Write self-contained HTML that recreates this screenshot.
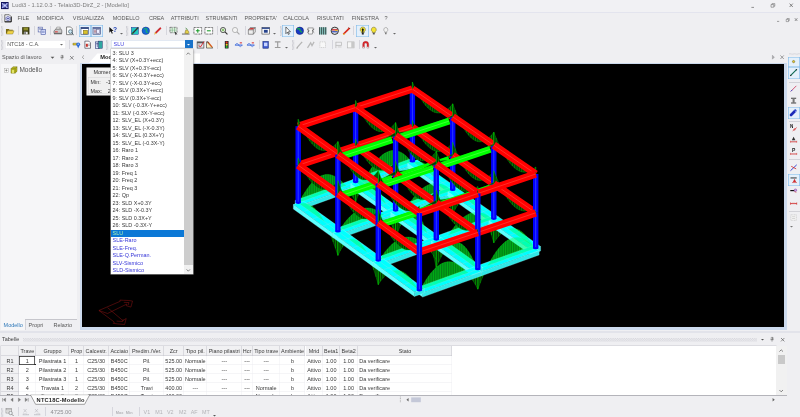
<!DOCTYPE html>
<html><head><meta charset="utf-8"><title>Ludi3</title>
<style>
html,body{margin:0;padding:0;background:#efeff2;}
body{width:800px;height:417px;overflow:hidden;font-family:"Liberation Sans",sans-serif;font-size:5.5px;color:#444;}
#app{position:relative;width:800px;height:417px;background:#efeff2;overflow:hidden;will-change:transform;}
.abs{position:absolute;}
.t{position:absolute;white-space:nowrap;line-height:1;}
svg{position:absolute;overflow:visible;}
#titlebar{left:0;top:0;width:800px;height:12px;background:#f1f1f4;border-bottom:0.5px solid #e3e4ee;}
.menu{position:absolute;top:15.8px;font-size:5.5px;color:#595959;line-height:1;white-space:nowrap;}
.sep{position:absolute;width:0.5px;background:#d6d6dd;}
.selbox{position:absolute;background:#e4f0fb;box-shadow:inset 0 0 0 0.6px #7db7e8;}
.combo{position:absolute;background:#fff;box-shadow:inset 0 0 0 0.5px #e2e2e8;}
#vp{left:82.4px;top:64.3px;width:701.8px;height:263px;background:#000;overflow:hidden;}
#vpframe{left:79.5px;top:62.5px;width:707.3px;height:267.3px;background:#ccdaed;}
#left{left:1px;top:63.5px;width:75.5px;height:256px;background:#f6f6f8;}
#dd{left:111px;top:48.5px;width:81.5px;height:225.5px;background:#fff;box-shadow:0 0 0 0.5px #b9b9b9, 1px 1px 2px rgba(0,0,0,.25);overflow:hidden;}
.li{position:absolute;left:1.6px;font-size:5.45px;color:#3a3a3a;line-height:1;white-space:nowrap;}
.li.b{color:#3636d8;}
.li i{font-style:normal;}
#tbl{left:1px;top:345.5px;width:774.5px;height:49.8px;background:#fff;overflow:hidden;box-shadow:0 0 0 0.5px #c9c9cf;}
.hc{position:absolute;top:0;height:10.1px;background:#f1f1f3;box-shadow:inset -0.5px -0.5px 0 0 #c4c4cc;font-size:5.45px;color:#3a3a3a;text-align:center;line-height:11px;white-space:nowrap;overflow:hidden;}
.rh{position:absolute;left:0;width:18px;height:9.2px;background:#f1f1f3;box-shadow:inset -0.5px -0.5px 0 0 #c4c4cc;font-size:5.45px;color:#3a3a3a;text-align:center;line-height:10.2px;}
.c{position:absolute;height:9.2px;font-size:5.5px;color:#3a3a3a;text-align:center;line-height:10.2px;white-space:nowrap;overflow:hidden;box-shadow:inset -0.4px -0.4px 0 0 #ececf0;}
.g{color:#b4b4b8;}
</style></head>
<body>
<div id="app">
<div id="titlebar" class="abs"></div><svg class="abs" style="left:1.2px;top:1.7px" width="7.6" height="7.1" viewBox="0 0 10 10" preserveAspectRatio="none"><rect width="10" height="10" fill="#10125c"/><path d="M2 2.4L8 7.6M8 2.4L2 7.6" stroke="#8f98e0" stroke-width="2" stroke-linecap="round"/><path d="M5 1.4v7.2M1.4 5h7.2" stroke="#7d86d8" stroke-width="1"/><circle cx="5" cy="5" r="1.5" fill="#cdd2f7"/><circle cx="2.4" cy="2.8" r=".9" fill="#bcc3f2"/><circle cx="7.6" cy="2.8" r=".9" fill="#bcc3f2"/><circle cx="2.4" cy="7.2" r=".9" fill="#bcc3f2"/><circle cx="7.6" cy="7.2" r=".9" fill="#bcc3f2"/></svg>
<div class="t" style="left:12px;top:3px;font-size:5.85px;color:#7c7c7c">Ludi3 - 1.12.0.3 - Telaio3D-DirZ_2 - [Modello]</div>
<svg class="abs" style="left:748px;top:2px" width="50" height="8"><path d="M3.4 5.4h2.6" stroke="#666" stroke-width=".7"/><path d="M23 2.6h2.8v2.6H23zM24 2.6V1.6h2.8v2.6h-1" fill="none" stroke="#666" stroke-width=".55"/><path d="M41.6 1.6l3.2 3.4M44.8 1.6l-3.2 3.4" stroke="#555" stroke-width=".7"/></svg>
<svg class="abs" style="left:1.2px;top:14px" width="2" height="9"><path d="M0.5 0V9M1.7 0.65V9" stroke="#acacb6" stroke-width="0.7" stroke-dasharray="0.65 0.65"/></svg><svg class="abs" style="left:4px;top:13.8px" width="8" height="8.6" viewBox="0 0 10 10"><path d="M1 .6h5.6L9 3v6.4H1z" fill="#fff" stroke="#222" stroke-width=".8"/><path d="M1 9.4h8V3" fill="none" stroke="#111" stroke-width="1.1"/><path d="M5 2.6L7.6 4v2.8L5 8.2 2.4 6.8V4z" fill="#dfe2fa" stroke="#2a2f8c" stroke-width=".7"/><circle cx="5" cy="5.4" r="1" fill="#2a2f8c"/></svg><div class="menu" style="left:17.6px">FILE</div><div class="menu" style="left:36.8px">MODIFICA</div><div class="menu" style="left:72.8px">VISUALIZZA</div><div class="menu" style="left:112.7px">MODELLO</div><div class="menu" style="left:149px">CREA</div><div class="menu" style="left:170.7px">ATTRIBUTI</div><div class="menu" style="left:205.5px">STRUMENTI</div><div class="menu" style="left:244.5px">PROPRIETA'</div><div class="menu" style="left:283.2px">CALCOLA</div><div class="menu" style="left:317px">RISULTATI</div><div class="menu" style="left:351.7px">FINESTRA</div><div class="menu" style="left:384.5px">?</div><svg class="abs" style="left:774px;top:17px" width="26" height="6"><path d="M3 4.4h2.2" stroke="#666" stroke-width=".6"/><path d="M12.2 2.4h2.3v2.2h-2.3zM13 2.4V1.5h2.3v2.2h-.8" fill="none" stroke="#666" stroke-width=".5"/><path d="M20.8 1.2l2.6 2.8M23.4 1.2l-2.6 2.8" stroke="#555" stroke-width=".6"/></svg>
<svg class="abs" style="left:1.2px;top:26px" width="2" height="10"><path d="M0.5 0V10M1.7 0.65V10" stroke="#acacb6" stroke-width="0.7" stroke-dasharray="0.65 0.65"/></svg><div class="selbox" style="left:79px;top:25px;width:12px;height:11.5px"></div><div class="selbox" style="left:91px;top:25px;width:11.599999999999994px;height:11.5px"></div><div class="selbox" style="left:282px;top:25px;width:12px;height:11.5px"></div><div class="selbox" style="left:356px;top:25px;width:13px;height:11.5px"></div><svg class="abs" style="left:5.2px;top:25.8px" width="9.6" height="9.6" viewBox="0 0 10 10"><path d="M1 3.2h3l.8.8h3.4v1H3L1.6 8.2H1z" fill="#7a6a10"/><path d="M3 5h6.4L8 8.4H1.4z" fill="#f1d54a" stroke="#6b5b10" stroke-width=".4"/></svg><svg class="abs" style="left:21.2px;top:25.8px" width="9.6" height="9.6" viewBox="0 0 10 10"><rect x="1.2" y="1.2" width="7.6" height="7.6" fill="#3a3a12" /><rect x="2.6" y="1.6" width="4.8" height="3" fill="#8d8d2a"/><rect x="3" y="6" width="4" height="2.8" fill="#e8e8e8"/><rect x="3.6" y="6.4" width="1.2" height="2" fill="#333"/></svg><svg class="abs" style="left:37.2px;top:25.8px" width="9.6" height="9.6" viewBox="0 0 10 10"><rect x="1.2" y="1.2" width="4.6" height="5" fill="#fff" stroke="#3c4d9c" stroke-width=".6"/><rect x="4.2" y="3.8" width="4.6" height="5" fill="#dfe5ff" stroke="#3c4d9c" stroke-width=".6"/><path d="M2 2.6h3M2 3.8h2M5 5.4h3M5 6.6h3" stroke="#3c4d9c" stroke-width=".5"/></svg><svg class="abs" style="left:53.2px;top:25.8px" width="9.6" height="9.6" viewBox="0 0 10 10"><path d="M1 5l2.4-2h5L9.2 5v2.6H1z" fill="#c9c9c9" stroke="#333" stroke-width=".5"/><path d="M3 3l1-1.8h3.6L7 3z" fill="#fff" stroke="#333" stroke-width=".4"/><rect x="2" y="5.6" width="3" height="1" fill="#d33"/><path d="M1 7.6h8.2v1H1z" fill="#555"/></svg><svg class="abs" style="left:64.7px;top:25.8px" width="9.6" height="9.6" viewBox="0 0 10 10"><path d="M1.6 1h4.2l1.8 1.8V9H1.6z" fill="#fff" stroke="#333" stroke-width=".6"/><circle cx="5.6" cy="5.8" r="1.9" fill="#cfe8f4" stroke="#245" stroke-width=".6"/><path d="M7 7.2l2 2" stroke="#245" stroke-width=".9"/></svg><svg class="abs" style="left:80.2px;top:25.8px" width="9.6" height="9.6" viewBox="0 0 10 10"><rect x="1" y="1.4" width="8" height="7.2" fill="#fff" stroke="#223a78" stroke-width=".6"/><rect x="1" y="1.4" width="8" height="1.6" fill="#223a78"/><rect x="3.4" y="4.4" width="4.6" height="4" fill="#d8c12c" stroke="#5a4c08" stroke-width=".4"/></svg><svg class="abs" style="left:92.0px;top:25.8px" width="9.6" height="9.6" viewBox="0 0 10 10"><rect x="1" y="1.4" width="8" height="7.2" fill="#c9d4ea" stroke="#33437a" stroke-width=".6"/><rect x="1" y="1.4" width="8" height="1.6" fill="#5c6a9c"/><path d="M2 4.4h6M2 5.8h6M2 7.2h6" stroke="#b04a4a" stroke-width=".5"/><rect x="5" y="4" width="3" height="3.4" fill="#eef" stroke="#33437a" stroke-width=".3"/></svg><svg class="abs" style="left:108.2px;top:25.8px" width="9.6" height="9.6" viewBox="0 0 10 10"><path d="M1.4 1l0 6 1.5-1.4 1.1 2.4 1-.5-1.1-2.3h2z" fill="#111"/><text x="5.2" y="6.6" font-family="Liberation Sans,sans-serif" font-weight="bold" font-size="7" fill="#1c3fb4">?</text></svg><svg class="abs" style="left:130.2px;top:25.8px" width="9.6" height="9.6" viewBox="0 0 10 10"><rect x="1.4" y="1.4" width="7.4" height="7.4" fill="#23c8c0" stroke="#108" stroke-width=".4"/><path d="M2 8.4L8.6 1.6" stroke="#333" stroke-width="1.3"/><path d="M2 8.4l1.4-.4" stroke="#2a2" stroke-width="1"/></svg><svg class="abs" style="left:141.2px;top:25.8px" width="9.6" height="9.6" viewBox="0 0 10 10"><circle cx="5" cy="5" r="3.9" fill="#1466d8" stroke="#0a2c7a" stroke-width=".5"/><path d="M3 3.2c1-.8 2.6-.6 3 .4s-1 1.2-.6 2.2 1.8.6 1.6 1.6" stroke="#19b26b" stroke-width="1.2" fill="none"/></svg><svg class="abs" style="left:153.2px;top:25.8px" width="9.6" height="9.6" viewBox="0 0 10 10"><path d="M1.4 8.8l1-2.2L7.6 1.4l1.2 1.2-5.2 5.2z" fill="#d8262c"/><path d="M1.4 8.8l1-2.2 1.2 1.2z" fill="#e8d83a"/><path d="M2.4 6.6L7.6 1.4" stroke="#7a1010" stroke-width=".4"/></svg><svg class="abs" style="left:169.2px;top:25.8px" width="9.6" height="9.6" viewBox="0 0 10 10"><rect x="1" y="1.4" width="7.4" height="5.6" fill="#fff" stroke="#222" stroke-width=".7" stroke-dasharray=".8 .6"/><path d="M1 3.2h7.4M1 5h7.4M3.4 1.4v5.6M5.8 1.4v5.6" stroke="#2a8a3a" stroke-width=".4"/><path d="M6 5.4l2.8 3.4-1.4-.2-.6 1z" fill="#222"/></svg><svg class="abs" style="left:180.7px;top:25.8px" width="9.6" height="9.6" viewBox="0 0 10 10"><path d="M1 8.4h8" stroke="#222" stroke-width=".7"/><path d="M4 7.6l1-3.6 2 .4 1.4 2-1 1.6z" fill="#e3cf4a" stroke="#5a4a08" stroke-width=".4"/><path d="M4.8 2.2l2 1.4" stroke="#2a7a2a" stroke-width=".8"/></svg><svg class="abs" style="left:192.7px;top:25.8px" width="9.6" height="9.6" viewBox="0 0 10 10"><rect x="1" y="1.6" width="8" height="6.8" fill="#fff" stroke="#222" stroke-width=".75" stroke-dasharray=".9 .6"/><path d="M3 5h4M5 3v4" stroke="#189a28" stroke-width="1.1"/></svg><svg class="abs" style="left:204.2px;top:25.8px" width="9.6" height="9.6" viewBox="0 0 10 10"><rect x="1" y="1.6" width="8" height="6.8" fill="#fff" stroke="#222" stroke-width=".75" stroke-dasharray=".9 .6"/><path d="M3 5h4" stroke="#189a28" stroke-width="1.1"/></svg><svg class="abs" style="left:219.2px;top:25.8px" width="9.6" height="9.6" viewBox="0 0 10 10"><circle cx="4.2" cy="4.2" r="2.7" fill="#e6f3e0" stroke="#333" stroke-width=".8"/><path d="M6.2 6.2l2.6 2.6" stroke="#333" stroke-width="1.2"/><circle cx="4.2" cy="4.2" r="1.3" fill="#8ac070"/></svg><svg class="abs" style="left:231.2px;top:25.8px" width="9.6" height="9.6" viewBox="0 0 10 10"><circle cx="4.2" cy="4.2" r="2.7" fill="#f4f4f4" stroke="#a8a8a8" stroke-width=".8"/><path d="M6.2 6.2l2.6 2.6" stroke="#a8a8a8" stroke-width="1.2"/></svg><svg class="abs" style="left:247.2px;top:25.8px" width="9.6" height="9.6" viewBox="0 0 10 10"><path d="M1.4 4l2-2.4h5.2v4.6l-2 2.4H1.4z" fill="#eee" stroke="#333" stroke-width=".5"/><path d="M1.4 4h5.2v4.6M6.6 4l2-2.4" stroke="#333" stroke-width=".5" fill="none"/><path d="M2 3.6l1.6-1.6h4L6.2 3.6z" fill="#c83c3c"/></svg><svg class="abs" style="left:261.2px;top:25.8px" width="9.6" height="9.6" viewBox="0 0 10 10"><rect x="1" y="1.6" width="8" height="6.8" fill="#fff" stroke="#333" stroke-width=".6"/><rect x="1" y="1.6" width="8" height="1.4" fill="#26428c"/><rect x="3" y="4" width="4" height="3" fill="#26428c"/></svg><svg class="abs" style="left:283.2px;top:25.8px" width="9.6" height="9.6" viewBox="0 0 10 10"><path d="M3 1v7l1.6-1.6 1 2.4 1-.4-1-2.4h2.2z" fill="#fff" stroke="#111" stroke-width=".6"/></svg><svg class="abs" style="left:294.7px;top:25.8px" width="9.6" height="9.6" viewBox="0 0 10 10"><circle cx="5" cy="5" r="3.9" fill="#1638c8" stroke="#07135a" stroke-width=".5"/><path d="M2.4 3.6c1.2-1.6 3-.8 2.8.6s1.4 1 2 2.6" stroke="#18a84a" stroke-width="1.5" fill="none"/></svg><svg class="abs" style="left:306.2px;top:25.8px" width="9.6" height="9.6" viewBox="0 0 10 10"><path d="M2 2h5.6l-1 6.4H2.6z" fill="#f4f4f4" stroke="#444" stroke-width=".5"/><path d="M1.4 3.4l2 1.6-2 1.8M8.6 3l-2 2 2 2" stroke="#333" stroke-width=".6" fill="none"/></svg><svg class="abs" style="left:318.2px;top:25.8px" width="9.6" height="9.6" viewBox="0 0 10 10"><rect x="1.2" y="1.4" width="7.6" height="7.4" fill="#9fe6e0"/><path d="M1.8 1.2v7.8M3.9 1.2v7.8M6 1.2v7.8M8.1 1.2v7.8" stroke="#0a0a0a" stroke-width=".85"/></svg><svg class="abs" style="left:330.2px;top:25.8px" width="9.6" height="9.6" viewBox="0 0 10 10"><circle cx="5" cy="5" r="3.8" fill="#e6e6e6" stroke="#1a1a1a" stroke-width=".9"/><path d="M2 4h6" stroke="#c22" stroke-width="1.3"/><path d="M2.2 6h5.6" stroke="#24b" stroke-width="1.2"/><path d="M5.4 4.8h2.4" stroke="#e8c020" stroke-width="1"/></svg><svg class="abs" style="left:342.2px;top:25.8px" width="9.6" height="9.6" viewBox="0 0 10 10"><path d="M1.4 8.6L7.8 2.2" stroke="#d82a1c" stroke-width="1.8"/><path d="M1.2 8.8l1.6-.6" stroke="#e8c83a" stroke-width="1.2"/><path d="M7 1.6l1.4 1.4" stroke="#7a1a10" stroke-width="1"/></svg><svg class="abs" style="left:357.7px;top:25.8px" width="9.6" height="9.6" viewBox="0 0 10 10"><path d="M5 1a2.7 2.7 0 0 1 1.6 4.9v1H3.4v-1A2.7 2.7 0 0 1 5 1z" fill="#f1e437" stroke="#4a4208" stroke-width=".4"/><path d="M5 2.2l1.2 1.6L5.6 5v2H4.4V5l-.6-1.2z" fill="#111"/><rect x="4" y="7" width="2" height="1.9" fill="#222"/></svg><svg class="abs" style="left:369.2px;top:25.8px" width="9.6" height="9.6" viewBox="0 0 10 10"><path d="M5 1.2a2.6 2.6 0 0 1 1.5 4.7v1H3.5v-1A2.6 2.6 0 0 1 5 1.2z" fill="#f4e334" stroke="#6a5d08" stroke-width=".5"/><rect x="4" y="7" width="2" height="1.8" fill="#555"/></svg><svg class="abs" style="left:380.7px;top:25.8px" width="9.6" height="9.6" viewBox="0 0 10 10"><path d="M5 1.6a2.2 2.2 0 0 1 1.2 4v1H3.8v-1A2.2 2.2 0 0 1 5 1.6z" fill="#f2f2f2" stroke="#777" stroke-width=".5"/><rect x="4.2" y="6.8" width="1.6" height="1.8" fill="#777"/></svg><div class="sep" style="left:17.8px;top:26.2px;height:9px"></div><div class="sep" style="left:33.5px;top:26.2px;height:9px"></div><div class="sep" style="left:50px;top:26.2px;height:9px"></div><div class="sep" style="left:76px;top:26.2px;height:9px"></div><div class="sep" style="left:166px;top:26.2px;height:9px"></div><div class="sep" style="left:216.5px;top:26.2px;height:9px"></div><div class="sep" style="left:244.5px;top:26.2px;height:9px"></div><div class="sep" style="left:352.5px;top:26.2px;height:9px"></div><svg class="abs" style="left:125.6px;top:26px" width="2" height="10"><path d="M0.5 0V10M1.7 0.65V10" stroke="#acacb6" stroke-width="0.7" stroke-dasharray="0.65 0.65"/></svg><svg class="abs" style="left:280px;top:26px" width="2" height="10"><path d="M0.5 0V10M1.7 0.65V10" stroke="#acacb6" stroke-width="0.7" stroke-dasharray="0.65 0.65"/></svg><svg class="abs" style="left:119.5px;top:33.2px" width="3" height="2"><path d="M0 0H3L1.5 1.6Z" fill="#666"/></svg><svg class="abs" style="left:273.0px;top:33.2px" width="3" height="2"><path d="M0 0H3L1.5 1.6Z" fill="#666"/></svg><svg class="abs" style="left:392.5px;top:33.2px" width="3" height="2"><path d="M0 0H3L1.5 1.6Z" fill="#666"/></svg>
<svg class="abs" style="left:1.2px;top:40px" width="2" height="10"><path d="M0.5 0V10M1.7 0.65V10" stroke="#acacb6" stroke-width="0.7" stroke-dasharray="0.65 0.65"/></svg><div class="combo" style="left:5px;top:39.6px;width:60.5px;height:9.6px"></div><div class="t" style="left:7.2px;top:42px;font-size:5.4px;color:#555">NTC18 - C.A.</div><svg class="abs" style="left:60.3px;top:44px" width="3" height="2"><path d="M0 0H3L1.5 1.6Z" fill="#666"/></svg><div class="combo" style="left:110.6px;top:39.7px;width:82px;height:8.6px;box-shadow:inset 0 0 0 0.5px #c7d3e8"></div><div class="t" style="left:113.6px;top:41.7px;font-size:5.4px;color:#3f3fe0">SLU</div><div class="abs" style="left:185px;top:39.7px;width:7.6px;height:8.6px;background:#1a73c9"></div><svg class="abs" style="left:187.3px;top:43.6px" width="3" height="2"><path d="M0 0H3L1.5 1.6Z" fill="#fff"/></svg><svg class="abs" style="left:71.8px;top:39.699999999999996px" width="9.4" height="9.4" viewBox="0 0 10 10"><path d="M1 3.4h4.4v2H1z" fill="#e0c82a" stroke="#5d5008" stroke-width=".4"/><circle cx="6.6" cy="4.6" r="2" fill="#2a6ad8"/><path d="M5.4 6l1.2 3 1.2-3z" fill="#2a6ad8"/><circle cx="6.6" cy="4.4" r=".7" fill="#bfe0ff"/></svg><svg class="abs" style="left:83.3px;top:39.699999999999996px" width="9.4" height="9.4" viewBox="0 0 10 10"><path d="M2 1.2h4.2L8 3v5.8H2z" fill="#fff" stroke="#223" stroke-width=".6"/><rect x="3" y="4" width="2.2" height="3.2" fill="#c8322a"/><path d="M5.6 4.4h1.6M5.6 6h1.6" stroke="#223" stroke-width=".5"/></svg><svg class="abs" style="left:94.3px;top:39.699999999999996px" width="9.4" height="9.4" viewBox="0 0 10 10"><rect x="1.4" y="2" width="4.4" height="6.8" fill="#e8ecff" stroke="#1c2a6a" stroke-width=".6"/><rect x="4.8" y="1.2" width="4" height="7.6" fill="#2fa7a0" stroke="#1c2a6a" stroke-width=".5"/><path d="M2.2 4h2.6M3.5 2.6v5" stroke="#1c2a6a" stroke-width=".6"/></svg><svg class="abs" style="left:195.8px;top:39.699999999999996px" width="9.4" height="9.4" viewBox="0 0 10 10"><rect x="1.2" y="2" width="7.2" height="6.6" fill="#e4e4e8" stroke="#444" stroke-width=".7"/><rect x="1.2" y="2" width="7.2" height="1.5" fill="#555"/><path d="M3 5.6l1.6 2L8.6 1.6" stroke="#d4222a" stroke-width="1" fill="none"/><path d="M2.2 5h2M2.2 6.6h1.4" stroke="#888" stroke-width=".5"/></svg><svg class="abs" style="left:205.3px;top:39.699999999999996px" width="9.4" height="9.4" viewBox="0 0 10 10"><path d="M1.6 8.6h6.8L1.6 1.8z" fill="#fbeec0" stroke="#222" stroke-width=".6"/><path d="M3 2l4.6 5.6" stroke="#d85a18" stroke-width="1.4"/><path d="M2.4 1.4l1.2 1.4" stroke="#333" stroke-width="1"/></svg><svg class="abs" style="left:222.0px;top:39.699999999999996px" width="9.4" height="9.4" viewBox="0 0 10 10"><rect x="3" y="1" width="4" height="8" rx=".6" fill="#2a2a2a"/><circle cx="5" cy="2.6" r="1.1" fill="#f03020"/><circle cx="5" cy="5" r="1.1" fill="#f0d820"/><circle cx="5" cy="7.4" r="1.1" fill="#20c030"/></svg><svg class="abs" style="left:234.0px;top:39.699999999999996px" width="9.4" height="9.4" viewBox="0 0 10 10"><path d="M1 5.4h8" stroke="#2458d8" stroke-width="1"/><path d="M1.4 5.4c1-2.4 2.6-2.4 3.6 0s2.6 2 3.6 0" stroke="#2458d8" stroke-width=".6" fill="none"/><path d="M6 3h2.6M7.4 2.2v1.6" stroke="#d82a2a" stroke-width=".7"/></svg><svg class="abs" style="left:246.0px;top:39.699999999999996px" width="9.4" height="9.4" viewBox="0 0 10 10"><path d="M1 5.4h8" stroke="#2458d8" stroke-width="1"/><path d="M1.4 5.4c1-2.4 2.6-2.4 3.6 0s2.6 2 3.6 0" stroke="#2458d8" stroke-width=".6" fill="none"/><path d="M6 3h2.6M7.4 2.2v1.6" stroke="#d82a2a" stroke-width=".7"/></svg><svg class="abs" style="left:260.8px;top:39.699999999999996px" width="9.4" height="9.4" viewBox="0 0 10 10"><rect x="2" y="1.4" width="6" height="7.4" fill="#3a56c8" stroke="#16266a" stroke-width=".5"/><rect x="3.2" y="2.8" width="3.6" height="3.8" fill="#c8d4ff"/></svg><svg class="abs" style="left:273.3px;top:39.699999999999996px" width="9.4" height="9.4" viewBox="0 0 10 10"><path d="M2 2h6M2 8h6M5 2v6" stroke="#9a9a9a" stroke-width="1.2"/></svg><svg class="abs" style="left:295.3px;top:39.699999999999996px" width="9.4" height="9.4" viewBox="0 0 10 10"><path d="M2 8.4L7.6 2" stroke="#b4b4b4" stroke-width="1.4"/><path d="M1.6 8.8l1.4-.4" stroke="#999" stroke-width="1"/></svg><svg class="abs" style="left:306.3px;top:39.699999999999996px" width="9.4" height="9.4" viewBox="0 0 10 10"><path d="M1.6 8.4L5 3l1.4 3L8.6 2" stroke="#b8b8b8" stroke-width="1.3" fill="none"/></svg><svg class="abs" style="left:318.3px;top:39.699999999999996px" width="9.4" height="9.4" viewBox="0 0 10 10"><rect x="2" y="2" width="6" height="6" fill="#f8f8f8" stroke="#c2c2c2" stroke-width=".7" stroke-dasharray="1.4 .8"/></svg><svg class="abs" style="left:334.3px;top:39.699999999999996px" width="9.4" height="9.4" viewBox="0 0 10 10"><path d="M2 2v6.6M2 2.4h6v3.4H2" fill="none" stroke="#b8b8b8" stroke-width=".8"/><path d="M4 7.4h4" stroke="#c4c4c4" stroke-width=".8"/></svg><svg class="abs" style="left:346.0px;top:39.699999999999996px" width="9.4" height="9.4" viewBox="0 0 10 10"><rect x="1.4" y="2" width="7.2" height="6.4" fill="#f6f6f6" stroke="#b4b4b4" stroke-width=".7"/><rect x="5.6" y="2" width="3" height="6.4" fill="#c8c8c8"/></svg><svg class="abs" style="left:361.3px;top:39.699999999999996px" width="9.4" height="9.4" viewBox="0 0 10 10"><path d="M1.8 8.6V4.6a3.2 3.2 0 0 1 6.4 0V8.6H6.4V4.6a1.4 1.4 0 0 0-2.8 0V8.6z" fill="#e2262c" stroke="#7a1010" stroke-width=".3"/><rect x="1.8" y="7.2" width="1.8" height="1.6" fill="#d8d8d8"/><rect x="6.4" y="7.2" width="1.8" height="1.6" fill="#d8d8d8"/></svg><div class="sep" style="left:68.5px;top:40px;height:9px"></div><div class="sep" style="left:216.5px;top:40px;height:9px"></div><div class="sep" style="left:258.7px;top:40px;height:9px"></div><div class="sep" style="left:331.7px;top:40px;height:9px"></div><div class="sep" style="left:358.7px;top:40px;height:9px"></div><svg class="abs" style="left:105.5px;top:40px" width="2" height="10"><path d="M0.5 0V10M1.7 0.65V10" stroke="#acacb6" stroke-width="0.7" stroke-dasharray="0.65 0.65"/></svg><svg class="abs" style="left:292px;top:40px" width="2" height="10"><path d="M0.5 0V10M1.7 0.65V10" stroke="#acacb6" stroke-width="0.7" stroke-dasharray="0.65 0.65"/></svg><svg class="abs" style="left:284.5px;top:47px" width="3" height="2"><path d="M0 0H3L1.5 1.6Z" fill="#666"/></svg><svg class="abs" style="left:373.5px;top:47px" width="3" height="2"><path d="M0 0H3L1.5 1.6Z" fill="#666"/></svg>
<div id="left" class="abs"></div><div class="t" style="left:2px;top:54.8px;font-size:5.55px;color:#555">Spazio di lavoro</div><svg class="abs" style="left:51.1px;top:57px" width="3" height="2" transform="scale(1.25)"><path d="M0 0H3L1.5 1.6Z" fill="#555"/></svg><svg class="abs" style="left:60.2px;top:54.9px" width="4" height="5"><path d="M1.2 .4h1.8v2.2H1.2zM.4 2.7h3.2M2 2.7v2" stroke="#666" stroke-width=".5" fill="none"/><path d="M2.6 .4v2.2" stroke="#666" stroke-width=".7"/></svg><svg class="abs" style="left:70.2px;top:55.800000000000004px" width="3.6" height="3.6"><path d="M0 0L3.6 3.6M3.6 0L0 3.6" stroke="#555" stroke-width="0.65"/></svg><svg class="abs" style="left:3.6px;top:68px" width="5" height="5"><rect x=".3" y=".3" width="4.2" height="4.2" fill="#fff" stroke="#aaa" stroke-width=".5"/><path d="M1.2 2.4h2.4M2.4 1.2v2.4" stroke="#555" stroke-width=".5"/></svg><svg class="abs" style="left:9.6px;top:66.2px" width="8" height="7.6" viewBox="0 0 10 10"><path d="M1 3.6L3.6 1H9v6L6.6 9.4H1z" fill="#b9b822" stroke="#66650c" stroke-width=".5"/><path d="M1 3.6h5.6V9.4M6.6 3.6L9 1" stroke="#66650c" stroke-width=".5" fill="none"/><path d="M2.6 5.2h2.2v4H2.6z" fill="#ecec7a"/></svg><div class="t" style="left:19.4px;top:67px;font-size:6.5px;color:#555">Modello</div><div class="abs" style="left:1px;top:319.5px;width:23.8px;height:10.3px;background:#f6f6f8"></div><div class="abs" style="left:24.8px;top:319.3px;width:51.8px;height:0.6px;background:#c6c6cc"></div><div class="abs" style="left:24.6px;top:319.5px;width:0.5px;height:10px;background:#d4d4da"></div><div class="t" style="left:3.6px;top:323px;font-size:5.5px;color:#2f79b9">Modello</div><div class="t" style="left:28.6px;top:323px;font-size:5.5px;color:#555">Propri</div><div class="t" style="left:53.6px;top:323px;font-size:5.5px;color:#555">Relazio</div>
<svg class="abs" style="left:80px;top:51px" width="720" height="14"><path d="M8.6 12.2L17.4 2.6H120V12.2z" fill="#fff"/><path d="M4 4.4L2.2 6.2 4 8" stroke="#777" stroke-width=".6" fill="none"/><path d="M692.4 4.2v4l2-2z" fill="#a9a9ad" stroke="#8a8a8e" stroke-width=".4"/><path d="M700.4 4.4l3.4 3.6M703.8 4.4l-3.4 3.6" stroke="#666" stroke-width=".6"/></svg><div class="t" style="left:100.2px;top:54.5px;font-size:5.7px;font-weight:bold;color:#222">Modello</div><div id="vpframe" class="abs"></div><div id="vp" class="abs">
<svg id="model" width="703" height="263" viewBox="82.4 64.3 703 263" style="position:absolute;left:0;top:0"><polygon points="356.0,182.4 358.2,181.5 360.5,180.7 362.8,179.9 365.1,179.1 367.3,178.3 369.6,177.4 371.9,176.6 374.2,175.8 376.4,175.0 378.7,174.2 381.0,173.3 383.2,172.5 385.5,171.7 387.8,170.9 390.1,170.0 392.3,169.2 394.6,168.4 396.9,167.6 399.2,166.8 401.4,165.9 403.7,165.1 406.0,164.3 408.2,163.5 410.5,162.6 412.8,161.8 412.8,163.3 410.5,162.6 408.2,163.5 406.0,164.3 403.7,165.1 401.4,165.9 399.2,166.8 396.9,167.6 394.6,168.4 392.3,169.2 390.1,170.0 387.8,170.9 385.5,171.7 383.2,172.5 381.0,173.3 378.7,174.2 376.4,175.0 374.2,175.8 371.9,176.6 369.6,177.4 367.3,178.3 365.1,180.7 362.8,185.5 360.5,190.8 358.2,196.4 356.0,202.4" fill="#043604" stroke="#00c000" stroke-width="0.35" fill-opacity="1"/><path d="M356.0,182.4L356.0,202.4M358.2,181.5L358.2,196.4M360.5,180.7L360.5,190.8M362.8,179.9L362.8,185.5M365.1,179.1L365.1,180.7M367.3,178.3L367.3,178.3M369.6,177.4L369.6,177.4M371.9,176.6L371.9,176.6M374.2,175.8L374.2,175.8M376.4,175.0L376.4,175.0M378.7,174.2L378.7,174.2M381.0,173.3L381.0,173.3M383.2,172.5L383.2,172.5M385.5,171.7L385.5,171.7M387.8,170.9L387.8,170.9M390.1,170.0L390.1,170.0M392.3,169.2L392.3,169.2M394.6,168.4L394.6,168.4M396.9,167.6L396.9,167.6M399.2,166.8L399.2,166.8M401.4,165.9L401.4,165.9M403.7,165.1L403.7,165.1M406.0,164.3L406.0,164.3M408.2,163.5L408.2,163.5M410.5,162.6L410.5,162.6M412.8,161.8L412.8,163.3" stroke="#00e400" stroke-width="0.42" fill="none"/><polygon points="412.8,161.8 415.0,163.4 417.3,165.0 419.5,166.6 421.8,168.1 424.0,169.7 426.2,171.3 428.5,172.9 430.7,174.4 433.0,176.0 435.2,177.6 437.4,179.2 439.7,180.7 441.9,182.3 444.2,183.9 446.4,185.5 448.6,187.1 450.9,188.6 453.1,190.2 453.1,214.2 450.9,207.6 448.6,201.5 446.4,195.8 444.2,190.6 441.9,185.8 439.7,181.4 437.4,179.2 435.2,177.6 433.0,176.0 430.7,174.4 428.5,172.9 426.2,171.3 424.0,169.7 421.8,168.1 419.5,166.6 417.3,165.0 415.0,163.4 412.8,163.8" fill="#043604" stroke="#00c000" stroke-width="0.35" fill-opacity="1"/><path d="M412.8,161.8L412.8,163.8M415.0,163.4L415.0,163.4M417.3,165.0L417.3,165.0M419.5,166.6L419.5,166.6M421.8,168.1L421.8,168.1M424.0,169.7L424.0,169.7M426.2,171.3L426.2,171.3M428.5,172.9L428.5,172.9M430.7,174.4L430.7,174.4M433.0,176.0L433.0,176.0M435.2,177.6L435.2,177.6M437.4,179.2L437.4,179.2M439.7,180.7L439.7,181.4M441.9,182.3L441.9,185.8M444.2,183.9L444.2,190.6M446.4,185.5L446.4,195.8M448.6,187.1L448.6,201.5M450.9,188.6L450.9,207.6M453.1,190.2L453.1,214.2" stroke="#00e400" stroke-width="0.42" fill="none"/><polygon points="298.6,203.1 300.9,202.3 303.2,201.4 305.5,200.6 307.8,199.8 310.1,198.9 312.4,198.1 314.7,197.3 317.0,196.5 319.3,195.6 321.6,194.8 323.9,194.0 326.2,193.1 328.5,192.3 330.7,191.5 333.0,190.7 335.3,189.8 337.6,189.0 339.9,188.2 342.2,187.3 344.5,186.5 346.8,185.7 349.1,184.9 351.4,184.0 353.7,183.2 356.0,182.4 356.0,202.4 353.7,198.0 351.4,194.1 349.1,190.5 346.8,187.3 344.5,186.5 342.2,187.3 339.9,188.2 337.6,189.0 335.3,189.8 333.0,190.7 330.7,191.5 328.5,192.3 326.2,193.1 323.9,194.0 321.6,194.8 319.3,195.6 317.0,196.5 314.7,197.3 312.4,198.1 310.1,198.9 307.8,199.8 305.5,200.6 303.2,201.4 300.9,202.3 298.6,204.6" fill="#043604" stroke="#00c000" stroke-width="0.35" fill-opacity="1"/><path d="M298.6,203.1L298.6,204.6M300.9,202.3L300.9,202.3M303.2,201.4L303.2,201.4M305.5,200.6L305.5,200.6M307.8,199.8L307.8,199.8M310.1,198.9L310.1,198.9M312.4,198.1L312.4,198.1M314.7,197.3L314.7,197.3M317.0,196.5L317.0,196.5M319.3,195.6L319.3,195.6M321.6,194.8L321.6,194.8M323.9,194.0L323.9,194.0M326.2,193.1L326.2,193.1M328.5,192.3L328.5,192.3M330.7,191.5L330.7,191.5M333.0,190.7L333.0,190.7M335.3,189.8L335.3,189.8M337.6,189.0L337.6,189.0M339.9,188.2L339.9,188.2M342.2,187.3L342.2,187.3M344.5,186.5L344.5,186.5M346.8,185.7L346.8,187.3M349.1,184.9L349.1,190.5M351.4,184.0L351.4,194.1M353.7,183.2L353.7,198.0M356.0,182.4L356.0,202.4" stroke="#00e400" stroke-width="0.42" fill="none"/><polygon points="396.0,210.9 398.2,210.0 400.5,209.2 402.8,208.4 405.1,207.6 407.4,206.7 409.7,205.9 412.0,205.1 414.3,204.3 416.5,203.4 418.8,202.6 421.1,201.8 423.4,200.9 425.7,200.1 428.0,199.3 430.3,198.5 432.5,197.6 434.8,196.8 437.1,196.0 439.4,195.2 441.7,194.3 444.0,193.5 446.3,192.7 448.6,191.9 450.8,191.0 453.1,190.2 453.1,191.7 450.8,191.0 448.6,191.9 446.3,192.7 444.0,193.5 441.7,194.3 439.4,195.2 437.1,196.0 434.8,196.8 432.5,197.6 430.3,198.5 428.0,199.3 425.7,200.1 423.4,200.9 421.1,201.8 418.8,202.6 416.5,203.4 414.3,204.3 412.0,205.1 409.7,205.9 407.4,207.8 405.1,211.8 402.8,216.1 400.5,220.7 398.2,225.7 396.0,230.9" fill="#043604" stroke="#00c000" stroke-width="0.35" fill-opacity="1"/><path d="M396.0,210.9L396.0,230.9M398.2,210.0L398.2,225.7M400.5,209.2L400.5,220.7M402.8,208.4L402.8,216.1M405.1,207.6L405.1,211.8M407.4,206.7L407.4,207.8M409.7,205.9L409.7,205.9M412.0,205.1L412.0,205.1M414.3,204.3L414.3,204.3M416.5,203.4L416.5,203.4M418.8,202.6L418.8,202.6M421.1,201.8L421.1,201.8M423.4,200.9L423.4,200.9M425.7,200.1L425.7,200.1M428.0,199.3L428.0,199.3M430.3,198.5L430.3,198.5M432.5,197.6L432.5,197.6M434.8,196.8L434.8,196.8M437.1,196.0L437.1,196.0M439.4,195.2L439.4,195.2M441.7,194.3L441.7,194.3M444.0,193.5L444.0,193.5M446.3,192.7L446.3,192.7M448.6,191.9L448.6,191.9M450.8,191.0L450.8,191.0M453.1,190.2L453.1,191.7" stroke="#00e400" stroke-width="0.42" fill="none"/><polygon points="356.0,182.4 358.3,184.0 360.7,185.7 363.0,187.4 365.4,189.1 367.7,190.8 370.1,192.4 372.4,194.1 374.8,195.8 377.1,197.5 379.5,199.1 381.8,200.8 384.2,202.5 386.5,204.2 388.9,205.8 391.3,207.5 393.6,209.2 396.0,210.9 396.0,238.9 393.6,229.7 391.3,221.2 388.9,213.6 386.5,206.6 384.2,202.5 381.8,200.8 379.5,199.1 377.1,197.5 374.8,195.8 372.4,194.1 370.1,192.4 367.7,190.8 365.4,189.1 363.0,187.4 360.7,185.7 358.3,184.0 356.0,184.4" fill="#043604" stroke="#00c000" stroke-width="0.35" fill-opacity="1"/><path d="M356.0,182.4L356.0,184.4M358.3,184.0L358.3,184.0M360.7,185.7L360.7,185.7M363.0,187.4L363.0,187.4M365.4,189.1L365.4,189.1M367.7,190.8L367.7,190.8M370.1,192.4L370.1,192.4M372.4,194.1L372.4,194.1M374.8,195.8L374.8,195.8M377.1,197.5L377.1,197.5M379.5,199.1L379.5,199.1M381.8,200.8L381.8,200.8M384.2,202.5L384.2,202.5M386.5,204.2L386.5,206.6M388.9,205.8L388.9,213.6M391.3,207.5L391.3,221.2M393.6,209.2L393.6,229.7M396.0,210.9L396.0,238.9" stroke="#00e400" stroke-width="0.42" fill="none"/><polygon points="453.1,190.2 455.4,191.8 457.7,193.4 460.0,195.0 462.3,196.6 464.5,198.2 466.8,199.8 469.1,201.4 471.4,203.0 473.7,204.7 475.9,206.3 478.2,207.9 480.5,209.5 482.8,211.1 485.1,212.7 487.4,214.3 489.6,215.9 491.9,217.5 494.2,219.1 494.2,243.1 491.9,235.4 489.6,228.4 487.4,222.2 485.1,216.6 482.8,211.8 480.5,209.5 478.2,207.9 475.9,206.3 473.7,204.7 471.4,203.0 469.1,201.4 466.8,199.8 464.5,199.0 462.3,200.6 460.0,202.9 457.7,206.0 455.4,209.7 453.1,214.2" fill="#043604" stroke="#00c000" stroke-width="0.35" fill-opacity="1"/><path d="M453.1,190.2L453.1,214.2M455.4,191.8L455.4,209.7M457.7,193.4L457.7,206.0M460.0,195.0L460.0,202.9M462.3,196.6L462.3,200.6M464.5,198.2L464.5,199.0M466.8,199.8L466.8,199.8M469.1,201.4L469.1,201.4M471.4,203.0L471.4,203.0M473.7,204.7L473.7,204.7M475.9,206.3L475.9,206.3M478.2,207.9L478.2,207.9M480.5,209.5L480.5,209.5M482.8,211.1L482.8,211.8M485.1,212.7L485.1,216.6M487.4,214.3L487.4,222.2M489.6,215.9L489.6,228.4M491.9,217.5L491.9,235.4M494.2,219.1L494.2,243.1" stroke="#00e400" stroke-width="0.42" fill="none"/><polygon points="338.3,231.7 340.6,230.9 342.9,230.0 345.2,229.2 347.5,228.4 349.8,227.5 352.1,226.7 354.4,225.9 356.7,225.0 359.0,224.2 361.3,223.4 363.7,222.5 366.0,221.7 368.3,220.9 370.6,220.0 372.9,219.2 375.2,218.4 377.5,217.5 379.8,216.7 382.1,215.9 384.4,215.0 386.7,214.2 389.0,213.4 391.3,212.5 393.6,211.7 396.0,210.9 396.0,230.9 393.6,227.3 391.3,224.1 389.0,221.1 386.7,218.5 384.4,216.1 382.1,215.9 379.8,216.7 377.5,217.5 375.2,218.4 372.9,219.2 370.6,220.0 368.3,220.9 366.0,221.7 363.7,222.5 361.3,223.4 359.0,224.2 356.7,225.0 354.4,225.9 352.1,226.7 349.8,227.5 347.5,228.4 345.2,229.2 342.9,230.0 340.6,230.9 338.3,233.2" fill="#043604" stroke="#00c000" stroke-width="0.35" fill-opacity="1"/><path d="M338.3,231.7L338.3,233.2M340.6,230.9L340.6,230.9M342.9,230.0L342.9,230.0M345.2,229.2L345.2,229.2M347.5,228.4L347.5,228.4M349.8,227.5L349.8,227.5M352.1,226.7L352.1,226.7M354.4,225.9L354.4,225.9M356.7,225.0L356.7,225.0M359.0,224.2L359.0,224.2M361.3,223.4L361.3,223.4M363.7,222.5L363.7,222.5M366.0,221.7L366.0,221.7M368.3,220.9L368.3,220.9M370.6,220.0L370.6,220.0M372.9,219.2L372.9,219.2M375.2,218.4L375.2,218.4M377.5,217.5L377.5,217.5M379.8,216.7L379.8,216.7M382.1,215.9L382.1,215.9M384.4,215.0L384.4,216.1M386.7,214.2L386.7,218.5M389.0,213.4L389.0,221.1M391.3,212.5L391.3,224.1M393.6,211.7L393.6,227.3M396.0,210.9L396.0,230.9" stroke="#00e400" stroke-width="0.42" fill="none"/><polygon points="436.7,239.9 439.0,239.1 441.3,238.2 443.6,237.4 445.9,236.6 448.2,235.7 450.5,234.9 452.8,234.1 455.1,233.2 457.4,232.4 459.7,231.6 462.0,230.7 464.3,229.9 466.6,229.1 468.9,228.3 471.2,227.4 473.5,226.6 475.8,225.8 478.1,224.9 480.4,224.1 482.7,223.3 485.0,222.4 487.3,221.6 489.6,220.8 491.9,219.9 494.2,219.1 494.2,220.6 491.9,219.9 489.6,220.8 487.3,221.6 485.0,222.4 482.7,223.3 480.4,224.1 478.1,224.9 475.8,225.8 473.5,226.6 471.2,227.4 468.9,228.3 466.6,229.1 464.3,229.9 462.0,230.7 459.7,231.6 457.4,232.4 455.1,233.2 452.8,234.1 450.5,234.9 448.2,236.8 445.9,240.8 443.6,245.1 441.3,249.8 439.0,254.7 436.7,259.9" fill="#043604" stroke="#00c000" stroke-width="0.35" fill-opacity="1"/><path d="M436.7,239.9L436.7,259.9M439.0,239.1L439.0,254.7M441.3,238.2L441.3,249.8M443.6,237.4L443.6,245.1M445.9,236.6L445.9,240.8M448.2,235.7L448.2,236.8M450.5,234.9L450.5,234.9M452.8,234.1L452.8,234.1M455.1,233.2L455.1,233.2M457.4,232.4L457.4,232.4M459.7,231.6L459.7,231.6M462.0,230.7L462.0,230.7M464.3,229.9L464.3,229.9M466.6,229.1L466.6,229.1M468.9,228.3L468.9,228.3M471.2,227.4L471.2,227.4M473.5,226.6L473.5,226.6M475.8,225.8L475.8,225.8M478.1,224.9L478.1,224.9M480.4,224.1L480.4,224.1M482.7,223.3L482.7,223.3M485.0,222.4L485.0,222.4M487.3,221.6L487.3,221.6M489.6,220.8L489.6,220.8M491.9,219.9L491.9,219.9M494.2,219.1L494.2,220.6" stroke="#00e400" stroke-width="0.42" fill="none"/><polygon points="298.6,203.1 301.0,204.8 303.3,206.5 305.6,208.1 308.0,209.8 310.3,211.5 312.6,213.2 315.0,214.9 317.3,216.6 319.6,218.2 322.0,219.9 324.3,221.6 326.6,223.3 329.0,225.0 331.3,226.7 333.6,228.3 335.9,230.0 338.3,231.7 338.3,255.7 335.9,248.7 333.6,242.3 331.3,236.3 329.0,230.8 326.6,225.9 324.3,221.6 322.0,219.9 319.6,218.2 317.3,216.6 315.0,214.9 312.6,213.2 310.3,211.5 308.0,209.8 305.6,208.1 303.3,206.5 301.0,204.8 298.6,205.1" fill="#043604" stroke="#00c000" stroke-width="0.35" fill-opacity="1"/><path d="M298.6,203.1L298.6,205.1M301.0,204.8L301.0,204.8M303.3,206.5L303.3,206.5M305.6,208.1L305.6,208.1M308.0,209.8L308.0,209.8M310.3,211.5L310.3,211.5M312.6,213.2L312.6,213.2M315.0,214.9L315.0,214.9M317.3,216.6L317.3,216.6M319.6,218.2L319.6,218.2M322.0,219.9L322.0,219.9M324.3,221.6L324.3,221.6M326.6,223.3L326.6,225.9M329.0,225.0L329.0,230.8M331.3,226.7L331.3,236.3M333.6,228.3L333.6,242.3M335.9,230.0L335.9,248.7M338.3,231.7L338.3,255.7" stroke="#00e400" stroke-width="0.42" fill="none"/><polygon points="396.0,210.9 398.2,212.5 400.5,214.1 402.7,215.7 405.0,217.3 407.3,218.9 409.5,220.5 411.8,222.2 414.1,223.8 416.3,225.4 418.6,227.0 420.9,228.6 423.1,230.2 425.4,231.8 427.6,233.4 429.9,235.1 432.2,236.7 434.4,238.3 436.7,239.9 436.7,267.9 434.4,257.9 432.2,248.9 429.9,240.8 427.6,233.8 425.4,231.8 423.1,230.2 420.9,228.6 418.6,227.0 416.3,225.4 414.1,223.8 411.8,222.2 409.5,220.5 407.3,218.9 405.0,217.7 402.7,221.5 400.5,226.3 398.2,232.1 396.0,238.9" fill="#043604" stroke="#00c000" stroke-width="0.35" fill-opacity="1"/><path d="M396.0,210.9L396.0,238.9M398.2,212.5L398.2,232.1M400.5,214.1L400.5,226.3M402.7,215.7L402.7,221.5M405.0,217.3L405.0,217.7M407.3,218.9L407.3,218.9M409.5,220.5L409.5,220.5M411.8,222.2L411.8,222.2M414.1,223.8L414.1,223.8M416.3,225.4L416.3,225.4M418.6,227.0L418.6,227.0M420.9,228.6L420.9,228.6M423.1,230.2L423.1,230.2M425.4,231.8L425.4,231.8M427.6,233.4L427.6,233.8M429.9,235.1L429.9,240.8M432.2,236.7L432.2,248.9M434.4,238.3L434.4,257.9M436.7,239.9L436.7,267.9" stroke="#00e400" stroke-width="0.42" fill="none"/><polygon points="494.2,219.1 496.5,220.7 498.9,222.4 501.2,224.0 503.5,225.6 505.8,227.3 508.2,228.9 510.5,230.6 512.8,232.2 515.1,233.8 517.5,235.5 519.8,237.1 522.1,238.7 524.4,240.4 526.8,242.0 529.1,243.6 531.4,245.3 533.7,246.9 536.1,248.5 536.1,250.5 533.7,246.9 531.4,245.3 529.1,243.6 526.8,242.0 524.4,240.4 522.1,238.7 519.8,237.1 517.5,235.5 515.1,233.8 512.8,232.2 510.5,230.6 508.2,229.6 505.8,230.7 503.5,232.3 501.2,234.3 498.9,236.8 496.5,239.7 494.2,243.1" fill="#043604" stroke="#00c000" stroke-width="0.35" fill-opacity="1"/><path d="M494.2,219.1L494.2,243.1M496.5,220.7L496.5,239.7M498.9,222.4L498.9,236.8M501.2,224.0L501.2,234.3M503.5,225.6L503.5,232.3M505.8,227.3L505.8,230.7M508.2,228.9L508.2,229.6M510.5,230.6L510.5,230.6M512.8,232.2L512.8,232.2M515.1,233.8L515.1,233.8M517.5,235.5L517.5,235.5M519.8,237.1L519.8,237.1M522.1,238.7L522.1,238.7M524.4,240.4L524.4,240.4M526.8,242.0L526.8,242.0M529.1,243.6L529.1,243.6M531.4,245.3L531.4,245.3M533.7,246.9L533.7,246.9M536.1,248.5L536.1,250.5" stroke="#00e400" stroke-width="0.42" fill="none"/><polygon points="378.7,260.9 381.0,260.0 383.3,259.2 385.6,258.3 387.9,257.5 390.3,256.7 392.6,255.8 394.9,255.0 397.2,254.1 399.5,253.3 401.9,252.5 404.2,251.6 406.5,250.8 408.8,250.0 411.2,249.1 413.5,248.3 415.8,247.4 418.1,246.6 420.4,245.8 422.8,244.9 425.1,244.1 427.4,243.2 429.7,242.4 432.0,241.6 434.4,240.7 436.7,239.9 436.7,259.9 434.4,256.3 432.0,253.1 429.7,250.2 427.4,247.5 425.1,245.2 422.8,244.9 420.4,245.8 418.1,246.6 415.8,247.4 413.5,248.3 411.2,249.1 408.8,250.0 406.5,250.8 404.2,251.6 401.9,252.5 399.5,253.3 397.2,254.1 394.9,255.0 392.6,255.8 390.3,256.7 387.9,257.5 385.6,258.3 383.3,259.2 381.0,260.0 378.7,262.4" fill="#043604" stroke="#00c000" stroke-width="0.35" fill-opacity="1"/><path d="M378.7,260.9L378.7,262.4M381.0,260.0L381.0,260.0M383.3,259.2L383.3,259.2M385.6,258.3L385.6,258.3M387.9,257.5L387.9,257.5M390.3,256.7L390.3,256.7M392.6,255.8L392.6,255.8M394.9,255.0L394.9,255.0M397.2,254.1L397.2,254.1M399.5,253.3L399.5,253.3M401.9,252.5L401.9,252.5M404.2,251.6L404.2,251.6M406.5,250.8L406.5,250.8M408.8,250.0L408.8,250.0M411.2,249.1L411.2,249.1M413.5,248.3L413.5,248.3M415.8,247.4L415.8,247.4M418.1,246.6L418.1,246.6M420.4,245.8L420.4,245.8M422.8,244.9L422.8,244.9M425.1,244.1L425.1,245.2M427.4,243.2L427.4,247.5M429.7,242.4L429.7,250.2M432.0,241.6L432.0,253.1M434.4,240.7L434.4,256.3M436.7,239.9L436.7,259.9" stroke="#00e400" stroke-width="0.42" fill="none"/><polygon points="478.2,269.5 480.5,268.6 482.8,267.8 485.1,267.0 487.5,266.1 489.8,265.3 492.1,264.4 494.4,263.6 496.7,262.8 499.0,261.9 501.4,261.1 503.7,260.3 506.0,259.4 508.3,258.6 510.6,257.7 512.9,256.9 515.2,256.1 517.6,255.2 519.9,254.4 522.2,253.6 524.5,252.7 526.8,251.9 529.1,251.1 531.4,250.2 533.8,249.4 536.1,248.5 536.1,250.0 533.8,249.4 531.4,250.2 529.1,251.1 526.8,251.9 524.5,252.7 522.2,253.6 519.9,254.4 517.6,255.2 515.2,256.1 512.9,256.9 510.6,257.7 508.3,258.6 506.0,259.4 503.7,260.3 501.4,261.1 499.0,261.9 496.7,262.8 494.4,263.6 492.1,264.4 489.8,265.3 487.5,267.7 485.1,272.6 482.8,277.8 480.5,283.5 478.2,289.5" fill="#043604" stroke="#00c000" stroke-width="0.35" fill-opacity="1"/><path d="M478.2,269.5L478.2,289.5M480.5,268.6L480.5,283.5M482.8,267.8L482.8,277.8M485.1,267.0L485.1,272.6M487.5,266.1L487.5,267.7M489.8,265.3L489.8,265.3M492.1,264.4L492.1,264.4M494.4,263.6L494.4,263.6M496.7,262.8L496.7,262.8M499.0,261.9L499.0,261.9M501.4,261.1L501.4,261.1M503.7,260.3L503.7,260.3M506.0,259.4L506.0,259.4M508.3,258.6L508.3,258.6M510.6,257.7L510.6,257.7M512.9,256.9L512.9,256.9M515.2,256.1L515.2,256.1M517.6,255.2L517.6,255.2M519.9,254.4L519.9,254.4M522.2,253.6L522.2,253.6M524.5,252.7L524.5,252.7M526.8,251.9L526.8,251.9M529.1,251.1L529.1,251.1M531.4,250.2L531.4,250.2M533.8,249.4L533.8,249.4M536.1,248.5L536.1,250.0" stroke="#00e400" stroke-width="0.42" fill="none"/><polygon points="338.3,231.7 340.5,233.3 342.8,234.9 345.0,236.6 347.2,238.2 349.5,239.8 351.7,241.4 354.0,243.0 356.2,244.7 358.5,246.3 360.7,247.9 362.9,249.5 365.2,251.1 367.4,252.8 369.7,254.4 371.9,256.0 374.2,257.6 376.4,259.2 378.7,260.9 378.7,284.9 376.4,277.1 374.2,270.2 371.9,263.9 369.7,258.3 367.4,253.5 365.2,251.1 362.9,249.5 360.7,247.9 358.5,246.3 356.2,244.7 354.0,243.0 351.7,241.4 349.5,240.5 347.2,242.1 345.0,244.5 342.8,247.5 340.5,251.2 338.3,255.7" fill="#043604" stroke="#00c000" stroke-width="0.35" fill-opacity="1"/><path d="M338.3,231.7L338.3,255.7M340.5,233.3L340.5,251.2M342.8,234.9L342.8,247.5M345.0,236.6L345.0,244.5M347.2,238.2L347.2,242.1M349.5,239.8L349.5,240.5M351.7,241.4L351.7,241.4M354.0,243.0L354.0,243.0M356.2,244.7L356.2,244.7M358.5,246.3L358.5,246.3M360.7,247.9L360.7,247.9M362.9,249.5L362.9,249.5M365.2,251.1L365.2,251.1M367.4,252.8L367.4,253.5M369.7,254.4L369.7,258.3M371.9,256.0L371.9,263.9M374.2,257.6L374.2,270.2M376.4,259.2L376.4,277.1M378.7,260.9L378.7,284.9" stroke="#00e400" stroke-width="0.42" fill="none"/><polygon points="436.7,239.9 439.0,241.5 441.3,243.2 443.6,244.8 445.9,246.5 448.2,248.1 450.5,249.8 452.8,251.4 455.1,253.0 457.4,254.7 459.8,256.3 462.1,258.0 464.4,259.6 466.7,261.2 469.0,262.9 471.3,264.5 473.6,266.2 475.9,267.8 478.2,269.5 478.2,271.5 475.9,267.8 473.6,266.2 471.3,264.5 469.0,262.9 466.7,261.2 464.4,259.6 462.1,258.0 459.8,256.3 457.4,254.7 455.1,253.0 452.8,251.4 450.5,249.8 448.2,248.1 445.9,250.0 443.6,253.5 441.3,257.6 439.0,262.4 436.7,267.9" fill="#043604" stroke="#00c000" stroke-width="0.35" fill-opacity="1"/><path d="M436.7,239.9L436.7,267.9M439.0,241.5L439.0,262.4M441.3,243.2L441.3,257.6M443.6,244.8L443.6,253.5M445.9,246.5L445.9,250.0M448.2,248.1L448.2,248.1M450.5,249.8L450.5,249.8M452.8,251.4L452.8,251.4M455.1,253.0L455.1,253.0M457.4,254.7L457.4,254.7M459.8,256.3L459.8,256.3M462.1,258.0L462.1,258.0M464.4,259.6L464.4,259.6M466.7,261.2L466.7,261.2M469.0,262.9L469.0,262.9M471.3,264.5L471.3,264.5M473.6,266.2L473.6,266.2M475.9,267.8L475.9,267.8M478.2,269.5L478.2,271.5" stroke="#00e400" stroke-width="0.42" fill="none"/><polygon points="419.8,290.6 422.1,289.7 424.5,288.9 426.8,288.0 429.1,287.2 431.5,286.3 433.8,285.5 436.2,284.7 438.5,283.8 440.8,283.0 443.2,282.1 445.5,281.3 447.8,280.4 450.2,279.6 452.5,278.7 454.8,277.9 457.2,277.1 459.5,276.2 461.8,275.4 464.2,274.5 466.5,273.7 468.9,272.8 471.2,272.0 473.5,271.1 475.9,270.3 478.2,269.5 478.2,289.5 475.9,285.1 473.5,281.2 471.2,277.6 468.9,274.4 466.5,273.7 464.2,274.5 461.8,275.4 459.5,276.2 457.2,277.1 454.8,277.9 452.5,278.7 450.2,279.6 447.8,280.4 445.5,281.3 443.2,282.1 440.8,283.0 438.5,283.8 436.2,284.7 433.8,285.5 431.5,286.3 429.1,287.2 426.8,288.0 424.5,288.9 422.1,289.7 419.8,292.1" fill="#043604" stroke="#00c000" stroke-width="0.35" fill-opacity="1"/><path d="M419.8,290.6L419.8,292.1M422.1,289.7L422.1,289.7M424.5,288.9L424.5,288.9M426.8,288.0L426.8,288.0M429.1,287.2L429.1,287.2M431.5,286.3L431.5,286.3M433.8,285.5L433.8,285.5M436.2,284.7L436.2,284.7M438.5,283.8L438.5,283.8M440.8,283.0L440.8,283.0M443.2,282.1L443.2,282.1M445.5,281.3L445.5,281.3M447.8,280.4L447.8,280.4M450.2,279.6L450.2,279.6M452.5,278.7L452.5,278.7M454.8,277.9L454.8,277.9M457.2,277.1L457.2,277.1M459.5,276.2L459.5,276.2M461.8,275.4L461.8,275.4M464.2,274.5L464.2,274.5M466.5,273.7L466.5,273.7M468.9,272.8L468.9,274.4M471.2,272.0L471.2,277.6M473.5,271.1L473.5,281.2M475.9,270.3L475.9,285.1M478.2,269.5L478.2,289.5" stroke="#00e400" stroke-width="0.42" fill="none"/><polygon points="378.7,260.9 380.9,262.5 383.2,264.2 385.5,265.8 387.8,267.5 390.1,269.1 392.4,270.8 394.7,272.4 396.9,274.1 399.2,275.7 401.5,277.4 403.8,279.0 406.1,280.7 408.4,282.3 410.7,284.0 412.9,285.6 415.2,287.3 417.5,288.9 419.8,290.6 419.8,292.6 417.5,288.9 415.2,287.3 412.9,285.6 410.7,284.0 408.4,282.3 406.1,280.7 403.8,279.0 401.5,277.4 399.2,275.7 396.9,274.1 394.7,272.4 392.4,271.4 390.1,272.5 387.8,274.1 385.5,276.1 383.2,278.6 380.9,281.5 378.7,284.9" fill="#043604" stroke="#00c000" stroke-width="0.35" fill-opacity="1"/><path d="M378.7,260.9L378.7,284.9M380.9,262.5L380.9,281.5M383.2,264.2L383.2,278.6M385.5,265.8L385.5,276.1M387.8,267.5L387.8,274.1M390.1,269.1L390.1,272.5M392.4,270.8L392.4,271.4M394.7,272.4L394.7,272.4M396.9,274.1L396.9,274.1M399.2,275.7L399.2,275.7M401.5,277.4L401.5,277.4M403.8,279.0L403.8,279.0M406.1,280.7L406.1,280.7M408.4,282.3L408.4,282.3M410.7,284.0L410.7,284.0M412.9,285.6L412.9,285.6M415.2,287.3L415.2,287.3M417.5,288.9L417.5,288.9M419.8,290.6L419.8,292.6" stroke="#00e400" stroke-width="0.42" fill="none"/><polygon points="356.0,182.4 358.2,181.5 360.5,180.7 362.8,179.9 365.1,179.1 367.3,178.3 369.6,177.4 371.9,176.6 374.2,175.8 376.4,175.0 378.7,174.2 381.0,173.3 383.2,172.5 385.5,171.7 387.8,170.9 390.1,170.0 392.3,169.2 394.6,168.4 396.9,167.6 399.2,166.8 401.4,165.9 403.7,165.1 406.0,164.3 408.2,163.5 410.5,162.6 412.8,161.8 412.8,161.8 410.5,160.5 408.2,158.0 406.0,155.9 403.7,154.1 401.4,152.7 399.2,151.7 396.9,151.1 394.6,150.8 392.3,150.9 390.1,151.3 387.8,152.2 385.5,153.4 383.2,154.9 381.0,156.9 378.7,159.2 376.4,161.8 374.2,164.9 371.9,168.3 369.6,172.0 367.3,176.2 365.1,179.1 362.8,179.9 360.5,180.7 358.2,181.5 356.0,182.4" fill="#043604" stroke="#00c000" stroke-width="0.35" fill-opacity="1"/><path d="M356.0,182.4L356.0,182.4M358.2,181.5L358.2,181.5M360.5,180.7L360.5,180.7M362.8,179.9L362.8,179.9M365.1,179.1L365.1,179.1M367.3,178.3L367.3,176.2M369.6,177.4L369.6,172.0M371.9,176.6L371.9,168.3M374.2,175.8L374.2,164.9M376.4,175.0L376.4,161.8M378.7,174.2L378.7,159.2M381.0,173.3L381.0,156.9M383.2,172.5L383.2,154.9M385.5,171.7L385.5,153.4M387.8,170.9L387.8,152.2M390.1,170.0L390.1,151.3M392.3,169.2L392.3,150.9M394.6,168.4L394.6,150.8M396.9,167.6L396.9,151.1M399.2,166.8L399.2,151.7M401.4,165.9L401.4,152.7M403.7,165.1L403.7,154.1M406.0,164.3L406.0,155.9M408.2,163.5L408.2,158.0M410.5,162.6L410.5,160.5M412.8,161.8L412.8,161.8" stroke="#00e400" stroke-width="0.42" fill="none"/><polygon points="412.8,161.8 415.0,163.4 417.3,165.0 419.5,166.6 421.8,168.1 424.0,169.7 426.2,171.3 428.5,172.9 430.7,174.4 433.0,176.0 435.2,177.6 437.4,179.2 439.7,180.7 441.9,182.3 444.2,183.9 446.4,185.5 448.6,187.1 450.9,188.6 453.1,190.2 453.1,190.2 450.9,188.6 448.6,187.1 446.4,185.5 444.2,183.9 441.9,182.3 439.7,180.7 437.4,177.5 435.2,174.0 433.0,171.0 430.7,168.4 428.5,166.3 426.2,164.6 424.0,163.4 421.8,162.6 419.5,162.2 417.3,162.3 415.0,162.8 412.8,161.8" fill="#043604" stroke="#00c000" stroke-width="0.35" fill-opacity="1"/><path d="M412.8,161.8L412.8,161.8M415.0,163.4L415.0,162.8M417.3,165.0L417.3,162.3M419.5,166.6L419.5,162.2M421.8,168.1L421.8,162.6M424.0,169.7L424.0,163.4M426.2,171.3L426.2,164.6M428.5,172.9L428.5,166.3M430.7,174.4L430.7,168.4M433.0,176.0L433.0,171.0M435.2,177.6L435.2,174.0M437.4,179.2L437.4,177.5M439.7,180.7L439.7,180.7M441.9,182.3L441.9,182.3M444.2,183.9L444.2,183.9M446.4,185.5L446.4,185.5M448.6,187.1L448.6,187.1M450.9,188.6L450.9,188.6M453.1,190.2L453.1,190.2" stroke="#00e400" stroke-width="0.42" fill="none"/><polygon points="298.6,203.1 300.9,202.3 303.2,201.4 305.5,200.6 307.8,199.8 310.1,198.9 312.4,198.1 314.7,197.3 317.0,196.5 319.3,195.6 321.6,194.8 323.9,194.0 326.2,193.1 328.5,192.3 330.7,191.5 333.0,190.7 335.3,189.8 337.6,189.0 339.9,188.2 342.2,187.3 344.5,186.5 346.8,185.7 349.1,184.9 351.4,184.0 353.7,183.2 356.0,182.4 356.0,182.4 353.7,183.2 351.4,184.0 349.1,184.9 346.8,185.7 344.5,184.4 342.2,181.9 339.9,179.8 337.6,178.1 335.3,176.7 333.0,175.7 330.7,175.0 328.5,174.7 326.2,174.8 323.9,175.3 321.6,176.1 319.3,177.3 317.0,178.9 314.7,180.8 312.4,183.1 310.1,185.7 307.8,188.8 305.5,192.2 303.2,195.9 300.9,200.1 298.6,203.1" fill="#043604" stroke="#00c000" stroke-width="0.35" fill-opacity="1"/><path d="M298.6,203.1L298.6,203.1M300.9,202.3L300.9,200.1M303.2,201.4L303.2,195.9M305.5,200.6L305.5,192.2M307.8,199.8L307.8,188.8M310.1,198.9L310.1,185.7M312.4,198.1L312.4,183.1M314.7,197.3L314.7,180.8M317.0,196.5L317.0,178.9M319.3,195.6L319.3,177.3M321.6,194.8L321.6,176.1M323.9,194.0L323.9,175.3M326.2,193.1L326.2,174.8M328.5,192.3L328.5,174.7M330.7,191.5L330.7,175.0M333.0,190.7L333.0,175.7M335.3,189.8L335.3,176.7M337.6,189.0L337.6,178.1M339.9,188.2L339.9,179.8M342.2,187.3L342.2,181.9M344.5,186.5L344.5,184.4M346.8,185.7L346.8,185.7M349.1,184.9L349.1,184.9M351.4,184.0L351.4,184.0M353.7,183.2L353.7,183.2M356.0,182.4L356.0,182.4" stroke="#00e400" stroke-width="0.42" fill="none"/><polygon points="396.0,210.9 398.2,210.0 400.5,209.2 402.8,208.4 405.1,207.6 407.4,206.7 409.7,205.9 412.0,205.1 414.3,204.3 416.5,203.4 418.8,202.6 421.1,201.8 423.4,200.9 425.7,200.1 428.0,199.3 430.3,198.5 432.5,197.6 434.8,196.8 437.1,196.0 439.4,195.2 441.7,194.3 444.0,193.5 446.3,192.7 448.6,191.9 450.8,191.0 453.1,190.2 453.1,190.2 450.8,189.6 448.6,187.8 446.3,186.4 444.0,185.2 441.7,184.3 439.4,183.8 437.1,183.5 434.8,183.6 432.5,183.9 430.3,184.6 428.0,185.5 425.7,186.8 423.4,188.4 421.1,190.2 418.8,192.4 416.5,194.9 414.3,197.7 412.0,200.8 409.7,204.1 407.4,206.7 405.1,207.6 402.8,208.4 400.5,209.2 398.2,210.0 396.0,210.9" fill="#043604" stroke="#00c000" stroke-width="0.35" fill-opacity="1"/><path d="M396.0,210.9L396.0,210.9M398.2,210.0L398.2,210.0M400.5,209.2L400.5,209.2M402.8,208.4L402.8,208.4M405.1,207.6L405.1,207.6M407.4,206.7L407.4,206.7M409.7,205.9L409.7,204.1M412.0,205.1L412.0,200.8M414.3,204.3L414.3,197.7M416.5,203.4L416.5,194.9M418.8,202.6L418.8,192.4M421.1,201.8L421.1,190.2M423.4,200.9L423.4,188.4M425.7,200.1L425.7,186.8M428.0,199.3L428.0,185.5M430.3,198.5L430.3,184.6M432.5,197.6L432.5,183.9M434.8,196.8L434.8,183.6M437.1,196.0L437.1,183.5M439.4,195.2L439.4,183.8M441.7,194.3L441.7,184.3M444.0,193.5L444.0,185.2M446.3,192.7L446.3,186.4M448.6,191.9L448.6,187.8M450.8,191.0L450.8,189.6M453.1,190.2L453.1,190.2" stroke="#00e400" stroke-width="0.42" fill="none"/><polygon points="356.0,182.4 358.3,184.0 360.7,185.7 363.0,187.4 365.4,189.1 367.7,190.8 370.1,192.4 372.4,194.1 374.8,195.8 377.1,197.5 379.5,199.1 381.8,200.8 384.2,202.5 386.5,204.2 388.9,205.8 391.3,207.5 393.6,209.2 396.0,210.9 396.0,210.9 393.6,209.2 391.3,207.5 388.9,205.8 386.5,204.2 384.2,200.4 381.8,195.0 379.5,190.3 377.1,186.3 374.8,183.1 372.4,180.7 370.1,178.9 367.7,178.0 365.4,177.8 363.0,178.3 360.7,179.6 358.3,181.6 356.0,182.4" fill="#043604" stroke="#00c000" stroke-width="0.35" fill-opacity="1"/><path d="M356.0,182.4L356.0,182.4M358.3,184.0L358.3,181.6M360.7,185.7L360.7,179.6M363.0,187.4L363.0,178.3M365.4,189.1L365.4,177.8M367.7,190.8L367.7,178.0M370.1,192.4L370.1,178.9M372.4,194.1L372.4,180.7M374.8,195.8L374.8,183.1M377.1,197.5L377.1,186.3M379.5,199.1L379.5,190.3M381.8,200.8L381.8,195.0M384.2,202.5L384.2,200.4M386.5,204.2L386.5,204.2M388.9,205.8L388.9,205.8M391.3,207.5L391.3,207.5M393.6,209.2L393.6,209.2M396.0,210.9L396.0,210.9" stroke="#00e400" stroke-width="0.42" fill="none"/><polygon points="453.1,190.2 455.4,191.8 457.7,193.4 460.0,195.0 462.3,196.6 464.5,198.2 466.8,199.8 469.1,201.4 471.4,203.0 473.7,204.7 475.9,206.3 478.2,207.9 480.5,209.5 482.8,211.1 485.1,212.7 487.4,214.3 489.6,215.9 491.9,217.5 494.2,219.1 494.2,219.1 491.9,217.5 489.6,215.9 487.4,214.3 485.1,212.7 482.8,211.1 480.5,207.7 478.2,204.3 475.9,201.6 473.7,199.7 471.4,198.4 469.1,197.9 466.8,198.1 464.5,198.2 462.3,196.6 460.0,195.0 457.7,193.4 455.4,191.8 453.1,190.2" fill="#043604" stroke="#00c000" stroke-width="0.35" fill-opacity="1"/><path d="M453.1,190.2L453.1,190.2M455.4,191.8L455.4,191.8M457.7,193.4L457.7,193.4M460.0,195.0L460.0,195.0M462.3,196.6L462.3,196.6M464.5,198.2L464.5,198.2M466.8,199.8L466.8,198.1M469.1,201.4L469.1,197.9M471.4,203.0L471.4,198.4M473.7,204.7L473.7,199.7M475.9,206.3L475.9,201.6M478.2,207.9L478.2,204.3M480.5,209.5L480.5,207.7M482.8,211.1L482.8,211.1M485.1,212.7L485.1,212.7M487.4,214.3L487.4,214.3M489.6,215.9L489.6,215.9M491.9,217.5L491.9,217.5M494.2,219.1L494.2,219.1" stroke="#00e400" stroke-width="0.42" fill="none"/><polygon points="338.3,231.7 340.6,230.9 342.9,230.0 345.2,229.2 347.5,228.4 349.8,227.5 352.1,226.7 354.4,225.9 356.7,225.0 359.0,224.2 361.3,223.4 363.7,222.5 366.0,221.7 368.3,220.9 370.6,220.0 372.9,219.2 375.2,218.4 377.5,217.5 379.8,216.7 382.1,215.9 384.4,215.0 386.7,214.2 389.0,213.4 391.3,212.5 393.6,211.7 396.0,210.9 396.0,210.9 393.6,211.7 391.3,212.5 389.0,213.4 386.7,214.2 384.4,215.0 382.1,214.1 379.8,212.4 377.5,210.9 375.2,209.8 372.9,209.0 370.6,208.5 368.3,208.3 366.0,208.4 363.7,208.8 361.3,209.5 359.0,210.5 356.7,211.8 354.4,213.4 352.1,215.3 349.8,217.5 347.5,220.1 345.2,222.9 342.9,226.0 340.6,229.5 338.3,231.7" fill="#043604" stroke="#00c000" stroke-width="0.35" fill-opacity="1"/><path d="M338.3,231.7L338.3,231.7M340.6,230.9L340.6,229.5M342.9,230.0L342.9,226.0M345.2,229.2L345.2,222.9M347.5,228.4L347.5,220.1M349.8,227.5L349.8,217.5M352.1,226.7L352.1,215.3M354.4,225.9L354.4,213.4M356.7,225.0L356.7,211.8M359.0,224.2L359.0,210.5M361.3,223.4L361.3,209.5M363.7,222.5L363.7,208.8M366.0,221.7L366.0,208.4M368.3,220.9L368.3,208.3M370.6,220.0L370.6,208.5M372.9,219.2L372.9,209.0M375.2,218.4L375.2,209.8M377.5,217.5L377.5,210.9M379.8,216.7L379.8,212.4M382.1,215.9L382.1,214.1M384.4,215.0L384.4,215.0M386.7,214.2L386.7,214.2M389.0,213.4L389.0,213.4M391.3,212.5L391.3,212.5M393.6,211.7L393.6,211.7M396.0,210.9L396.0,210.9" stroke="#00e400" stroke-width="0.42" fill="none"/><polygon points="436.7,239.9 439.0,239.1 441.3,238.2 443.6,237.4 445.9,236.6 448.2,235.7 450.5,234.9 452.8,234.1 455.1,233.2 457.4,232.4 459.7,231.6 462.0,230.7 464.3,229.9 466.6,229.1 468.9,228.3 471.2,227.4 473.5,226.6 475.8,225.8 478.1,224.9 480.4,224.1 482.7,223.3 485.0,222.4 487.3,221.6 489.6,220.8 491.9,219.9 494.2,219.1 494.2,219.1 491.9,218.5 489.6,216.8 487.3,215.3 485.0,214.1 482.7,213.3 480.4,212.7 478.1,212.5 475.8,212.5 473.5,212.9 471.2,213.5 468.9,214.5 466.6,215.8 464.3,217.3 462.0,219.2 459.7,221.4 457.4,223.9 455.1,226.7 452.8,229.7 450.5,233.1 448.2,235.7 445.9,236.6 443.6,237.4 441.3,238.2 439.0,239.1 436.7,239.9" fill="#043604" stroke="#00c000" stroke-width="0.35" fill-opacity="1"/><path d="M436.7,239.9L436.7,239.9M439.0,239.1L439.0,239.1M441.3,238.2L441.3,238.2M443.6,237.4L443.6,237.4M445.9,236.6L445.9,236.6M448.2,235.7L448.2,235.7M450.5,234.9L450.5,233.1M452.8,234.1L452.8,229.7M455.1,233.2L455.1,226.7M457.4,232.4L457.4,223.9M459.7,231.6L459.7,221.4M462.0,230.7L462.0,219.2M464.3,229.9L464.3,217.3M466.6,229.1L466.6,215.8M468.9,228.3L468.9,214.5M471.2,227.4L471.2,213.5M473.5,226.6L473.5,212.9M475.8,225.8L475.8,212.5M478.1,224.9L478.1,212.5M480.4,224.1L480.4,212.7M482.7,223.3L482.7,213.3M485.0,222.4L485.0,214.1M487.3,221.6L487.3,215.3M489.6,220.8L489.6,216.8M491.9,219.9L491.9,218.5M494.2,219.1L494.2,219.1" stroke="#00e400" stroke-width="0.42" fill="none"/><polygon points="298.6,203.1 301.0,204.8 303.3,206.5 305.6,208.1 308.0,209.8 310.3,211.5 312.6,213.2 315.0,214.9 317.3,216.6 319.6,218.2 322.0,219.9 324.3,221.6 326.6,223.3 329.0,225.0 331.3,226.7 333.6,228.3 335.9,230.0 338.3,231.7 338.3,231.7 335.9,230.0 333.6,228.3 331.3,226.7 329.0,225.0 326.6,223.3 324.3,221.4 322.0,217.4 319.6,213.9 317.3,211.0 315.0,208.5 312.6,206.5 310.3,205.0 308.0,204.0 305.6,203.6 303.3,203.6 301.0,204.1 298.6,203.1" fill="#043604" stroke="#00c000" stroke-width="0.35" fill-opacity="1"/><path d="M298.6,203.1L298.6,203.1M301.0,204.8L301.0,204.1M303.3,206.5L303.3,203.6M305.6,208.1L305.6,203.6M308.0,209.8L308.0,204.0M310.3,211.5L310.3,205.0M312.6,213.2L312.6,206.5M315.0,214.9L315.0,208.5M317.3,216.6L317.3,211.0M319.6,218.2L319.6,213.9M322.0,219.9L322.0,217.4M324.3,221.6L324.3,221.4M326.6,223.3L326.6,223.3M329.0,225.0L329.0,225.0M331.3,226.7L331.3,226.7M333.6,228.3L333.6,228.3M335.9,230.0L335.9,230.0M338.3,231.7L338.3,231.7" stroke="#00e400" stroke-width="0.42" fill="none"/><polygon points="396.0,210.9 398.2,212.5 400.5,214.1 402.7,215.7 405.0,217.3 407.3,218.9 409.5,220.5 411.8,222.2 414.1,223.8 416.3,225.4 418.6,227.0 420.9,228.6 423.1,230.2 425.4,231.8 427.6,233.4 429.9,235.1 432.2,236.7 434.4,238.3 436.7,239.9 436.7,239.9 434.4,238.3 432.2,236.7 429.9,235.1 427.6,233.4 425.4,227.7 423.1,222.7 420.9,218.6 418.6,215.5 416.3,213.4 414.1,212.3 411.8,212.1 409.5,213.0 407.3,214.8 405.0,217.3 402.7,215.7 400.5,214.1 398.2,212.5 396.0,210.9" fill="#043604" stroke="#00c000" stroke-width="0.35" fill-opacity="1"/><path d="M396.0,210.9L396.0,210.9M398.2,212.5L398.2,212.5M400.5,214.1L400.5,214.1M402.7,215.7L402.7,215.7M405.0,217.3L405.0,217.3M407.3,218.9L407.3,214.8M409.5,220.5L409.5,213.0M411.8,222.2L411.8,212.1M414.1,223.8L414.1,212.3M416.3,225.4L416.3,213.4M418.6,227.0L418.6,215.5M420.9,228.6L420.9,218.6M423.1,230.2L423.1,222.7M425.4,231.8L425.4,227.7M427.6,233.4L427.6,233.4M429.9,235.1L429.9,235.1M432.2,236.7L432.2,236.7M434.4,238.3L434.4,238.3M436.7,239.9L436.7,239.9" stroke="#00e400" stroke-width="0.42" fill="none"/><polygon points="494.2,219.1 496.5,220.7 498.9,222.4 501.2,224.0 503.5,225.6 505.8,227.3 508.2,228.9 510.5,230.6 512.8,232.2 515.1,233.8 517.5,235.5 519.8,237.1 522.1,238.7 524.4,240.4 526.8,242.0 529.1,243.6 531.4,245.3 533.7,246.9 536.1,248.5 536.1,248.5 533.7,246.4 531.4,242.6 529.1,239.3 526.8,236.4 524.4,234.0 522.1,232.1 519.8,230.5 517.5,229.5 515.1,228.8 512.8,228.6 510.5,228.9 508.2,228.9 505.8,227.3 503.5,225.6 501.2,224.0 498.9,222.4 496.5,220.7 494.2,219.1" fill="#043604" stroke="#00c000" stroke-width="0.35" fill-opacity="1"/><path d="M494.2,219.1L494.2,219.1M496.5,220.7L496.5,220.7M498.9,222.4L498.9,222.4M501.2,224.0L501.2,224.0M503.5,225.6L503.5,225.6M505.8,227.3L505.8,227.3M508.2,228.9L508.2,228.9M510.5,230.6L510.5,228.9M512.8,232.2L512.8,228.6M515.1,233.8L515.1,228.8M517.5,235.5L517.5,229.5M519.8,237.1L519.8,230.5M522.1,238.7L522.1,232.1M524.4,240.4L524.4,234.0M526.8,242.0L526.8,236.4M529.1,243.6L529.1,239.3M531.4,245.3L531.4,242.6M533.7,246.9L533.7,246.4M536.1,248.5L536.1,248.5" stroke="#00e400" stroke-width="0.42" fill="none"/><polygon points="378.7,260.9 381.0,260.0 383.3,259.2 385.6,258.3 387.9,257.5 390.3,256.7 392.6,255.8 394.9,255.0 397.2,254.1 399.5,253.3 401.9,252.5 404.2,251.6 406.5,250.8 408.8,250.0 411.2,249.1 413.5,248.3 415.8,247.4 418.1,246.6 420.4,245.8 422.8,244.9 425.1,244.1 427.4,243.2 429.7,242.4 432.0,241.6 434.4,240.7 436.7,239.9 436.7,239.9 434.4,240.7 432.0,241.6 429.7,242.4 427.4,243.2 425.1,244.1 422.8,243.2 420.4,241.4 418.1,240.0 415.8,238.9 413.5,238.1 411.2,237.6 408.8,237.4 406.5,237.5 404.2,237.9 401.9,238.6 399.5,239.6 397.2,240.9 394.9,242.5 392.6,244.4 390.3,246.7 387.9,249.2 385.6,252.0 383.3,255.2 381.0,258.6 378.7,260.9" fill="#043604" stroke="#00c000" stroke-width="0.35" fill-opacity="1"/><path d="M378.7,260.9L378.7,260.9M381.0,260.0L381.0,258.6M383.3,259.2L383.3,255.2M385.6,258.3L385.6,252.0M387.9,257.5L387.9,249.2M390.3,256.7L390.3,246.7M392.6,255.8L392.6,244.4M394.9,255.0L394.9,242.5M397.2,254.1L397.2,240.9M399.5,253.3L399.5,239.6M401.9,252.5L401.9,238.6M404.2,251.6L404.2,237.9M406.5,250.8L406.5,237.5M408.8,250.0L408.8,237.4M411.2,249.1L411.2,237.6M413.5,248.3L413.5,238.1M415.8,247.4L415.8,238.9M418.1,246.6L418.1,240.0M420.4,245.8L420.4,241.4M422.8,244.9L422.8,243.2M425.1,244.1L425.1,244.1M427.4,243.2L427.4,243.2M429.7,242.4L429.7,242.4M432.0,241.6L432.0,241.6M434.4,240.7L434.4,240.7M436.7,239.9L436.7,239.9" stroke="#00e400" stroke-width="0.42" fill="none"/><polygon points="478.2,269.5 480.5,268.6 482.8,267.8 485.1,267.0 487.5,266.1 489.8,265.3 492.1,264.4 494.4,263.6 496.7,262.8 499.0,261.9 501.4,261.1 503.7,260.3 506.0,259.4 508.3,258.6 510.6,257.7 512.9,256.9 515.2,256.1 517.6,255.2 519.9,254.4 522.2,253.6 524.5,252.7 526.8,251.9 529.1,251.1 531.4,250.2 533.8,249.4 536.1,248.5 536.1,248.5 533.8,247.2 531.4,244.7 529.1,242.6 526.8,240.9 524.5,239.5 522.2,238.5 519.9,237.9 517.6,237.6 515.2,237.7 512.9,238.2 510.6,239.1 508.3,240.3 506.0,241.8 503.7,243.8 501.4,246.1 499.0,248.8 496.7,251.8 494.4,255.2 492.1,259.0 489.8,263.2 487.5,266.1 485.1,267.0 482.8,267.8 480.5,268.6 478.2,269.5" fill="#043604" stroke="#00c000" stroke-width="0.35" fill-opacity="1"/><path d="M478.2,269.5L478.2,269.5M480.5,268.6L480.5,268.6M482.8,267.8L482.8,267.8M485.1,267.0L485.1,267.0M487.5,266.1L487.5,266.1M489.8,265.3L489.8,263.2M492.1,264.4L492.1,259.0M494.4,263.6L494.4,255.2M496.7,262.8L496.7,251.8M499.0,261.9L499.0,248.8M501.4,261.1L501.4,246.1M503.7,260.3L503.7,243.8M506.0,259.4L506.0,241.8M508.3,258.6L508.3,240.3M510.6,257.7L510.6,239.1M512.9,256.9L512.9,238.2M515.2,256.1L515.2,237.7M517.6,255.2L517.6,237.6M519.9,254.4L519.9,237.9M522.2,253.6L522.2,238.5M524.5,252.7L524.5,239.5M526.8,251.9L526.8,240.9M529.1,251.1L529.1,242.6M531.4,250.2L531.4,244.7M533.8,249.4L533.8,247.2M536.1,248.5L536.1,248.5" stroke="#00e400" stroke-width="0.42" fill="none"/><polygon points="338.3,231.7 340.5,233.3 342.8,234.9 345.0,236.6 347.2,238.2 349.5,239.8 351.7,241.4 354.0,243.0 356.2,244.7 358.5,246.3 360.7,247.9 362.9,249.5 365.2,251.1 367.4,252.8 369.7,254.4 371.9,256.0 374.2,257.6 376.4,259.2 378.7,260.9 378.7,260.9 376.4,259.2 374.2,257.6 371.9,256.0 369.7,254.4 367.4,252.8 365.2,249.4 362.9,245.9 360.7,243.3 358.5,241.3 356.2,240.0 354.0,239.5 351.7,239.6 349.5,239.8 347.2,238.2 345.0,236.6 342.8,234.9 340.5,233.3 338.3,231.7" fill="#043604" stroke="#00c000" stroke-width="0.35" fill-opacity="1"/><path d="M338.3,231.7L338.3,231.7M340.5,233.3L340.5,233.3M342.8,234.9L342.8,234.9M345.0,236.6L345.0,236.6M347.2,238.2L347.2,238.2M349.5,239.8L349.5,239.8M351.7,241.4L351.7,239.6M354.0,243.0L354.0,239.5M356.2,244.7L356.2,240.0M358.5,246.3L358.5,241.3M360.7,247.9L360.7,243.3M362.9,249.5L362.9,245.9M365.2,251.1L365.2,249.4M367.4,252.8L367.4,252.8M369.7,254.4L369.7,254.4M371.9,256.0L371.9,256.0M374.2,257.6L374.2,257.6M376.4,259.2L376.4,259.2M378.7,260.9L378.7,260.9" stroke="#00e400" stroke-width="0.42" fill="none"/><polygon points="436.7,239.9 439.0,241.5 441.3,243.2 443.6,244.8 445.9,246.5 448.2,248.1 450.5,249.8 452.8,251.4 455.1,253.0 457.4,254.7 459.8,256.3 462.1,258.0 464.4,259.6 466.7,261.2 469.0,262.9 471.3,264.5 473.6,266.2 475.9,267.8 478.2,269.5 478.2,269.5 475.9,265.6 473.6,260.4 471.3,255.9 469.0,252.0 466.7,248.8 464.4,246.3 462.1,244.4 459.8,243.2 457.4,242.7 455.1,242.8 452.8,243.6 450.5,245.1 448.2,247.2 445.9,246.5 443.6,244.8 441.3,243.2 439.0,241.5 436.7,239.9" fill="#043604" stroke="#00c000" stroke-width="0.35" fill-opacity="1"/><path d="M436.7,239.9L436.7,239.9M439.0,241.5L439.0,241.5M441.3,243.2L441.3,243.2M443.6,244.8L443.6,244.8M445.9,246.5L445.9,246.5M448.2,248.1L448.2,247.2M450.5,249.8L450.5,245.1M452.8,251.4L452.8,243.6M455.1,253.0L455.1,242.8M457.4,254.7L457.4,242.7M459.8,256.3L459.8,243.2M462.1,258.0L462.1,244.4M464.4,259.6L464.4,246.3M466.7,261.2L466.7,248.8M469.0,262.9L469.0,252.0M471.3,264.5L471.3,255.9M473.6,266.2L473.6,260.4M475.9,267.8L475.9,265.6M478.2,269.5L478.2,269.5" stroke="#00e400" stroke-width="0.42" fill="none"/><polygon points="419.8,290.6 422.1,289.7 424.5,288.9 426.8,288.0 429.1,287.2 431.5,286.3 433.8,285.5 436.2,284.7 438.5,283.8 440.8,283.0 443.2,282.1 445.5,281.3 447.8,280.4 450.2,279.6 452.5,278.7 454.8,277.9 457.2,277.1 459.5,276.2 461.8,275.4 464.2,274.5 466.5,273.7 468.9,272.8 471.2,272.0 473.5,271.1 475.9,270.3 478.2,269.5 478.2,269.5 475.9,270.3 473.5,271.1 471.2,272.0 468.9,272.8 466.5,271.6 464.2,269.1 461.8,267.0 459.5,265.3 457.2,263.9 454.8,262.9 452.5,262.3 450.2,262.0 447.8,262.1 445.5,262.6 443.2,263.4 440.8,264.6 438.5,266.2 436.2,268.1 433.8,270.5 431.5,273.1 429.1,276.2 426.8,279.6 424.5,283.4 422.1,287.5 419.8,290.6" fill="#043604" stroke="#00c000" stroke-width="0.35" fill-opacity="1"/><path d="M419.8,290.6L419.8,290.6M422.1,289.7L422.1,287.5M424.5,288.9L424.5,283.4M426.8,288.0L426.8,279.6M429.1,287.2L429.1,276.2M431.5,286.3L431.5,273.1M433.8,285.5L433.8,270.5M436.2,284.7L436.2,268.1M438.5,283.8L438.5,266.2M440.8,283.0L440.8,264.6M443.2,282.1L443.2,263.4M445.5,281.3L445.5,262.6M447.8,280.4L447.8,262.1M450.2,279.6L450.2,262.0M452.5,278.7L452.5,262.3M454.8,277.9L454.8,262.9M457.2,277.1L457.2,263.9M459.5,276.2L459.5,265.3M461.8,275.4L461.8,267.0M464.2,274.5L464.2,269.1M466.5,273.7L466.5,271.6M468.9,272.8L468.9,272.8M471.2,272.0L471.2,272.0M473.5,271.1L473.5,271.1M475.9,270.3L475.9,270.3M478.2,269.5L478.2,269.5" stroke="#00e400" stroke-width="0.42" fill="none"/><polygon points="378.7,260.9 380.9,262.5 383.2,264.2 385.5,265.8 387.8,267.5 390.1,269.1 392.4,270.8 394.7,272.4 396.9,274.1 399.2,275.7 401.5,277.4 403.8,279.0 406.1,280.7 408.4,282.3 410.7,284.0 412.9,285.6 415.2,287.3 417.5,288.9 419.8,290.6 419.8,290.6 417.5,288.4 415.2,284.6 412.9,281.3 410.7,278.4 408.4,276.0 406.1,274.0 403.8,272.5 401.5,271.4 399.2,270.7 396.9,270.5 394.7,270.7 392.4,270.8 390.1,269.1 387.8,267.5 385.5,265.8 383.2,264.2 380.9,262.5 378.7,260.9" fill="#043604" stroke="#00c000" stroke-width="0.35" fill-opacity="1"/><path d="M378.7,260.9L378.7,260.9M380.9,262.5L380.9,262.5M383.2,264.2L383.2,264.2M385.5,265.8L385.5,265.8M387.8,267.5L387.8,267.5M390.1,269.1L390.1,269.1M392.4,270.8L392.4,270.8M394.7,272.4L394.7,270.7M396.9,274.1L396.9,270.5M399.2,275.7L399.2,270.7M401.5,277.4L401.5,271.4M403.8,279.0L403.8,272.5M406.1,280.7L406.1,274.0M408.4,282.3L408.4,276.0M410.7,284.0L410.7,278.4M412.9,285.6L412.9,281.3M415.2,287.3L415.2,284.6M417.5,288.9L417.5,288.4M419.8,290.6L419.8,290.6" stroke="#00e400" stroke-width="0.42" fill="none"/><polygon points="352.8,180.1 359.1,184.6 359.1,189.0 352.8,184.5" fill="#5cffff" stroke="#9ff" stroke-width="0.25"/><polygon points="359.1,184.6 416.0,164.1 416.0,168.5 359.1,189.0" fill="#30e8e8" stroke="#9ff" stroke-width="0.25"/><polygon points="352.8,180.1 409.6,159.6 416.0,164.1 359.1,184.6" fill="#00ffff" stroke="#b0ffff" stroke-width="0.3"/><path d="M367.0,175.0L373.4,179.5M381.3,169.8L387.6,174.3M395.4,164.7L401.8,169.2M356.0,182.4L412.8,161.8" stroke="#9adada" stroke-width="0.3" fill="none"/><polygon points="408.0,163.6 448.3,192.0 448.3,196.4 408.0,168.0" fill="#5cffff" stroke="#9ff" stroke-width="0.25"/><polygon points="448.3,192.0 458.0,188.5 458.0,192.9 448.3,196.4" fill="#30e8e8" stroke="#9ff" stroke-width="0.25"/><polygon points="408.0,163.6 417.6,160.1 458.0,188.5 448.3,192.0" fill="#00ffff" stroke="#b0ffff" stroke-width="0.3"/><path d="M418.0,170.6L427.6,167.1M428.0,177.7L437.7,174.2M438.1,184.8L447.8,181.3M412.8,161.8L453.1,190.2" stroke="#9adada" stroke-width="0.3" fill="none"/><polygon points="295.5,200.8 301.8,205.4 301.8,209.8 295.5,205.2" fill="#5cffff" stroke="#9ff" stroke-width="0.25"/><polygon points="301.8,205.4 359.1,184.6 359.1,189.0 301.8,209.8" fill="#30e8e8" stroke="#9ff" stroke-width="0.25"/><polygon points="295.5,200.8 352.8,180.1 359.1,184.6 301.8,205.4" fill="#00ffff" stroke="#b0ffff" stroke-width="0.3"/><path d="M309.9,195.6L316.2,200.2M324.2,190.4L330.5,195.0M338.5,185.3L344.9,189.8M298.6,203.1L356.0,182.4" stroke="#9adada" stroke-width="0.3" fill="none"/><polygon points="392.7,208.6 399.2,213.2 399.2,217.6 392.7,213.0" fill="#5cffff" stroke="#9ff" stroke-width="0.25"/><polygon points="399.2,213.2 456.4,192.5 456.4,196.9 399.2,217.6" fill="#30e8e8" stroke="#9ff" stroke-width="0.25"/><polygon points="392.7,208.6 449.9,187.9 456.4,192.5 399.2,213.2" fill="#00ffff" stroke="#b0ffff" stroke-width="0.3"/><path d="M407.1,203.4L413.5,208.0M421.4,198.2L427.8,202.8M435.6,193.1L442.1,197.6M396.0,210.9L453.1,190.2" stroke="#9adada" stroke-width="0.3" fill="none"/><polygon points="351.1,184.1 391.1,212.6 391.1,217.0 351.1,188.5" fill="#5cffff" stroke="#9ff" stroke-width="0.25"/><polygon points="391.1,212.6 400.8,209.1 400.8,213.5 391.1,217.0" fill="#30e8e8" stroke="#9ff" stroke-width="0.25"/><polygon points="351.1,184.1 360.8,180.6 400.8,209.1 391.1,212.6" fill="#00ffff" stroke="#b0ffff" stroke-width="0.3"/><path d="M361.0,191.2L370.8,187.7M371.0,198.3L380.7,194.8M381.0,205.5L390.8,201.9M356.0,182.4L396.0,210.9" stroke="#9adada" stroke-width="0.3" fill="none"/><polygon points="448.3,192.0 489.3,220.9 489.3,225.3 448.3,196.4" fill="#5cffff" stroke="#9ff" stroke-width="0.25"/><polygon points="489.3,220.9 499.1,217.3 499.1,221.7 489.3,225.3" fill="#30e8e8" stroke="#9ff" stroke-width="0.25"/><polygon points="448.3,192.0 458.0,188.5 499.1,217.3 489.3,220.9" fill="#00ffff" stroke="#b0ffff" stroke-width="0.3"/><path d="M458.5,199.1L468.2,195.6M468.7,206.3L478.4,202.8M479.0,213.6L488.7,210.1M453.1,190.2L494.2,219.1" stroke="#9adada" stroke-width="0.3" fill="none"/><polygon points="335.1,229.4 341.5,234.0 341.5,238.4 335.1,233.8" fill="#5cffff" stroke="#9ff" stroke-width="0.25"/><polygon points="341.5,234.0 399.2,213.2 399.2,217.6 341.5,238.4" fill="#30e8e8" stroke="#9ff" stroke-width="0.25"/><polygon points="335.1,229.4 392.7,208.6 399.2,213.2 341.5,234.0" fill="#00ffff" stroke="#b0ffff" stroke-width="0.3"/><path d="M349.5,224.2L356.0,228.8M364.0,219.0L370.4,223.6M378.4,213.8L384.8,218.4M338.3,231.7L396.0,210.9" stroke="#9adada" stroke-width="0.3" fill="none"/><polygon points="433.4,237.6 440.0,242.2 440.0,246.6 433.4,242.0" fill="#5cffff" stroke="#9ff" stroke-width="0.25"/><polygon points="440.0,242.2 497.5,221.4 497.5,225.8 440.0,246.6" fill="#30e8e8" stroke="#9ff" stroke-width="0.25"/><polygon points="433.4,237.6 490.9,216.8 497.5,221.4 440.0,242.2" fill="#00ffff" stroke="#b0ffff" stroke-width="0.3"/><path d="M447.8,232.3L454.4,237.0M462.2,227.1L468.8,231.8M476.6,222.0L483.2,226.6M436.7,239.9L494.2,219.1" stroke="#9adada" stroke-width="0.3" fill="none"/><polygon points="293.7,204.9 333.3,233.5 333.3,237.9 293.7,209.3" fill="#5cffff" stroke="#9ff" stroke-width="0.25"/><polygon points="333.3,233.5 343.2,229.9 343.2,234.3 333.3,237.9" fill="#30e8e8" stroke="#9ff" stroke-width="0.25"/><polygon points="293.7,204.9 303.5,201.3 343.2,229.9 333.3,233.5" fill="#00ffff" stroke="#b0ffff" stroke-width="0.3"/><path d="M303.6,212.0L313.4,208.4M313.5,219.1L323.3,215.6M323.4,226.3L333.2,222.7M298.6,203.1L338.3,231.7" stroke="#9adada" stroke-width="0.3" fill="none"/><polygon points="391.1,212.6 431.8,241.7 431.8,246.1 391.1,217.0" fill="#5cffff" stroke="#9ff" stroke-width="0.25"/><polygon points="431.8,241.7 441.6,238.1 441.6,242.5 431.8,246.1" fill="#30e8e8" stroke="#9ff" stroke-width="0.25"/><polygon points="391.1,212.6 400.8,209.1 441.6,238.1 431.8,241.7" fill="#00ffff" stroke="#b0ffff" stroke-width="0.3"/><path d="M401.2,219.8L411.0,216.3M411.3,227.1L421.1,223.5M421.5,234.4L431.3,230.8M396.0,210.9L436.7,239.9" stroke="#9adada" stroke-width="0.3" fill="none"/><polygon points="489.3,220.9 531.2,250.3 531.2,254.7 489.3,225.3" fill="#5cffff" stroke="#9ff" stroke-width="0.25"/><polygon points="531.2,250.3 541.0,246.8 541.0,251.2 531.2,254.7" fill="#30e8e8" stroke="#9ff" stroke-width="0.25"/><polygon points="489.3,220.9 499.1,217.3 541.0,246.8 531.2,250.3" fill="#00ffff" stroke="#b0ffff" stroke-width="0.3"/><path d="M499.7,228.2L509.5,224.7M510.2,235.5L519.9,232.0M520.6,242.9L530.4,239.4M494.2,219.1L536.1,248.5" stroke="#9adada" stroke-width="0.3" fill="none"/><polygon points="375.4,258.5 381.9,263.2 381.9,267.6 375.4,262.9" fill="#5cffff" stroke="#9ff" stroke-width="0.25"/><polygon points="381.9,263.2 440.0,242.2 440.0,246.6 381.9,267.6" fill="#30e8e8" stroke="#9ff" stroke-width="0.25"/><polygon points="375.4,258.5 433.4,237.6 440.0,242.2 381.9,263.2" fill="#00ffff" stroke="#b0ffff" stroke-width="0.3"/><path d="M389.9,253.2L396.5,258.0M404.5,248.0L411.0,252.7M419.0,242.8L425.5,247.5M378.7,260.9L436.7,239.9" stroke="#9adada" stroke-width="0.3" fill="none"/><polygon points="474.9,267.1 481.6,271.9 481.6,276.3 474.9,271.5" fill="#5cffff" stroke="#9ff" stroke-width="0.25"/><polygon points="481.6,271.9 539.5,250.9 539.5,255.3 481.6,276.3" fill="#30e8e8" stroke="#9ff" stroke-width="0.25"/><polygon points="474.9,267.1 532.7,246.2 539.5,250.9 481.6,271.9" fill="#00ffff" stroke="#b0ffff" stroke-width="0.3"/><path d="M489.4,261.8L496.1,266.6M503.8,256.6L510.6,261.4M518.3,251.4L525.0,256.1M478.2,269.5L536.1,248.5" stroke="#9adada" stroke-width="0.3" fill="none"/><polygon points="333.3,233.5 373.7,262.6 373.7,267.0 333.3,237.9" fill="#5cffff" stroke="#9ff" stroke-width="0.25"/><polygon points="373.7,262.6 383.6,259.1 383.6,263.5 373.7,267.0" fill="#30e8e8" stroke="#9ff" stroke-width="0.25"/><polygon points="333.3,233.5 343.2,229.9 383.6,259.1 373.7,262.6" fill="#00ffff" stroke="#b0ffff" stroke-width="0.3"/><path d="M343.4,240.7L353.2,237.2M353.4,248.0L363.3,244.4M363.5,255.3L373.4,251.7M338.3,231.7L378.7,260.9" stroke="#9adada" stroke-width="0.3" fill="none"/><polygon points="431.8,241.7 473.3,271.2 473.3,275.6 431.8,246.1" fill="#5cffff" stroke="#9ff" stroke-width="0.25"/><polygon points="473.3,271.2 483.1,267.7 483.1,272.1 473.3,275.6" fill="#30e8e8" stroke="#9ff" stroke-width="0.25"/><polygon points="431.8,241.7 441.6,238.1 483.1,267.7 473.3,271.2" fill="#00ffff" stroke="#b0ffff" stroke-width="0.3"/><path d="M442.1,249.0L451.9,245.5M452.4,256.4L462.3,252.8M462.8,263.8L472.7,260.2M436.7,239.9L478.2,269.5" stroke="#9adada" stroke-width="0.3" fill="none"/><polygon points="416.5,288.2 423.1,293.0 423.1,297.4 416.5,292.6" fill="#5cffff" stroke="#9ff" stroke-width="0.25"/><polygon points="423.1,293.0 481.6,271.9 481.6,276.3 423.1,297.4" fill="#30e8e8" stroke="#9ff" stroke-width="0.25"/><polygon points="416.5,288.2 474.9,267.1 481.6,271.9 423.1,293.0" fill="#00ffff" stroke="#b0ffff" stroke-width="0.3"/><path d="M431.1,282.9L437.8,287.7M445.7,277.6L452.4,282.4M460.3,272.3L467.0,277.1M419.8,290.6L478.2,269.5" stroke="#9adada" stroke-width="0.3" fill="none"/><polygon points="373.7,262.6 414.8,292.4 414.8,296.8 373.7,267.0" fill="#5cffff" stroke="#9ff" stroke-width="0.25"/><polygon points="414.8,292.4 424.8,288.8 424.8,293.2 414.8,296.8" fill="#30e8e8" stroke="#9ff" stroke-width="0.25"/><polygon points="373.7,262.6 383.6,259.1 424.8,288.8 414.8,292.4" fill="#00ffff" stroke="#b0ffff" stroke-width="0.3"/><path d="M383.9,270.0L393.8,266.4M394.2,277.4L404.1,273.8M404.5,284.9L414.4,281.3M378.7,260.9L419.8,290.6" stroke="#9adada" stroke-width="0.3" fill="none"/><polygon points="356.0,182.4 358.2,181.5 360.5,180.7 362.8,179.9 365.1,179.1 367.3,178.3 369.6,177.4 371.9,176.6 374.2,175.8 376.4,175.0 378.7,174.2 381.0,173.3 383.2,172.5 385.5,171.7 387.8,170.9 390.1,170.0 392.3,169.2 394.6,168.4 396.9,167.6 399.2,166.8 401.4,165.9 403.7,165.1 406.0,164.3 408.2,163.5 410.5,162.6 412.8,161.8 412.8,161.8 410.5,160.5 408.2,158.0 406.0,155.9 403.7,154.1 401.4,152.7 399.2,151.7 396.9,151.1 394.6,150.8 392.3,150.9 390.1,151.3 387.8,152.2 385.5,153.4 383.2,154.9 381.0,156.9 378.7,159.2 376.4,161.8 374.2,164.9 371.9,168.3 369.6,172.0 367.3,176.2 365.1,179.1 362.8,179.9 360.5,180.7 358.2,181.5 356.0,182.4" fill="#00ff38" fill-opacity="0.38"/><polygon points="412.8,161.8 415.0,163.4 417.3,165.0 419.5,166.6 421.8,168.1 424.0,169.7 426.2,171.3 428.5,172.9 430.7,174.4 433.0,176.0 435.2,177.6 437.4,179.2 439.7,180.7 441.9,182.3 444.2,183.9 446.4,185.5 448.6,187.1 450.9,188.6 453.1,190.2 453.1,190.2 450.9,188.6 448.6,187.1 446.4,185.5 444.2,183.9 441.9,182.3 439.7,180.7 437.4,177.5 435.2,174.0 433.0,171.0 430.7,168.4 428.5,166.3 426.2,164.6 424.0,163.4 421.8,162.6 419.5,162.2 417.3,162.3 415.0,162.8 412.8,161.8" fill="#00ff38" fill-opacity="0.38"/><polygon points="298.6,203.1 300.9,202.3 303.2,201.4 305.5,200.6 307.8,199.8 310.1,198.9 312.4,198.1 314.7,197.3 317.0,196.5 319.3,195.6 321.6,194.8 323.9,194.0 326.2,193.1 328.5,192.3 330.7,191.5 333.0,190.7 335.3,189.8 337.6,189.0 339.9,188.2 342.2,187.3 344.5,186.5 346.8,185.7 349.1,184.9 351.4,184.0 353.7,183.2 356.0,182.4 356.0,182.4 353.7,183.2 351.4,184.0 349.1,184.9 346.8,185.7 344.5,184.4 342.2,181.9 339.9,179.8 337.6,178.1 335.3,176.7 333.0,175.7 330.7,175.0 328.5,174.7 326.2,174.8 323.9,175.3 321.6,176.1 319.3,177.3 317.0,178.9 314.7,180.8 312.4,183.1 310.1,185.7 307.8,188.8 305.5,192.2 303.2,195.9 300.9,200.1 298.6,203.1" fill="#00ff38" fill-opacity="0.38"/><polygon points="396.0,210.9 398.2,210.0 400.5,209.2 402.8,208.4 405.1,207.6 407.4,206.7 409.7,205.9 412.0,205.1 414.3,204.3 416.5,203.4 418.8,202.6 421.1,201.8 423.4,200.9 425.7,200.1 428.0,199.3 430.3,198.5 432.5,197.6 434.8,196.8 437.1,196.0 439.4,195.2 441.7,194.3 444.0,193.5 446.3,192.7 448.6,191.9 450.8,191.0 453.1,190.2 453.1,190.2 450.8,189.6 448.6,187.8 446.3,186.4 444.0,185.2 441.7,184.3 439.4,183.8 437.1,183.5 434.8,183.6 432.5,183.9 430.3,184.6 428.0,185.5 425.7,186.8 423.4,188.4 421.1,190.2 418.8,192.4 416.5,194.9 414.3,197.7 412.0,200.8 409.7,204.1 407.4,206.7 405.1,207.6 402.8,208.4 400.5,209.2 398.2,210.0 396.0,210.9" fill="#00ff38" fill-opacity="0.38"/><polygon points="356.0,182.4 358.3,184.0 360.7,185.7 363.0,187.4 365.4,189.1 367.7,190.8 370.1,192.4 372.4,194.1 374.8,195.8 377.1,197.5 379.5,199.1 381.8,200.8 384.2,202.5 386.5,204.2 388.9,205.8 391.3,207.5 393.6,209.2 396.0,210.9 396.0,210.9 393.6,209.2 391.3,207.5 388.9,205.8 386.5,204.2 384.2,200.4 381.8,195.0 379.5,190.3 377.1,186.3 374.8,183.1 372.4,180.7 370.1,178.9 367.7,178.0 365.4,177.8 363.0,178.3 360.7,179.6 358.3,181.6 356.0,182.4" fill="#00ff38" fill-opacity="0.38"/><polygon points="453.1,190.2 455.4,191.8 457.7,193.4 460.0,195.0 462.3,196.6 464.5,198.2 466.8,199.8 469.1,201.4 471.4,203.0 473.7,204.7 475.9,206.3 478.2,207.9 480.5,209.5 482.8,211.1 485.1,212.7 487.4,214.3 489.6,215.9 491.9,217.5 494.2,219.1 494.2,219.1 491.9,217.5 489.6,215.9 487.4,214.3 485.1,212.7 482.8,211.1 480.5,207.7 478.2,204.3 475.9,201.6 473.7,199.7 471.4,198.4 469.1,197.9 466.8,198.1 464.5,198.2 462.3,196.6 460.0,195.0 457.7,193.4 455.4,191.8 453.1,190.2" fill="#00ff38" fill-opacity="0.38"/><polygon points="338.3,231.7 340.6,230.9 342.9,230.0 345.2,229.2 347.5,228.4 349.8,227.5 352.1,226.7 354.4,225.9 356.7,225.0 359.0,224.2 361.3,223.4 363.7,222.5 366.0,221.7 368.3,220.9 370.6,220.0 372.9,219.2 375.2,218.4 377.5,217.5 379.8,216.7 382.1,215.9 384.4,215.0 386.7,214.2 389.0,213.4 391.3,212.5 393.6,211.7 396.0,210.9 396.0,210.9 393.6,211.7 391.3,212.5 389.0,213.4 386.7,214.2 384.4,215.0 382.1,214.1 379.8,212.4 377.5,210.9 375.2,209.8 372.9,209.0 370.6,208.5 368.3,208.3 366.0,208.4 363.7,208.8 361.3,209.5 359.0,210.5 356.7,211.8 354.4,213.4 352.1,215.3 349.8,217.5 347.5,220.1 345.2,222.9 342.9,226.0 340.6,229.5 338.3,231.7" fill="#00ff38" fill-opacity="0.38"/><polygon points="436.7,239.9 439.0,239.1 441.3,238.2 443.6,237.4 445.9,236.6 448.2,235.7 450.5,234.9 452.8,234.1 455.1,233.2 457.4,232.4 459.7,231.6 462.0,230.7 464.3,229.9 466.6,229.1 468.9,228.3 471.2,227.4 473.5,226.6 475.8,225.8 478.1,224.9 480.4,224.1 482.7,223.3 485.0,222.4 487.3,221.6 489.6,220.8 491.9,219.9 494.2,219.1 494.2,219.1 491.9,218.5 489.6,216.8 487.3,215.3 485.0,214.1 482.7,213.3 480.4,212.7 478.1,212.5 475.8,212.5 473.5,212.9 471.2,213.5 468.9,214.5 466.6,215.8 464.3,217.3 462.0,219.2 459.7,221.4 457.4,223.9 455.1,226.7 452.8,229.7 450.5,233.1 448.2,235.7 445.9,236.6 443.6,237.4 441.3,238.2 439.0,239.1 436.7,239.9" fill="#00ff38" fill-opacity="0.38"/><polygon points="298.6,203.1 301.0,204.8 303.3,206.5 305.6,208.1 308.0,209.8 310.3,211.5 312.6,213.2 315.0,214.9 317.3,216.6 319.6,218.2 322.0,219.9 324.3,221.6 326.6,223.3 329.0,225.0 331.3,226.7 333.6,228.3 335.9,230.0 338.3,231.7 338.3,231.7 335.9,230.0 333.6,228.3 331.3,226.7 329.0,225.0 326.6,223.3 324.3,221.4 322.0,217.4 319.6,213.9 317.3,211.0 315.0,208.5 312.6,206.5 310.3,205.0 308.0,204.0 305.6,203.6 303.3,203.6 301.0,204.1 298.6,203.1" fill="#00ff38" fill-opacity="0.38"/><polygon points="396.0,210.9 398.2,212.5 400.5,214.1 402.7,215.7 405.0,217.3 407.3,218.9 409.5,220.5 411.8,222.2 414.1,223.8 416.3,225.4 418.6,227.0 420.9,228.6 423.1,230.2 425.4,231.8 427.6,233.4 429.9,235.1 432.2,236.7 434.4,238.3 436.7,239.9 436.7,239.9 434.4,238.3 432.2,236.7 429.9,235.1 427.6,233.4 425.4,227.7 423.1,222.7 420.9,218.6 418.6,215.5 416.3,213.4 414.1,212.3 411.8,212.1 409.5,213.0 407.3,214.8 405.0,217.3 402.7,215.7 400.5,214.1 398.2,212.5 396.0,210.9" fill="#00ff38" fill-opacity="0.38"/><polygon points="494.2,219.1 496.5,220.7 498.9,222.4 501.2,224.0 503.5,225.6 505.8,227.3 508.2,228.9 510.5,230.6 512.8,232.2 515.1,233.8 517.5,235.5 519.8,237.1 522.1,238.7 524.4,240.4 526.8,242.0 529.1,243.6 531.4,245.3 533.7,246.9 536.1,248.5 536.1,248.5 533.7,246.4 531.4,242.6 529.1,239.3 526.8,236.4 524.4,234.0 522.1,232.1 519.8,230.5 517.5,229.5 515.1,228.8 512.8,228.6 510.5,228.9 508.2,228.9 505.8,227.3 503.5,225.6 501.2,224.0 498.9,222.4 496.5,220.7 494.2,219.1" fill="#00ff38" fill-opacity="0.38"/><polygon points="378.7,260.9 381.0,260.0 383.3,259.2 385.6,258.3 387.9,257.5 390.3,256.7 392.6,255.8 394.9,255.0 397.2,254.1 399.5,253.3 401.9,252.5 404.2,251.6 406.5,250.8 408.8,250.0 411.2,249.1 413.5,248.3 415.8,247.4 418.1,246.6 420.4,245.8 422.8,244.9 425.1,244.1 427.4,243.2 429.7,242.4 432.0,241.6 434.4,240.7 436.7,239.9 436.7,239.9 434.4,240.7 432.0,241.6 429.7,242.4 427.4,243.2 425.1,244.1 422.8,243.2 420.4,241.4 418.1,240.0 415.8,238.9 413.5,238.1 411.2,237.6 408.8,237.4 406.5,237.5 404.2,237.9 401.9,238.6 399.5,239.6 397.2,240.9 394.9,242.5 392.6,244.4 390.3,246.7 387.9,249.2 385.6,252.0 383.3,255.2 381.0,258.6 378.7,260.9" fill="#00ff38" fill-opacity="0.38"/><polygon points="478.2,269.5 480.5,268.6 482.8,267.8 485.1,267.0 487.5,266.1 489.8,265.3 492.1,264.4 494.4,263.6 496.7,262.8 499.0,261.9 501.4,261.1 503.7,260.3 506.0,259.4 508.3,258.6 510.6,257.7 512.9,256.9 515.2,256.1 517.6,255.2 519.9,254.4 522.2,253.6 524.5,252.7 526.8,251.9 529.1,251.1 531.4,250.2 533.8,249.4 536.1,248.5 536.1,248.5 533.8,247.2 531.4,244.7 529.1,242.6 526.8,240.9 524.5,239.5 522.2,238.5 519.9,237.9 517.6,237.6 515.2,237.7 512.9,238.2 510.6,239.1 508.3,240.3 506.0,241.8 503.7,243.8 501.4,246.1 499.0,248.8 496.7,251.8 494.4,255.2 492.1,259.0 489.8,263.2 487.5,266.1 485.1,267.0 482.8,267.8 480.5,268.6 478.2,269.5" fill="#00ff38" fill-opacity="0.38"/><polygon points="338.3,231.7 340.5,233.3 342.8,234.9 345.0,236.6 347.2,238.2 349.5,239.8 351.7,241.4 354.0,243.0 356.2,244.7 358.5,246.3 360.7,247.9 362.9,249.5 365.2,251.1 367.4,252.8 369.7,254.4 371.9,256.0 374.2,257.6 376.4,259.2 378.7,260.9 378.7,260.9 376.4,259.2 374.2,257.6 371.9,256.0 369.7,254.4 367.4,252.8 365.2,249.4 362.9,245.9 360.7,243.3 358.5,241.3 356.2,240.0 354.0,239.5 351.7,239.6 349.5,239.8 347.2,238.2 345.0,236.6 342.8,234.9 340.5,233.3 338.3,231.7" fill="#00ff38" fill-opacity="0.38"/><polygon points="436.7,239.9 439.0,241.5 441.3,243.2 443.6,244.8 445.9,246.5 448.2,248.1 450.5,249.8 452.8,251.4 455.1,253.0 457.4,254.7 459.8,256.3 462.1,258.0 464.4,259.6 466.7,261.2 469.0,262.9 471.3,264.5 473.6,266.2 475.9,267.8 478.2,269.5 478.2,269.5 475.9,265.6 473.6,260.4 471.3,255.9 469.0,252.0 466.7,248.8 464.4,246.3 462.1,244.4 459.8,243.2 457.4,242.7 455.1,242.8 452.8,243.6 450.5,245.1 448.2,247.2 445.9,246.5 443.6,244.8 441.3,243.2 439.0,241.5 436.7,239.9" fill="#00ff38" fill-opacity="0.38"/><polygon points="419.8,290.6 422.1,289.7 424.5,288.9 426.8,288.0 429.1,287.2 431.5,286.3 433.8,285.5 436.2,284.7 438.5,283.8 440.8,283.0 443.2,282.1 445.5,281.3 447.8,280.4 450.2,279.6 452.5,278.7 454.8,277.9 457.2,277.1 459.5,276.2 461.8,275.4 464.2,274.5 466.5,273.7 468.9,272.8 471.2,272.0 473.5,271.1 475.9,270.3 478.2,269.5 478.2,269.5 475.9,270.3 473.5,271.1 471.2,272.0 468.9,272.8 466.5,271.6 464.2,269.1 461.8,267.0 459.5,265.3 457.2,263.9 454.8,262.9 452.5,262.3 450.2,262.0 447.8,262.1 445.5,262.6 443.2,263.4 440.8,264.6 438.5,266.2 436.2,268.1 433.8,270.5 431.5,273.1 429.1,276.2 426.8,279.6 424.5,283.4 422.1,287.5 419.8,290.6" fill="#00ff38" fill-opacity="0.38"/><polygon points="378.7,260.9 380.9,262.5 383.2,264.2 385.5,265.8 387.8,267.5 390.1,269.1 392.4,270.8 394.7,272.4 396.9,274.1 399.2,275.7 401.5,277.4 403.8,279.0 406.1,280.7 408.4,282.3 410.7,284.0 412.9,285.6 415.2,287.3 417.5,288.9 419.8,290.6 419.8,290.6 417.5,288.4 415.2,284.6 412.9,281.3 410.7,278.4 408.4,276.0 406.1,274.0 403.8,272.5 401.5,271.4 399.2,270.7 396.9,270.5 394.7,270.7 392.4,270.8 390.1,269.1 387.8,267.5 385.5,265.8 383.2,264.2 380.9,262.5 378.7,260.9" fill="#00ff38" fill-opacity="0.38"/><rect x="410.1" y="127.7" width="5.4" height="34.1" fill="#0000ff"/><rect x="412.3" y="127.7" width="1" height="34.1" fill="#2b3cff"/><ellipse cx="412.8" cy="161.8" rx="2.7" ry="1.1" fill="#0000ff"/><rect x="410.1" y="89.3" width="5.4" height="38.4" fill="#0000ff"/><rect x="412.3" y="89.3" width="1" height="38.4" fill="#2b3cff"/><polygon points="412.8,127.7 415.0,129.3 417.3,130.8 419.5,132.4 421.8,133.9 424.0,135.5 426.2,137.0 428.5,138.6 430.7,140.1 433.0,141.7 435.2,143.2 437.4,144.8 439.7,146.4 441.9,147.9 444.2,149.5 446.4,151.0 448.6,152.6 450.9,154.1 453.1,155.7 453.1,142.7 450.9,145.3 448.6,147.5 446.4,149.3 444.2,150.6 441.9,151.4 439.7,151.8 437.4,151.7 435.2,151.2 433.0,150.2 430.7,148.7 428.5,146.8 426.2,144.5 424.0,141.7 421.8,138.4 419.5,134.7 417.3,130.5 415.0,125.8 412.8,120.7" fill="#043604" stroke="#00c000" stroke-width="0.35" fill-opacity="1"/><path d="M412.8,127.7L412.8,120.7M415.0,129.3L415.0,125.8M417.3,130.8L417.3,130.5M419.5,132.4L419.5,134.7M421.8,133.9L421.8,138.4M424.0,135.5L424.0,141.7M426.2,137.0L426.2,144.5M428.5,138.6L428.5,146.8M430.7,140.1L430.7,148.7M433.0,141.7L433.0,150.2M435.2,143.2L435.2,151.2M437.4,144.8L437.4,151.7M439.7,146.4L439.7,151.8M441.9,147.9L441.9,151.4M444.2,149.5L444.2,150.6M446.4,151.0L446.4,149.3M448.6,152.6L448.6,147.5M450.9,154.1L450.9,145.3M453.1,155.7L453.1,142.7" stroke="#00e400" stroke-width="0.42" fill="none"/><polygon points="410.7,130.8 451.0,158.8 455.3,152.6 414.9,124.6" fill="#ff0000"/><path d="M412.8,127.7L453.1,155.7" stroke="#ff5a4a" stroke-width="0.5"/><polygon points="356.0,146.5 358.2,145.8 360.5,145.0 362.8,144.3 365.1,143.5 367.3,142.8 369.6,142.0 371.9,141.3 374.2,140.5 376.4,139.8 378.7,139.0 381.0,138.2 383.2,137.5 385.5,136.7 387.8,136.0 390.1,135.2 392.3,134.5 394.6,133.7 396.9,133.0 399.2,132.2 401.4,131.5 403.7,130.7 406.0,130.0 408.2,129.2 410.5,128.5 412.8,127.7 412.8,126.2 410.5,127.4 408.2,128.6 406.0,129.8 403.7,130.8 401.4,131.9 399.2,132.9 396.9,133.8 394.6,134.8 392.3,135.6 390.1,136.5 387.8,137.2 385.5,138.0 383.2,138.7 381.0,139.3 378.7,139.9 376.4,140.5 374.2,141.0 371.9,141.5 369.6,141.9 367.3,142.3 365.1,142.6 362.8,142.9 360.5,143.2 358.2,143.4 356.0,143.5" fill="#043604" stroke="#00c000" stroke-width="0.35" fill-opacity="1"/><polygon points="357.1,150.0 414.0,131.2 411.6,124.2 354.8,143.0" fill="#ff0000"/><path d="M356.0,146.5L412.8,127.7" stroke="#ff5a4a" stroke-width="0.5"/><rect x="353.3" y="146.5" width="5.4" height="35.9" fill="#0000ff"/><rect x="355.5" y="146.5" width="1" height="35.9" fill="#2b3cff"/><ellipse cx="356.0" cy="182.4" rx="2.7" ry="1.1" fill="#0000ff"/><rect x="450.4" y="155.7" width="5.4" height="34.5" fill="#0000ff"/><rect x="452.6" y="155.7" width="1" height="34.5" fill="#2b3cff"/><ellipse cx="453.1" cy="190.2" rx="2.7" ry="1.1" fill="#0000ff"/><polygon points="412.8,89.3 415.0,90.9 417.3,92.4 419.5,94.0 421.8,95.5 424.0,97.0 426.2,98.6 428.5,100.1 430.7,101.7 433.0,103.2 435.2,104.8 437.4,106.3 439.7,107.9 441.9,109.4 444.2,111.0 446.4,112.5 448.6,114.0 450.9,115.6 453.1,117.1 453.1,104.1 450.9,106.8 448.6,109.0 446.4,110.8 444.2,112.1 441.9,112.9 439.7,113.3 437.4,113.2 435.2,112.7 433.0,111.7 430.7,110.3 428.5,108.4 426.2,106.0 424.0,103.2 421.8,100.0 419.5,96.2 417.3,92.1 415.0,87.4 412.8,82.3" fill="#043604" stroke="#00c000" stroke-width="0.35" fill-opacity="1"/><path d="M412.8,89.3L412.8,82.3M415.0,90.9L415.0,87.4M417.3,92.4L417.3,92.1M419.5,94.0L419.5,96.2M421.8,95.5L421.8,100.0M424.0,97.0L424.0,103.2M426.2,98.6L426.2,106.0M428.5,100.1L428.5,108.4M430.7,101.7L430.7,110.3M433.0,103.2L433.0,111.7M435.2,104.8L435.2,112.7M437.4,106.3L437.4,113.2M439.7,107.9L439.7,113.3M441.9,109.4L441.9,112.9M444.2,111.0L444.2,112.1M446.4,112.5L446.4,110.8M448.6,114.0L448.6,109.0M450.9,115.6L450.9,106.8M453.1,117.1L453.1,104.1" stroke="#00e400" stroke-width="0.42" fill="none"/><polygon points="410.7,92.4 451.0,120.2 455.3,114.1 414.9,86.2" fill="#ff0000"/><path d="M412.8,89.3L453.1,117.1" stroke="#ff5a4a" stroke-width="0.5"/><polygon points="356.0,107.8 358.2,107.1 360.5,106.3 362.8,105.6 365.1,104.9 367.3,104.1 369.6,103.4 371.9,102.6 374.2,101.9 376.4,101.2 378.7,100.4 381.0,99.7 383.2,98.9 385.5,98.2 387.8,97.5 390.1,96.7 392.3,96.0 394.6,95.2 396.9,94.5 399.2,93.8 401.4,93.0 403.7,92.3 406.0,91.5 408.2,90.8 410.5,90.1 412.8,89.3 412.8,87.8 410.5,89.0 408.2,90.2 406.0,91.3 403.7,92.4 401.4,93.4 399.2,94.4 396.9,95.4 394.6,96.3 392.3,97.1 390.1,97.9 387.8,98.7 385.5,99.4 383.2,100.1 381.0,100.7 378.7,101.3 376.4,101.9 374.2,102.4 371.9,102.8 369.6,103.3 367.3,103.6 365.1,104.0 362.8,104.2 360.5,104.5 358.2,104.7 356.0,104.8" fill="#043604" stroke="#00c000" stroke-width="0.35" fill-opacity="1"/><polygon points="357.1,111.3 413.9,92.8 411.6,85.8 354.8,104.3" fill="#ff0000"/><path d="M356.0,107.8L412.8,89.3" stroke="#ff5a4a" stroke-width="0.5"/><rect x="353.3" y="107.8" width="5.4" height="38.7" fill="#0000ff"/><rect x="355.5" y="107.8" width="1" height="38.7" fill="#2b3cff"/><rect x="450.4" y="117.1" width="5.4" height="38.5" fill="#0000ff"/><rect x="452.6" y="117.1" width="1" height="38.5" fill="#2b3cff"/><polygon points="356.0,146.5 358.3,148.2 360.7,149.8 363.0,151.5 365.4,153.2 367.7,154.8 370.1,156.5 372.4,158.1 374.8,159.8 377.1,161.4 379.5,163.1 381.8,164.8 384.2,166.4 386.5,168.1 388.9,169.7 391.3,171.4 393.6,173.0 396.0,174.7 396.0,161.7 393.6,164.5 391.3,166.8 388.9,168.5 386.5,169.8 384.2,170.5 381.8,170.8 379.5,170.5 377.1,169.7 374.8,168.4 372.4,166.6 370.1,164.2 367.7,161.4 365.4,158.1 363.0,154.2 360.7,149.8 358.3,144.9 356.0,139.5" fill="#043604" stroke="#00c000" stroke-width="0.35" fill-opacity="1"/><path d="M356.0,146.5L356.0,139.5M358.3,148.2L358.3,144.9M360.7,149.8L360.7,149.8M363.0,151.5L363.0,154.2M365.4,153.2L365.4,158.1M367.7,154.8L367.7,161.4M370.1,156.5L370.1,164.2M372.4,158.1L372.4,166.6M374.8,159.8L374.8,168.4M377.1,161.4L377.1,169.7M379.5,163.1L379.5,170.5M381.8,164.8L381.8,170.8M384.2,166.4L384.2,170.5M386.5,168.1L386.5,169.8M388.9,169.7L388.9,168.5M391.3,171.4L391.3,166.8M393.6,173.0L393.6,164.5M396.0,174.7L396.0,161.7" stroke="#00e400" stroke-width="0.42" fill="none"/><polygon points="353.8,149.6 393.8,177.8 398.1,171.6 358.1,143.5" fill="#ff0000"/><path d="M356.0,146.5L396.0,174.7" stroke="#ff5a4a" stroke-width="0.5"/><polygon points="453.1,155.7 455.4,157.3 457.7,158.8 460.0,160.4 462.3,162.0 464.5,163.6 466.8,165.2 469.1,166.7 471.4,168.3 473.7,169.9 475.9,171.5 478.2,173.1 480.5,174.7 482.8,176.2 485.1,177.8 487.4,179.4 489.6,181.0 491.9,182.6 494.2,184.1 494.2,171.1 491.9,174.1 489.6,176.5 487.4,178.3 485.1,179.7 482.8,180.5 480.5,180.8 478.2,180.5 475.9,179.7 473.7,178.4 471.4,176.6 469.1,174.2 466.8,171.3 464.5,167.8 462.3,163.9 460.0,159.4 457.7,154.3 455.4,148.8 453.1,142.7" fill="#043604" stroke="#00c000" stroke-width="0.35" fill-opacity="1"/><path d="M453.1,155.7L453.1,142.7M455.4,157.3L455.4,148.8M457.7,158.8L457.7,154.3M460.0,160.4L460.0,159.4M462.3,162.0L462.3,163.9M464.5,163.6L464.5,167.8M466.8,165.2L466.8,171.3M469.1,166.7L469.1,174.2M471.4,168.3L471.4,176.6M473.7,169.9L473.7,178.4M475.9,171.5L475.9,179.7M478.2,173.1L478.2,180.5M480.5,174.7L480.5,180.8M482.8,176.2L482.8,180.5M485.1,177.8L485.1,179.7M487.4,179.4L487.4,178.3M489.6,181.0L489.6,176.5M491.9,182.6L491.9,174.1M494.2,184.1L494.2,171.1" stroke="#00e400" stroke-width="0.42" fill="none"/><polygon points="451.0,158.8 492.1,187.2 496.3,181.1 455.3,152.6" fill="#ff0000"/><path d="M453.1,155.7L494.2,184.1" stroke="#ff5a4a" stroke-width="0.5"/><polygon points="298.6,165.5 300.9,164.7 303.2,164.0 305.5,163.2 307.8,162.5 310.1,161.7 312.4,160.9 314.7,160.2 317.0,159.4 319.3,158.7 321.6,157.9 323.9,157.1 326.2,156.4 328.5,155.6 330.7,154.9 333.0,154.1 335.3,153.3 337.6,152.6 339.9,151.8 342.2,151.1 344.5,150.3 346.8,149.6 349.1,148.8 351.4,148.0 353.7,147.3 356.0,146.5 356.0,143.5 353.7,144.9 351.4,146.2 349.1,147.4 346.8,148.7 344.5,149.8 342.2,151.0 339.9,152.0 337.6,153.1 335.3,154.1 333.0,155.0 330.7,155.9 328.5,156.8 326.2,157.6 323.9,158.4 321.6,159.1 319.3,159.8 317.0,160.4 314.7,161.0 312.4,161.6 310.1,162.1 307.8,162.6 305.5,163.0 303.2,163.4 300.9,163.7 298.6,164.0" fill="#043604" stroke="#00c000" stroke-width="0.35" fill-opacity="1"/><polygon points="299.8,169.0 357.1,150.0 354.8,143.0 297.5,162.0" fill="#ff0000"/><path d="M298.6,165.5L356.0,146.5" stroke="#ff5a4a" stroke-width="0.5"/><polygon points="396.0,174.7 398.2,173.9 400.5,173.2 402.8,172.4 405.1,171.7 407.4,170.9 409.7,170.1 412.0,169.4 414.3,168.6 416.5,167.9 418.8,167.1 421.1,166.3 423.4,165.6 425.7,164.8 428.0,164.0 430.3,163.3 432.5,162.5 434.8,161.8 437.1,161.0 439.4,160.2 441.7,159.5 444.0,158.7 446.3,158.0 448.6,157.2 450.8,156.4 453.1,155.7 453.1,154.2 450.8,155.4 448.6,156.6 446.3,157.7 444.0,158.8 441.7,159.9 439.4,160.9 437.1,161.9 434.8,162.8 432.5,163.7 430.3,164.5 428.0,165.3 425.7,166.0 423.4,166.7 421.1,167.4 418.8,168.0 416.5,168.6 414.3,169.1 412.0,169.6 409.7,170.0 407.4,170.4 405.1,170.8 402.8,171.1 400.5,171.3 398.2,171.5 396.0,171.7" fill="#043604" stroke="#00c000" stroke-width="0.35" fill-opacity="1"/><polygon points="400.4,179.8 450.8,163.0 448.6,156.6 398.3,173.3" fill="#00ff00"/><path d="M399.4,176.6L449.7,159.8" stroke="#7dff6a" stroke-width="0.5"/><rect x="295.9" y="165.5" width="5.4" height="37.6" fill="#0000ff"/><rect x="298.1" y="165.5" width="1" height="37.6" fill="#2b3cff"/><ellipse cx="298.6" cy="203.1" rx="2.7" ry="1.1" fill="#0000ff"/><rect x="393.3" y="174.7" width="5.4" height="36.2" fill="#0000ff"/><rect x="395.5" y="174.7" width="1" height="36.2" fill="#2b3cff"/><ellipse cx="396.0" cy="210.9" rx="2.7" ry="1.1" fill="#0000ff"/><rect x="491.5" y="184.1" width="5.4" height="35.0" fill="#0000ff"/><rect x="493.7" y="184.1" width="1" height="35.0" fill="#2b3cff"/><ellipse cx="494.2" cy="219.1" rx="2.7" ry="1.1" fill="#0000ff"/><polygon points="356.0,107.8 358.3,109.5 360.7,111.1 363.0,112.8 365.4,114.4 367.7,116.1 370.1,117.7 372.4,119.4 374.8,121.1 377.1,122.7 379.5,124.4 381.8,126.0 384.2,127.7 386.5,129.3 388.9,131.0 391.3,132.6 393.6,134.3 396.0,135.9 396.0,122.9 393.6,125.7 391.3,128.0 388.9,129.8 386.5,131.0 384.2,131.8 381.8,132.0 379.5,131.8 377.1,131.0 374.8,129.7 372.4,127.9 370.1,125.5 367.7,122.7 365.4,119.3 363.0,115.5 360.7,111.1 358.3,106.2 356.0,100.8" fill="#043604" stroke="#00c000" stroke-width="0.35" fill-opacity="1"/><path d="M356.0,107.8L356.0,100.8M358.3,109.5L358.3,106.2M360.7,111.1L360.7,111.1M363.0,112.8L363.0,115.5M365.4,114.4L365.4,119.3M367.7,116.1L367.7,122.7M370.1,117.7L370.1,125.5M372.4,119.4L372.4,127.9M374.8,121.1L374.8,129.7M377.1,122.7L377.1,131.0M379.5,124.4L379.5,131.8M381.8,126.0L381.8,132.0M384.2,127.7L384.2,131.8M386.5,129.3L386.5,131.0M388.9,131.0L388.9,129.8M391.3,132.6L391.3,128.0M393.6,134.3L393.6,125.7M396.0,135.9L396.0,122.9" stroke="#00e400" stroke-width="0.42" fill="none"/><polygon points="353.8,110.9 393.8,139.0 398.1,132.9 358.1,104.8" fill="#ff0000"/><path d="M356.0,107.8L396.0,135.9" stroke="#ff5a4a" stroke-width="0.5"/><polygon points="453.1,117.1 455.4,118.7 457.7,120.3 460.0,121.9 462.3,123.4 464.5,125.0 466.8,126.6 469.1,128.2 471.4,129.7 473.7,131.3 475.9,132.9 478.2,134.5 480.5,136.0 482.8,137.6 485.1,139.2 487.4,140.8 489.6,142.3 491.9,143.9 494.2,145.5 494.2,132.5 491.9,135.4 489.6,137.8 487.4,139.7 485.1,141.0 482.8,141.9 480.5,142.1 478.2,141.9 475.9,141.1 473.7,139.8 471.4,138.0 469.1,135.6 466.8,132.7 464.5,129.3 462.3,125.3 460.0,120.8 457.7,115.8 455.4,110.2 453.1,104.1" fill="#043604" stroke="#00c000" stroke-width="0.35" fill-opacity="1"/><path d="M453.1,117.1L453.1,104.1M455.4,118.7L455.4,110.2M457.7,120.3L457.7,115.8M460.0,121.9L460.0,120.8M462.3,123.4L462.3,125.3M464.5,125.0L464.5,129.3M466.8,126.6L466.8,132.7M469.1,128.2L469.1,135.6M471.4,129.7L471.4,138.0M473.7,131.3L473.7,139.8M475.9,132.9L475.9,141.1M478.2,134.5L478.2,141.9M480.5,136.0L480.5,142.1M482.8,137.6L482.8,141.9M485.1,139.2L485.1,141.0M487.4,140.8L487.4,139.7M489.6,142.3L489.6,137.8M491.9,143.9L491.9,135.4M494.2,145.5L494.2,132.5" stroke="#00e400" stroke-width="0.42" fill="none"/><polygon points="451.0,120.2 492.1,148.6 496.3,142.4 455.3,114.1" fill="#ff0000"/><path d="M453.1,117.1L494.2,145.5" stroke="#ff5a4a" stroke-width="0.5"/><polygon points="298.6,126.5 300.9,125.7 303.2,125.0 305.5,124.2 307.8,123.5 310.1,122.8 312.4,122.0 314.7,121.3 317.0,120.5 319.3,119.8 321.6,119.0 323.9,118.3 326.2,117.5 328.5,116.8 330.7,116.0 333.0,115.3 335.3,114.5 337.6,113.8 339.9,113.0 342.2,112.3 344.5,111.6 346.8,110.8 349.1,110.1 351.4,109.3 353.7,108.6 356.0,107.8 356.0,104.8 353.7,106.2 351.4,107.5 349.1,108.7 346.8,109.9 344.5,111.1 342.2,112.2 339.9,113.3 337.6,114.3 335.3,115.3 333.0,116.2 330.7,117.1 328.5,117.9 326.2,118.8 323.9,119.5 321.6,120.2 319.3,120.9 317.0,121.5 314.7,122.1 312.4,122.7 310.1,123.2 307.8,123.6 305.5,124.0 303.2,124.4 300.9,124.7 298.6,125.0" fill="#043604" stroke="#00c000" stroke-width="0.35" fill-opacity="1"/><polygon points="299.8,130.0 357.1,111.3 354.8,104.3 297.5,123.0" fill="#ff0000"/><path d="M298.6,126.5L356.0,107.8" stroke="#ff5a4a" stroke-width="0.5"/><polygon points="396.0,135.9 398.2,135.2 400.5,134.4 402.8,133.7 405.1,132.9 407.4,132.2 409.7,131.4 412.0,130.7 414.3,129.9 416.5,129.2 418.8,128.4 421.1,127.7 423.4,126.9 425.7,126.2 428.0,125.4 430.3,124.7 432.5,123.9 434.8,123.2 437.1,122.4 439.4,121.6 441.7,120.9 444.0,120.1 446.3,119.4 448.6,118.6 450.8,117.9 453.1,117.1 453.1,115.6 450.8,116.9 448.6,118.0 446.3,119.2 444.0,120.3 441.7,121.3 439.4,122.3 437.1,123.3 434.8,124.2 432.5,125.0 430.3,125.9 428.0,126.6 425.7,127.4 423.4,128.1 421.1,128.7 418.8,129.3 416.5,129.9 414.3,130.4 412.0,130.9 409.7,131.3 407.4,131.7 405.1,132.0 402.8,132.3 400.5,132.6 398.2,132.8 396.0,132.9" fill="#043604" stroke="#00c000" stroke-width="0.35" fill-opacity="1"/><polygon points="400.4,141.0 450.8,124.5 448.6,118.0 398.3,134.6" fill="#00ff00"/><path d="M399.4,137.8L449.7,121.3" stroke="#7dff6a" stroke-width="0.5"/><rect x="295.9" y="126.5" width="5.4" height="39.0" fill="#0000ff"/><rect x="298.1" y="126.5" width="1" height="39.0" fill="#2b3cff"/><rect x="393.3" y="135.9" width="5.4" height="38.8" fill="#0000ff"/><rect x="395.5" y="135.9" width="1" height="38.8" fill="#2b3cff"/><rect x="491.5" y="145.5" width="5.4" height="38.7" fill="#0000ff"/><rect x="493.7" y="145.5" width="1" height="38.7" fill="#2b3cff"/><polygon points="298.6,165.5 301.0,167.2 303.3,168.8 305.6,170.5 308.0,172.2 310.3,173.8 312.6,175.5 315.0,177.2 317.3,178.9 319.6,180.5 322.0,182.2 324.3,183.9 326.6,185.5 329.0,187.2 331.3,188.9 333.6,190.6 335.9,192.2 338.3,193.9 338.3,180.9 335.9,183.7 333.6,185.9 331.3,187.7 329.0,188.9 326.6,189.7 324.3,189.9 322.0,189.6 319.6,188.8 317.3,187.5 315.0,185.6 312.6,183.3 310.3,180.4 308.0,177.1 305.6,173.2 303.3,168.8 301.0,163.9 298.6,158.5" fill="#043604" stroke="#00c000" stroke-width="0.35" fill-opacity="1"/><path d="M298.6,165.5L298.6,158.5M301.0,167.2L301.0,163.9M303.3,168.8L303.3,168.8M305.6,170.5L305.6,173.2M308.0,172.2L308.0,177.1M310.3,173.8L310.3,180.4M312.6,175.5L312.6,183.3M315.0,177.2L315.0,185.6M317.3,178.9L317.3,187.5M319.6,180.5L319.6,188.8M322.0,182.2L322.0,189.6M324.3,183.9L324.3,189.9M326.6,185.5L326.6,189.7M329.0,187.2L329.0,188.9M331.3,188.9L331.3,187.7M333.6,190.6L333.6,185.9M335.9,192.2L335.9,183.7M338.3,193.9L338.3,180.9" stroke="#00e400" stroke-width="0.42" fill="none"/><polygon points="296.5,168.5 336.1,197.0 340.5,190.9 300.8,162.4" fill="#ff0000"/><path d="M298.6,165.5L338.3,193.9" stroke="#ff5a4a" stroke-width="0.5"/><polygon points="396.0,174.7 398.2,176.3 400.5,177.9 402.7,179.5 405.0,181.1 407.3,182.7 409.5,184.3 411.8,185.9 414.1,187.5 416.3,189.1 418.6,190.7 420.9,192.2 423.1,193.8 425.4,195.4 427.6,197.0 429.9,198.6 432.2,200.2 434.4,201.8 436.7,203.4 436.7,190.4 434.4,193.3 432.2,195.7 429.9,197.6 427.6,198.9 425.4,199.7 423.1,200.0 420.9,199.7 418.6,198.9 416.3,197.6 414.1,195.7 411.8,193.3 409.5,190.4 407.3,186.9 405.0,182.9 402.7,178.4 400.5,173.4 398.2,167.8 396.0,161.7" fill="#043604" stroke="#00c000" stroke-width="0.35" fill-opacity="1"/><path d="M396.0,174.7L396.0,161.7M398.2,176.3L398.2,167.8M400.5,177.9L400.5,173.4M402.7,179.5L402.7,178.4M405.0,181.1L405.0,182.9M407.3,182.7L407.3,186.9M409.5,184.3L409.5,190.4M411.8,185.9L411.8,193.3M414.1,187.5L414.1,195.7M416.3,189.1L416.3,197.6M418.6,190.7L418.6,198.9M420.9,192.2L420.9,199.7M423.1,193.8L423.1,200.0M425.4,195.4L425.4,199.7M427.6,197.0L427.6,198.9M429.9,198.6L429.9,197.6M432.2,200.2L432.2,195.7M434.4,201.8L434.4,193.3M436.7,203.4L436.7,190.4" stroke="#00e400" stroke-width="0.42" fill="none"/><polygon points="393.8,177.8 434.5,206.5 438.9,200.3 398.1,171.6" fill="#ff0000"/><path d="M396.0,174.7L436.7,203.4" stroke="#ff5a4a" stroke-width="0.5"/><polygon points="494.2,184.1 496.5,185.8 498.9,187.4 501.2,189.0 503.5,190.6 505.8,192.2 508.2,193.8 510.5,195.4 512.8,197.0 515.1,198.6 517.5,200.3 519.8,201.9 522.1,203.5 524.4,205.1 526.8,206.7 529.1,208.3 531.4,209.9 533.7,211.5 536.1,213.1 536.1,206.1 533.7,208.1 531.4,209.6 529.1,210.6 526.8,211.2 524.4,211.3 522.1,210.9 519.8,210.1 517.5,208.9 515.1,207.1 512.8,205.0 510.5,202.3 508.2,199.3 505.8,195.7 503.5,191.7 501.2,187.3 498.9,182.3 496.5,177.0 494.2,171.1" fill="#043604" stroke="#00c000" stroke-width="0.35" fill-opacity="1"/><path d="M494.2,184.1L494.2,171.1M496.5,185.8L496.5,177.0M498.9,187.4L498.9,182.3M501.2,189.0L501.2,187.3M503.5,190.6L503.5,191.7M505.8,192.2L505.8,195.7M508.2,193.8L508.2,199.3M510.5,195.4L510.5,202.3M512.8,197.0L512.8,205.0M515.1,198.6L515.1,207.1M517.5,200.3L517.5,208.9M519.8,201.9L519.8,210.1M522.1,203.5L522.1,210.9M524.4,205.1L524.4,211.3M526.8,206.7L526.8,211.2M529.1,208.3L529.1,210.6M531.4,209.9L531.4,209.6M533.7,211.5L533.7,208.1M536.1,213.1L536.1,206.1" stroke="#00e400" stroke-width="0.42" fill="none"/><polygon points="492.1,187.2 533.9,216.2 538.2,210.1 496.3,181.1" fill="#ff0000"/><path d="M494.2,184.1L536.1,213.1" stroke="#ff5a4a" stroke-width="0.5"/><polygon points="338.3,193.9 340.6,193.1 342.9,192.4 345.2,191.6 347.5,190.8 349.8,190.1 352.1,189.3 354.4,188.5 356.7,187.8 359.0,187.0 361.3,186.2 363.7,185.5 366.0,184.7 368.3,183.9 370.6,183.2 372.9,182.4 375.2,181.6 377.5,180.8 379.8,180.1 382.1,179.3 384.4,178.5 386.7,177.8 389.0,177.0 391.3,176.2 393.6,175.5 396.0,174.7 396.0,171.7 393.6,173.1 391.3,174.4 389.0,175.6 386.7,176.9 384.4,178.1 382.1,179.2 379.8,180.3 377.5,181.3 375.2,182.3 372.9,183.3 370.6,184.2 368.3,185.1 366.0,185.9 363.7,186.7 361.3,187.4 359.0,188.1 356.7,188.8 354.4,189.4 352.1,190.0 349.8,190.5 347.5,190.9 345.2,191.4 342.9,191.8 340.6,192.1 338.3,192.4" fill="#043604" stroke="#00c000" stroke-width="0.35" fill-opacity="1"/><polygon points="342.8,199.0 393.6,182.1 391.5,175.6 340.6,192.5" fill="#00ff00"/><path d="M341.7,195.8L392.5,178.8" stroke="#7dff6a" stroke-width="0.5"/><polygon points="436.7,203.4 439.0,202.6 441.3,201.9 443.6,201.1 445.9,200.3 448.2,199.6 450.5,198.8 452.8,198.0 455.1,197.2 457.4,196.5 459.7,195.7 462.0,194.9 464.3,194.2 466.6,193.4 468.9,192.6 471.2,191.8 473.5,191.1 475.8,190.3 478.1,189.5 480.4,188.8 482.7,188.0 485.0,187.2 487.3,186.5 489.6,185.7 491.9,184.9 494.2,184.1 494.2,182.6 491.9,183.9 489.6,185.1 487.3,186.2 485.0,187.3 482.7,188.4 480.4,189.4 478.1,190.4 475.8,191.3 473.5,192.2 471.2,193.1 468.9,193.9 466.6,194.6 464.3,195.3 462.0,196.0 459.7,196.6 457.4,197.2 455.1,197.7 452.8,198.2 450.5,198.7 448.2,199.1 445.9,199.4 443.6,199.7 441.3,200.0 439.0,200.2 436.7,200.4" fill="#043604" stroke="#00c000" stroke-width="0.35" fill-opacity="1"/><polygon points="441.2,208.5 491.9,191.5 489.7,185.1 439.0,202.0" fill="#00ff00"/><path d="M440.1,205.3L490.8,188.3" stroke="#7dff6a" stroke-width="0.5"/><rect x="335.6" y="193.9" width="5.4" height="37.8" fill="#0000ff"/><rect x="337.8" y="193.9" width="1" height="37.8" fill="#2b3cff"/><ellipse cx="338.3" cy="231.7" rx="2.7" ry="1.1" fill="#0000ff"/><rect x="434.0" y="203.4" width="5.4" height="36.5" fill="#0000ff"/><rect x="436.2" y="203.4" width="1" height="36.5" fill="#2b3cff"/><ellipse cx="436.7" cy="239.9" rx="2.7" ry="1.1" fill="#0000ff"/><rect x="533.4" y="213.1" width="5.4" height="35.4" fill="#0000ff"/><rect x="535.6" y="213.1" width="1" height="35.4" fill="#2b3cff"/><ellipse cx="536.1" cy="248.5" rx="2.7" ry="1.1" fill="#0000ff"/><polygon points="298.6,126.5 301.0,128.2 303.3,129.8 305.6,131.5 308.0,133.2 310.3,134.8 312.6,136.5 315.0,138.2 317.3,139.9 319.6,141.5 322.0,143.2 324.3,144.9 326.6,146.5 329.0,148.2 331.3,149.9 333.6,151.6 335.9,153.2 338.3,154.9 338.3,141.9 335.9,144.7 333.6,146.9 331.3,148.7 329.0,149.9 326.6,150.7 324.3,150.9 322.0,150.6 319.6,149.8 317.3,148.5 315.0,146.6 312.6,144.3 310.3,141.4 308.0,138.1 305.6,134.2 303.3,129.8 301.0,124.9 298.6,119.5" fill="#043604" stroke="#00c000" stroke-width="0.35" fill-opacity="1"/><path d="M298.6,126.5L298.6,119.5M301.0,128.2L301.0,124.9M303.3,129.8L303.3,129.8M305.6,131.5L305.6,134.2M308.0,133.2L308.0,138.1M310.3,134.8L310.3,141.4M312.6,136.5L312.6,144.3M315.0,138.2L315.0,146.6M317.3,139.9L317.3,148.5M319.6,141.5L319.6,149.8M322.0,143.2L322.0,150.6M324.3,144.9L324.3,150.9M326.6,146.5L326.6,150.7M329.0,148.2L329.0,149.9M331.3,149.9L331.3,148.7M333.6,151.6L333.6,146.9M335.9,153.2L335.9,144.7M338.3,154.9L338.3,141.9" stroke="#00e400" stroke-width="0.42" fill="none"/><polygon points="296.5,129.5 336.1,158.0 340.5,151.9 300.8,123.4" fill="#ff0000"/><path d="M298.6,126.5L338.3,154.9" stroke="#ff5a4a" stroke-width="0.5"/><polygon points="396.0,135.9 398.2,137.5 400.5,139.1 402.7,140.7 405.0,142.3 407.3,143.9 409.5,145.5 411.8,147.1 414.1,148.7 416.3,150.3 418.6,151.8 420.9,153.4 423.1,155.0 425.4,156.6 427.6,158.2 429.9,159.8 432.2,161.4 434.4,163.0 436.7,164.6 436.7,151.6 434.4,154.5 432.2,156.9 429.9,158.7 427.6,160.1 425.4,160.9 423.1,161.1 420.9,160.9 418.6,160.1 416.3,158.8 414.1,156.9 411.8,154.5 409.5,151.6 407.3,148.1 405.0,144.2 402.7,139.7 400.5,134.6 398.2,129.0 396.0,122.9" fill="#043604" stroke="#00c000" stroke-width="0.35" fill-opacity="1"/><path d="M396.0,135.9L396.0,122.9M398.2,137.5L398.2,129.0M400.5,139.1L400.5,134.6M402.7,140.7L402.7,139.7M405.0,142.3L405.0,144.2M407.3,143.9L407.3,148.1M409.5,145.5L409.5,151.6M411.8,147.1L411.8,154.5M414.1,148.7L414.1,156.9M416.3,150.3L416.3,158.8M418.6,151.8L418.6,160.1M420.9,153.4L420.9,160.9M423.1,155.0L423.1,161.1M425.4,156.6L425.4,160.9M427.6,158.2L427.6,160.1M429.9,159.8L429.9,158.7M432.2,161.4L432.2,156.9M434.4,163.0L434.4,154.5M436.7,164.6L436.7,151.6" stroke="#00e400" stroke-width="0.42" fill="none"/><polygon points="393.8,139.0 434.5,167.6 438.8,161.5 398.1,132.9" fill="#ff0000"/><path d="M396.0,135.9L436.7,164.6" stroke="#ff5a4a" stroke-width="0.5"/><polygon points="494.2,145.5 496.5,147.1 498.9,148.7 501.2,150.3 503.5,151.9 505.8,153.5 508.2,155.1 510.5,156.7 512.8,158.3 515.1,159.9 517.5,161.5 519.8,163.1 522.1,164.7 524.4,166.3 526.8,167.9 529.1,169.5 531.4,171.1 533.7,172.7 536.1,174.3 536.1,167.3 533.7,169.3 531.4,170.8 529.1,171.8 526.8,172.4 524.4,172.5 522.1,172.2 519.8,171.4 517.5,170.1 515.1,168.4 512.8,166.2 510.5,163.6 508.2,160.5 505.8,157.0 503.5,153.0 501.2,148.6 498.9,143.7 496.5,138.3 494.2,132.5" fill="#043604" stroke="#00c000" stroke-width="0.35" fill-opacity="1"/><path d="M494.2,145.5L494.2,132.5M496.5,147.1L496.5,138.3M498.9,148.7L498.9,143.7M501.2,150.3L501.2,148.6M503.5,151.9L503.5,153.0M505.8,153.5L505.8,157.0M508.2,155.1L508.2,160.5M510.5,156.7L510.5,163.6M512.8,158.3L512.8,166.2M515.1,159.9L515.1,168.4M517.5,161.5L517.5,170.1M519.8,163.1L519.8,171.4M522.1,164.7L522.1,172.2M524.4,166.3L524.4,172.5M526.8,167.9L526.8,172.4M529.1,169.5L529.1,171.8M531.4,171.1L531.4,170.8M533.7,172.7L533.7,169.3M536.1,174.3L536.1,167.3" stroke="#00e400" stroke-width="0.42" fill="none"/><polygon points="492.1,148.6 533.9,177.4 538.2,171.3 496.3,142.4" fill="#ff0000"/><path d="M494.2,145.5L536.1,174.3" stroke="#ff5a4a" stroke-width="0.5"/><polygon points="338.3,154.9 340.6,154.1 342.9,153.4 345.2,152.6 347.5,151.9 349.8,151.1 352.1,150.4 354.4,149.6 356.7,148.8 359.0,148.1 361.3,147.3 363.7,146.6 366.0,145.8 368.3,145.0 370.6,144.3 372.9,143.5 375.2,142.8 377.5,142.0 379.8,141.2 382.1,140.5 384.4,139.7 386.7,139.0 389.0,138.2 391.3,137.5 393.6,136.7 396.0,135.9 396.0,132.9 393.6,134.3 391.3,135.6 389.0,136.8 386.7,138.1 384.4,139.2 382.1,140.4 379.8,141.4 377.5,142.5 375.2,143.5 372.9,144.4 370.6,145.3 368.3,146.2 366.0,147.0 363.7,147.8 361.3,148.5 359.0,149.2 356.7,149.9 354.4,150.5 352.1,151.0 349.8,151.5 347.5,152.0 345.2,152.4 342.9,152.8 340.6,153.1 338.3,153.4" fill="#043604" stroke="#00c000" stroke-width="0.35" fill-opacity="1"/><polygon points="342.8,160.0 393.6,143.3 391.5,136.8 340.6,153.5" fill="#00ff00"/><path d="M341.7,156.8L392.5,140.1" stroke="#7dff6a" stroke-width="0.5"/><polygon points="436.7,164.6 439.0,163.8 441.3,163.0 443.6,162.3 445.9,161.5 448.2,160.8 450.5,160.0 452.8,159.2 455.1,158.5 457.4,157.7 459.7,156.9 462.0,156.2 464.3,155.4 466.6,154.6 468.9,153.9 471.2,153.1 473.5,152.4 475.8,151.6 478.1,150.8 480.4,150.1 482.7,149.3 485.0,148.5 487.3,147.8 489.6,147.0 491.9,146.2 494.2,145.5 494.2,144.0 491.9,145.2 489.6,146.4 487.3,147.5 485.0,148.6 482.7,149.7 480.4,150.7 478.1,151.7 475.8,152.6 473.5,153.5 471.2,154.3 468.9,155.1 466.6,155.9 464.3,156.6 462.0,157.2 459.7,157.8 457.4,158.4 455.1,158.9 452.8,159.4 450.5,159.9 448.2,160.3 445.9,160.6 443.6,160.9 441.3,161.2 439.0,161.4 436.7,161.6" fill="#043604" stroke="#00c000" stroke-width="0.35" fill-opacity="1"/><polygon points="441.2,169.7 491.9,152.8 489.7,146.4 439.0,163.2" fill="#00ff00"/><path d="M440.1,166.4L490.8,149.6" stroke="#7dff6a" stroke-width="0.5"/><rect x="335.6" y="154.9" width="5.4" height="39.0" fill="#0000ff"/><rect x="337.8" y="154.9" width="1" height="39.0" fill="#2b3cff"/><rect x="434.0" y="164.6" width="5.4" height="38.8" fill="#0000ff"/><rect x="436.2" y="164.6" width="1" height="38.8" fill="#2b3cff"/><rect x="533.4" y="174.3" width="5.4" height="38.8" fill="#0000ff"/><rect x="535.6" y="174.3" width="1" height="38.8" fill="#2b3cff"/><polygon points="338.3,193.9 340.5,195.5 342.8,197.1 345.0,198.7 347.2,200.3 349.5,201.9 351.7,203.6 354.0,205.2 356.2,206.8 358.5,208.4 360.7,210.0 362.9,211.6 365.2,213.2 367.4,214.8 369.7,216.4 371.9,218.0 374.2,219.6 376.4,221.2 378.7,222.9 378.7,209.9 376.4,212.8 374.2,215.1 371.9,217.0 369.7,218.3 367.4,219.1 365.2,219.3 362.9,219.0 360.7,218.2 358.5,216.9 356.2,215.0 354.0,212.6 351.7,209.7 349.5,206.2 347.2,202.2 345.0,197.7 342.8,192.6 340.5,187.0 338.3,180.9" fill="#043604" stroke="#00c000" stroke-width="0.35" fill-opacity="1"/><path d="M338.3,193.9L338.3,180.9M340.5,195.5L340.5,187.0M342.8,197.1L342.8,192.6M345.0,198.7L345.0,197.7M347.2,200.3L347.2,202.2M349.5,201.9L349.5,206.2M351.7,203.6L351.7,209.7M354.0,205.2L354.0,212.6M356.2,206.8L356.2,215.0M358.5,208.4L358.5,216.9M360.7,210.0L360.7,218.2M362.9,211.6L362.9,219.0M365.2,213.2L365.2,219.3M367.4,214.8L367.4,219.1M369.7,216.4L369.7,218.3M371.9,218.0L371.9,217.0M374.2,219.6L374.2,215.1M376.4,221.2L376.4,212.8M378.7,222.9L378.7,209.9" stroke="#00e400" stroke-width="0.42" fill="none"/><polygon points="336.1,197.0 376.5,225.9 380.8,219.8 340.5,190.9" fill="#ff0000"/><path d="M338.3,193.9L378.7,222.9" stroke="#ff5a4a" stroke-width="0.5"/><polygon points="436.7,203.4 439.0,205.0 441.3,206.7 443.6,208.3 445.9,209.9 448.2,211.5 450.5,213.2 452.8,214.8 455.1,216.4 457.4,218.0 459.8,219.7 462.1,221.3 464.4,222.9 466.7,224.5 469.0,226.2 471.3,227.8 473.6,229.4 475.9,231.0 478.2,232.7 478.2,225.7 475.9,227.6 473.6,229.1 471.3,230.1 469.0,230.6 466.7,230.7 464.4,230.4 462.1,229.5 459.8,228.3 457.4,226.5 455.1,224.3 452.8,221.7 450.5,218.6 448.2,215.0 445.9,211.0 443.6,206.6 441.3,201.6 439.0,196.3 436.7,190.4" fill="#043604" stroke="#00c000" stroke-width="0.35" fill-opacity="1"/><path d="M436.7,203.4L436.7,190.4M439.0,205.0L439.0,196.3M441.3,206.7L441.3,201.6M443.6,208.3L443.6,206.6M445.9,209.9L445.9,211.0M448.2,211.5L448.2,215.0M450.5,213.2L450.5,218.6M452.8,214.8L452.8,221.7M455.1,216.4L455.1,224.3M457.4,218.0L457.4,226.5M459.8,219.7L459.8,228.3M462.1,221.3L462.1,229.5M464.4,222.9L464.4,230.4M466.7,224.5L466.7,230.7M469.0,226.2L469.0,230.6M471.3,227.8L471.3,230.1M473.6,229.4L473.6,229.1M475.9,231.0L475.9,227.6M478.2,232.7L478.2,225.7" stroke="#00e400" stroke-width="0.42" fill="none"/><polygon points="434.5,206.5 476.0,235.7 480.4,229.6 438.9,200.3" fill="#ff0000"/><path d="M436.7,203.4L478.2,232.7" stroke="#ff5a4a" stroke-width="0.5"/><polygon points="378.7,222.9 381.0,222.1 383.3,221.3 385.6,220.5 387.9,219.7 390.3,219.0 392.6,218.2 394.9,217.4 397.2,216.6 399.5,215.9 401.9,215.1 404.2,214.3 406.5,213.5 408.8,212.7 411.2,212.0 413.5,211.2 415.8,210.4 418.1,209.6 420.4,208.9 422.8,208.1 425.1,207.3 427.4,206.5 429.7,205.7 432.0,205.0 434.4,204.2 436.7,203.4 436.7,200.4 434.4,201.8 432.0,203.1 429.7,204.4 427.4,205.6 425.1,206.8 422.8,208.0 420.4,209.1 418.1,210.1 415.8,211.1 413.5,212.1 411.2,213.0 408.8,213.9 406.5,214.7 404.2,215.5 401.9,216.3 399.5,217.0 397.2,217.7 394.9,218.3 392.6,218.8 390.3,219.4 387.9,219.9 385.6,220.3 383.3,220.7 381.0,221.0 378.7,221.4" fill="#043604" stroke="#00c000" stroke-width="0.35" fill-opacity="1"/><polygon points="383.1,227.9 434.4,210.8 432.2,204.3 381.0,221.5" fill="#00ff00"/><path d="M382.1,224.7L433.3,207.6" stroke="#7dff6a" stroke-width="0.5"/><polygon points="478.2,232.7 480.5,231.9 482.8,231.1 485.1,230.3 487.5,229.5 489.8,228.8 492.1,228.0 494.4,227.2 496.7,226.4 499.0,225.6 501.4,224.9 503.7,224.1 506.0,223.3 508.3,222.5 510.6,221.7 512.9,221.0 515.2,220.2 517.6,219.4 519.9,218.6 522.2,217.8 524.5,217.0 526.8,216.3 529.1,215.5 531.4,214.7 533.8,213.9 536.1,213.1 536.1,211.6 533.8,212.9 531.4,214.1 529.1,215.3 526.8,216.4 524.5,217.5 522.2,218.5 519.9,219.5 517.6,220.4 515.2,221.3 512.9,222.2 510.6,223.0 508.3,223.7 506.0,224.5 503.7,225.1 501.4,225.8 499.0,226.4 496.7,226.9 494.4,227.4 492.1,227.9 489.8,228.3 487.5,228.6 485.1,229.0 482.8,229.2 480.5,229.5 478.2,229.7" fill="#043604" stroke="#00c000" stroke-width="0.35" fill-opacity="1"/><polygon points="479.4,236.2 537.3,216.7 534.9,209.6 477.0,229.2" fill="#ff0000"/><path d="M478.2,232.7L536.1,213.1" stroke="#ff5a4a" stroke-width="0.5"/><rect x="376.0" y="222.9" width="5.4" height="38.0" fill="#0000ff"/><rect x="378.2" y="222.9" width="1" height="38.0" fill="#2b3cff"/><ellipse cx="378.7" cy="260.9" rx="2.7" ry="1.1" fill="#0000ff"/><rect x="475.5" y="232.7" width="5.4" height="36.8" fill="#0000ff"/><rect x="477.7" y="232.7" width="1" height="36.8" fill="#2b3cff"/><ellipse cx="478.2" cy="269.5" rx="2.7" ry="1.1" fill="#0000ff"/><polygon points="338.3,154.9 340.5,156.5 342.8,158.1 345.0,159.7 347.2,161.3 349.5,162.9 351.7,164.6 354.0,166.2 356.2,167.8 358.5,169.4 360.7,171.0 362.9,172.6 365.2,174.2 367.4,175.8 369.7,177.4 371.9,179.0 374.2,180.6 376.4,182.2 378.7,183.9 378.7,170.9 376.4,173.8 374.2,176.1 371.9,178.0 369.7,179.3 367.4,180.1 365.2,180.3 362.9,180.0 360.7,179.2 358.5,177.9 356.2,176.0 354.0,173.6 351.7,170.7 349.5,167.2 347.2,163.2 345.0,158.7 342.8,153.6 340.5,148.0 338.3,141.9" fill="#043604" stroke="#00c000" stroke-width="0.35" fill-opacity="1"/><path d="M338.3,154.9L338.3,141.9M340.5,156.5L340.5,148.0M342.8,158.1L342.8,153.6M345.0,159.7L345.0,158.7M347.2,161.3L347.2,163.2M349.5,162.9L349.5,167.2M351.7,164.6L351.7,170.7M354.0,166.2L354.0,173.6M356.2,167.8L356.2,176.0M358.5,169.4L358.5,177.9M360.7,171.0L360.7,179.2M362.9,172.6L362.9,180.0M365.2,174.2L365.2,180.3M367.4,175.8L367.4,180.1M369.7,177.4L369.7,179.3M371.9,179.0L371.9,178.0M374.2,180.6L374.2,176.1M376.4,182.2L376.4,173.8M378.7,183.9L378.7,170.9" stroke="#00e400" stroke-width="0.42" fill="none"/><polygon points="336.1,158.0 376.5,186.9 380.8,180.8 340.5,151.9" fill="#ff0000"/><path d="M338.3,154.9L378.7,183.9" stroke="#ff5a4a" stroke-width="0.5"/><polygon points="436.7,164.6 439.0,166.2 441.3,167.8 443.6,169.4 445.9,171.1 448.2,172.7 450.5,174.3 452.8,175.9 455.1,177.5 457.4,179.2 459.8,180.8 462.1,182.4 464.4,184.0 466.7,185.7 469.0,187.3 471.3,188.9 473.6,190.5 475.9,192.1 478.2,193.8 478.2,186.8 475.9,188.7 473.6,190.2 471.3,191.2 469.0,191.7 466.7,191.8 464.4,191.5 462.1,190.7 459.8,189.4 457.4,187.7 455.1,185.5 452.8,182.8 450.5,179.8 448.2,176.2 445.9,172.2 443.6,167.7 441.3,162.8 439.0,157.4 436.7,151.6" fill="#043604" stroke="#00c000" stroke-width="0.35" fill-opacity="1"/><path d="M436.7,164.6L436.7,151.6M439.0,166.2L439.0,157.4M441.3,167.8L441.3,162.8M443.6,169.4L443.6,167.7M445.9,171.1L445.9,172.2M448.2,172.7L448.2,176.2M450.5,174.3L450.5,179.8M452.8,175.9L452.8,182.8M455.1,177.5L455.1,185.5M457.4,179.2L457.4,187.7M459.8,180.8L459.8,189.4M462.1,182.4L462.1,190.7M464.4,184.0L464.4,191.5M466.7,185.7L466.7,191.8M469.0,187.3L469.0,191.7M471.3,188.9L471.3,191.2M473.6,190.5L473.6,190.2M475.9,192.1L475.9,188.7M478.2,193.8L478.2,186.8" stroke="#00e400" stroke-width="0.42" fill="none"/><polygon points="434.5,167.6 476.0,196.8 480.4,190.7 438.8,161.5" fill="#ff0000"/><path d="M436.7,164.6L478.2,193.8" stroke="#ff5a4a" stroke-width="0.5"/><polygon points="378.7,183.9 381.0,183.1 383.3,182.3 385.6,181.5 387.9,180.8 390.3,180.0 392.6,179.2 394.9,178.5 397.2,177.7 399.5,176.9 401.9,176.1 404.2,175.4 406.5,174.6 408.8,173.8 411.2,173.1 413.5,172.3 415.8,171.5 418.1,170.7 420.4,170.0 422.8,169.2 425.1,168.4 427.4,167.7 429.7,166.9 432.0,166.1 434.4,165.3 436.7,164.6 436.7,161.6 434.4,162.9 432.0,164.3 429.7,165.5 427.4,166.8 425.1,167.9 422.8,169.1 420.4,170.2 418.1,171.2 415.8,172.2 413.5,173.2 411.2,174.1 408.8,175.0 406.5,175.8 404.2,176.6 401.9,177.4 399.5,178.1 397.2,178.7 394.9,179.3 392.6,179.9 390.3,180.4 387.9,180.9 385.6,181.3 383.3,181.7 381.0,182.1 378.7,182.4" fill="#043604" stroke="#00c000" stroke-width="0.35" fill-opacity="1"/><polygon points="383.1,188.9 434.3,171.9 432.2,165.5 381.0,182.5" fill="#00ff00"/><path d="M382.1,185.7L433.3,168.7" stroke="#7dff6a" stroke-width="0.5"/><polygon points="478.2,193.8 480.5,193.0 482.8,192.2 485.1,191.4 487.5,190.7 489.8,189.9 492.1,189.1 494.4,188.3 496.7,187.5 499.0,186.8 501.4,186.0 503.7,185.2 506.0,184.4 508.3,183.7 510.6,182.9 512.9,182.1 515.2,181.3 517.6,180.6 519.9,179.8 522.2,179.0 524.5,178.2 526.8,177.5 529.1,176.7 531.4,175.9 533.8,175.1 536.1,174.3 536.1,172.8 533.8,174.1 531.4,175.3 529.1,176.5 526.8,177.6 524.5,178.6 522.2,179.7 519.9,180.6 517.6,181.6 515.2,182.5 512.9,183.3 510.6,184.1 508.3,184.9 506.0,185.6 503.7,186.3 501.4,186.9 499.0,187.5 496.7,188.0 494.4,188.5 492.1,189.0 489.8,189.4 487.5,189.8 485.1,190.1 482.8,190.3 480.5,190.6 478.2,190.8" fill="#043604" stroke="#00c000" stroke-width="0.35" fill-opacity="1"/><polygon points="479.4,197.3 537.3,177.9 534.9,170.8 477.0,190.3" fill="#ff0000"/><path d="M478.2,193.8L536.1,174.3" stroke="#ff5a4a" stroke-width="0.5"/><rect x="376.0" y="183.9" width="5.4" height="39.0" fill="#0000ff"/><rect x="378.2" y="183.9" width="1" height="39.0" fill="#2b3cff"/><rect x="475.5" y="193.8" width="5.4" height="38.9" fill="#0000ff"/><rect x="477.7" y="193.8" width="1" height="38.9" fill="#2b3cff"/><polygon points="378.7,222.9 380.9,224.5 383.2,226.1 385.5,227.8 387.8,229.4 390.1,231.0 392.4,232.7 394.7,234.3 396.9,236.0 399.2,237.6 401.5,239.2 403.8,240.9 406.1,242.5 408.4,244.2 410.7,245.8 412.9,247.4 415.2,249.1 417.5,250.7 419.8,252.4 419.8,245.4 417.5,247.3 415.2,248.7 412.9,249.7 410.7,250.3 408.4,250.3 406.1,250.0 403.8,249.1 401.5,247.8 399.2,246.1 396.9,243.9 394.7,241.2 392.4,238.1 390.1,234.6 387.8,230.5 385.5,226.0 383.2,221.1 380.9,215.7 378.7,209.9" fill="#043604" stroke="#00c000" stroke-width="0.35" fill-opacity="1"/><path d="M378.7,222.9L378.7,209.9M380.9,224.5L380.9,215.7M383.2,226.1L383.2,221.1M385.5,227.8L385.5,226.0M387.8,229.4L387.8,230.5M390.1,231.0L390.1,234.6M392.4,232.7L392.4,238.1M394.7,234.3L394.7,241.2M396.9,236.0L396.9,243.9M399.2,237.6L399.2,246.1M401.5,239.2L401.5,247.8M403.8,240.9L403.8,249.1M406.1,242.5L406.1,250.0M408.4,244.2L408.4,250.3M410.7,245.8L410.7,250.3M412.9,247.4L412.9,249.7M415.2,249.1L415.2,248.7M417.5,250.7L417.5,247.3M419.8,252.4L419.8,245.4" stroke="#00e400" stroke-width="0.42" fill="none"/><polygon points="376.5,225.9 417.6,255.4 422.0,249.3 380.8,219.8" fill="#ff0000"/><path d="M378.7,222.9L419.8,252.4" stroke="#ff5a4a" stroke-width="0.5"/><polygon points="419.8,252.4 422.1,251.6 424.5,250.8 426.8,250.0 429.1,249.2 431.5,248.4 433.8,247.6 436.2,246.8 438.5,246.1 440.8,245.3 443.2,244.5 445.5,243.7 447.8,242.9 450.2,242.1 452.5,241.3 454.8,240.5 457.2,239.8 459.5,239.0 461.8,238.2 464.2,237.4 466.5,236.6 468.9,235.8 471.2,235.0 473.5,234.2 475.9,233.4 478.2,232.7 478.2,229.7 475.9,231.0 473.5,232.4 471.2,233.7 468.9,234.9 466.5,236.1 464.2,237.3 461.8,238.4 459.5,239.4 457.2,240.5 454.8,241.5 452.5,242.4 450.2,243.3 447.8,244.1 445.5,244.9 443.2,245.7 440.8,246.4 438.5,247.1 436.2,247.7 433.8,248.3 431.5,248.8 429.1,249.3 426.8,249.8 424.5,250.2 422.1,250.5 419.8,250.9" fill="#043604" stroke="#00c000" stroke-width="0.35" fill-opacity="1"/><polygon points="421.0,255.9 479.4,236.2 477.0,229.2 418.6,248.9" fill="#ff0000"/><path d="M419.8,252.4L478.2,232.7" stroke="#ff5a4a" stroke-width="0.5"/><rect x="417.1" y="252.4" width="5.4" height="38.2" fill="#0000ff"/><rect x="419.3" y="252.4" width="1" height="38.2" fill="#2b3cff"/><ellipse cx="419.8" cy="290.6" rx="2.7" ry="1.1" fill="#0000ff"/><polygon points="378.7,183.9 380.9,185.5 383.2,187.1 385.5,188.8 387.8,190.4 390.1,192.0 392.4,193.7 394.7,195.3 396.9,197.0 399.2,198.6 401.5,200.2 403.8,201.9 406.1,203.5 408.4,205.2 410.7,206.8 412.9,208.4 415.2,210.1 417.5,211.7 419.8,213.4 419.8,206.4 417.5,208.3 415.2,209.7 412.9,210.7 410.7,211.3 408.4,211.3 406.1,211.0 403.8,210.1 401.5,208.8 399.2,207.1 396.9,204.9 394.7,202.2 392.4,199.1 390.1,195.6 387.8,191.5 385.5,187.0 383.2,182.1 380.9,176.7 378.7,170.9" fill="#043604" stroke="#00c000" stroke-width="0.35" fill-opacity="1"/><path d="M378.7,183.9L378.7,170.9M380.9,185.5L380.9,176.7M383.2,187.1L383.2,182.1M385.5,188.8L385.5,187.0M387.8,190.4L387.8,191.5M390.1,192.0L390.1,195.6M392.4,193.7L392.4,199.1M394.7,195.3L394.7,202.2M396.9,197.0L396.9,204.9M399.2,198.6L399.2,207.1M401.5,200.2L401.5,208.8M403.8,201.9L403.8,210.1M406.1,203.5L406.1,211.0M408.4,205.2L408.4,211.3M410.7,206.8L410.7,211.3M412.9,208.4L412.9,210.7M415.2,210.1L415.2,209.7M417.5,211.7L417.5,208.3M419.8,213.4L419.8,206.4" stroke="#00e400" stroke-width="0.42" fill="none"/><polygon points="376.5,186.9 417.6,216.4 422.0,210.3 380.8,180.8" fill="#ff0000"/><path d="M378.7,183.9L419.8,213.4" stroke="#ff5a4a" stroke-width="0.5"/><polygon points="419.8,213.4 422.1,212.6 424.5,211.8 426.8,211.0 429.1,210.2 431.5,209.4 433.8,208.7 436.2,207.9 438.5,207.1 440.8,206.3 443.2,205.5 445.5,204.7 447.8,204.0 450.2,203.2 452.5,202.4 454.8,201.6 457.2,200.8 459.5,200.0 461.8,199.2 464.2,198.5 466.5,197.7 468.9,196.9 471.2,196.1 473.5,195.3 475.9,194.5 478.2,193.8 478.2,190.8 475.9,192.1 473.5,193.5 471.2,194.8 468.9,196.0 466.5,197.2 464.2,198.3 461.8,199.5 459.5,200.5 457.2,201.5 454.8,202.5 452.5,203.4 450.2,204.3 447.8,205.2 445.5,206.0 443.2,206.7 440.8,207.4 438.5,208.1 436.2,208.7 433.8,209.3 431.5,209.8 429.1,210.3 426.8,210.8 424.5,211.2 422.1,211.5 419.8,211.9" fill="#043604" stroke="#00c000" stroke-width="0.35" fill-opacity="1"/><polygon points="421.0,216.9 479.4,197.3 477.0,190.3 418.6,209.8" fill="#ff0000"/><path d="M419.8,213.4L478.2,193.8" stroke="#ff5a4a" stroke-width="0.5"/><rect x="417.1" y="213.4" width="5.4" height="39.0" fill="#0000ff"/><rect x="419.3" y="213.4" width="1" height="39.0" fill="#2b3cff"/><g stroke="#8e1414" stroke-width=".5" fill="none"><path d="M99.3 310.8L120.6 301.6l-.3-1.2 3.6.2 5.4.2 3.6.6-1.6 6-4.6-1.4.4-1.6L108 313.8z"/><path d="M99.3 310.8L114.8 322.4l-1.2 1.2 4 .6 7.4.6 1.6-6-2.2 1.4-1 .8L108 308"/><path d="M124.2 302.6l5.2.3-1 2.6M117 321.4l6 .4.6-2.2"/></g></svg>
<div class="abs" style="left:4.2px;top:4.2px;width:60px;height:26.6px;background:#f0f0f0;box-shadow:0 0 0 .5px #fff"></div>
<div class="abs" style="left:6px;top:13px;width:56px;height:16.6px;box-shadow:inset 0 0 0 .5px #d5d5d8"></div>
<div class="t" style="left:11px;top:5.6px;font-size:5.5px;color:#333">Momento</div>
<div class="t" style="left:8.2px;top:16.2px;font-size:5.4px;color:#333">Min:</div><div class="t" style="left:23.5px;top:16.2px;font-size:5.4px;color:#333">-1</div>
<div class="t" style="left:8.2px;top:24.3px;font-size:5.4px;color:#333">Max:</div><div class="t" style="left:25.4px;top:24.3px;font-size:5.4px;color:#333">2</div>
</div>
<svg class="abs" style="left:789px;top:53px" width="11" height="2"><path d="M0 .5H11M.6 1.6H11" stroke="#c2c2ca" stroke-width=".6" stroke-dasharray=".6 .7"/></svg><div class="selbox" style="left:788.2px;top:56.6px;width:11.799999999999955px;height:10.199999999999996px"></div><div class="selbox" style="left:788.2px;top:67px;width:11.799999999999955px;height:11.799999999999997px"></div><div class="selbox" style="left:788.2px;top:107px;width:11.799999999999955px;height:12px"></div><div class="selbox" style="left:788.2px;top:174px;width:11.799999999999955px;height:12px"></div><svg class="abs" style="left:789.4px;top:56.8px" width="9.2" height="9.2" viewBox="0 0 10 10"><circle cx="5" cy="5" r="1.25" fill="#e3c92a" stroke="#5a4c08" stroke-width=".5"/></svg><svg class="abs" style="left:789.4px;top:68.4px" width="9.2" height="9.2" viewBox="0 0 10 10"><path d="M1.6 8.4L8.4 1.6" stroke="#0e6a52" stroke-width="1.2"/><path d="M1.4 8.6l1-.9M7.6 2.4l1-.9" stroke="#222" stroke-width="1.2"/></svg><svg class="abs" style="left:789.4px;top:84.4px" width="9.2" height="9.2" viewBox="0 0 10 10"><path d="M2 8L8 2" stroke="#d04a6a" stroke-width="1"/><path d="M2 8l1.6-1.6" stroke="#3a4ad0" stroke-width="1"/></svg><svg class="abs" style="left:789.4px;top:96.4px" width="9.2" height="9.2" viewBox="0 0 10 10"><path d="M2.2 2.4h5.6M2.2 7.6h5.6" stroke="#444" stroke-width="1.2"/><path d="M5 2.4v5.2" stroke="#777" stroke-width="2.2"/></svg><svg class="abs" style="left:789.4px;top:108.4px" width="9.2" height="9.2" viewBox="0 0 10 10"><path d="M2.2 7.6L6.8 3" stroke="#1c2ab8" stroke-width="2.9" stroke-linecap="round"/><path d="M6.2 2.8l1.6 1.4" stroke="#8fa0ff" stroke-width="1"/></svg><svg class="abs" style="left:789.4px;top:123.4px" width="9.2" height="9.2" viewBox="0 0 10 10"><text x="1" y="5" font-family="Liberation Sans,sans-serif" font-size="5" font-weight="bold" fill="#222">N</text><path d="M4 8.6L8.4 5" stroke="#d03030" stroke-width=".8"/><circle cx="6" cy="7" r=".9" fill="none" stroke="#d03030" stroke-width=".5"/></svg><svg class="abs" style="left:789.4px;top:135.4px" width="9.2" height="9.2" viewBox="0 0 10 10"><path d="M5 2L7 5.6H3z" fill="#333"/><path d="M1.4 7.4h7.2" stroke="#d03030" stroke-width=".9"/><path d="M1.6 6.2v2.2M8.4 6.2v2.2" stroke="#d03030" stroke-width=".5"/></svg><svg class="abs" style="left:789.4px;top:146.8px" width="9.2" height="9.2" viewBox="0 0 10 10"><text x="3.4" y="5.6" font-family="Liberation Sans,sans-serif" font-size="5.4" font-weight="bold" fill="#222">P</text><path d="M1.4 7.6h7.2" stroke="#d03030" stroke-width=".9"/><path d="M1.6 6.4v2.2M8.4 6.4v2.2" stroke="#d03030" stroke-width=".5"/></svg><svg class="abs" style="left:789.4px;top:163.4px" width="9.2" height="9.2" viewBox="0 0 10 10"><path d="M1.6 8.4L8.4 2" stroke="#2a3ad0" stroke-width="1"/><path d="M2.4 3.6L7.8 6.4" stroke="#d03030" stroke-width=".9"/></svg><svg class="abs" style="left:789.4px;top:175.4px" width="9.2" height="9.2" viewBox="0 0 10 10"><path d="M1.6 3.2h6.8" stroke="#222" stroke-width="1"/><path d="M6 4l1.8 3.6H4.2z" fill="#d03030"/><path d="M3.4 8.2h5.2" stroke="#d03030" stroke-width=".7"/></svg><svg class="abs" style="left:789.4px;top:185.6px" width="9.2" height="9.2" viewBox="0 0 10 10"><path d="M1.4 5h5" stroke="#111" stroke-width="1.3"/><circle cx="7" cy="4.6" r="1.4" fill="#c8a0e0" stroke="#7030a0" stroke-width=".5"/><path d="M6 6.2l2 .8" stroke="#d03030" stroke-width=".6"/></svg><svg class="abs" style="left:789.4px;top:198.6px" width="9.2" height="9.2" viewBox="0 0 10 10"><path d="M1.4 5h7.2" stroke="#d03030" stroke-width="1"/><path d="M1.6 3.6v2.8M8.4 3.6v2.8" stroke="#d03030" stroke-width=".6"/><path d="M3 4.2h4" stroke="#e8a0a0" stroke-width=".5"/></svg><svg class="abs" style="left:789.4px;top:213.4px" width="9.2" height="9.2" viewBox="0 0 10 10"><rect x="2" y="2" width="6" height="6" fill="#f4f4f4" stroke="#bdbdbd" stroke-width=".7" stroke-dasharray="1 .7"/><path d="M3.4 4h3.2M3.4 6h3.2" stroke="#c4c4c4" stroke-width=".7"/></svg><div class="abs" style="left:789px;top:81.6px;width:11px;height:.5px;background:#d2d2d8"></div><div class="abs" style="left:789px;top:121.4px;width:11px;height:.5px;background:#d2d2d8"></div><div class="abs" style="left:789px;top:159.4px;width:11px;height:.5px;background:#d2d2d8"></div><div class="abs" style="left:789px;top:210.6px;width:11px;height:.5px;background:#d2d2d8"></div><svg class="abs" style="left:789.9px;top:226.4px" width="3" height="2"><path d="M0 0H3L1.5 1.6Z" fill="#777"/></svg>
<div id="dd" class="abs"><div class="abs" style="left:73px;top:0;width:8.5px;height:226px;background:#f1f1f1"></div><div class="abs" style="left:73px;top:48.5px;width:8.5px;height:167.5px;background:#cdcdcd"></div><svg class="abs" style="left:73px;top:0" width="8.5" height="226"><path d="M2.6 5.6L4.3 3.8 6 5.6M2.6 220.4L4.3 222.2 6 220.4" stroke="#555" stroke-width=".7" fill="none"/></svg><div class="abs" style="left:0;top:181px;width:73px;height:7.3px;background:#0b78d6"></div><div class="li" style="top:2.40px">3: SLU 3</div><div class="li" style="top:9.90px">4: SLV (X+0.3Y+ecc)</div><div class="li" style="top:17.40px">5: SLV (X+0.3Y-ecc)</div><div class="li" style="top:24.90px">6: SLV (-X-0.3Y+ecc)</div><div class="li" style="top:32.40px">7: SLV (-X-0.3Y-ecc)</div><div class="li" style="top:39.90px">8: SLV (0.3X+Y+ecc)</div><div class="li" style="top:47.40px">9: SLV (0.3X+Y-ecc)</div><div class="li" style="top:54.90px">10: SLV (-0.3X-Y+ecc)</div><div class="li" style="top:62.40px">11: SLV (-0.3X-Y-ecc)</div><div class="li" style="top:69.90px">12: SLV_EL (X+0.3Y)</div><div class="li" style="top:77.40px">13: SLV_EL (-X-0.3Y)</div><div class="li" style="top:84.90px">14: SLV_EL (0.3X+Y)</div><div class="li" style="top:92.40px">15: SLV_EL (-0.3X-Y)</div><div class="li" style="top:99.90px">16: Raro 1</div><div class="li" style="top:107.40px">17: Raro 2</div><div class="li" style="top:114.90px">18: Raro 3</div><div class="li" style="top:122.40px">19: Freq 1</div><div class="li" style="top:129.90px">20: Freq 2</div><div class="li" style="top:137.40px">21: Freq 3</div><div class="li" style="top:144.90px">22: Qp</div><div class="li" style="top:152.40px">23: SLD X+0.3Y</div><div class="li" style="top:159.90px">24: SLD -X-0.3Y</div><div class="li" style="top:167.40px">25: SLD 0.3X+Y</div><div class="li" style="top:174.90px">26: SLD -0.3X-Y</div><div class="li" style="top:182.40px;color:#a8efb0">SLU</div><div class="li b" style="top:189.90px">SLE-Raro</div><div class="li b" style="top:197.40px">SLE-Freq.</div><div class="li b" style="top:204.90px">SLE-Q.Perman.</div><div class="li b" style="top:212.40px">SLV-Sismico</div><div class="li b" style="top:219.90px">SLD-Sismico</div></div>
<div class="abs" style="left:0;top:331px;width:800px;height:1.6px;background:#e2e3ea"></div><div class="t" style="left:2px;top:336.6px;font-size:5.5px;color:#444">Tabelle</div><svg class="abs" style="left:23px;top:337.6px" width="736" height="4"><defs><pattern id="gp" width="1.8" height="1.8" patternUnits="userSpaceOnUse"><rect width=".7" height=".7" fill="#c3c3cb"/><rect x=".9" y=".9" width=".7" height=".7" fill="#c3c3cb"/></pattern></defs><rect width="734" height="3.6" fill="url(#gp)"/></svg><svg class="abs" style="left:761.1px;top:338.8px" width="3" height="2"><path d="M0 0H3L1.5 1.6Z" fill="#555"/></svg><svg class="abs" style="left:770.4px;top:337.0px" width="4" height="5"><path d="M1.2 .4h1.8v2.2H1.2zM.4 2.7h3.2M2 2.7v2" stroke="#666" stroke-width=".5" fill="none"/><path d="M2.6 .4v2.2" stroke="#666" stroke-width=".7"/></svg><svg class="abs" style="left:780.6999999999999px;top:337.7px" width="3.4" height="3.4"><path d="M0 0L3.4 3.4M3.4 0L0 3.4" stroke="#555" stroke-width="0.65"/></svg><div id="tbl" class="abs"><div class="hc" style="left:0px;width:18.0px"></div><div class="hc" style="left:18px;width:16.7px">Trave</div><div class="hc" style="left:34.7px;width:33.6px">Gruppo</div><div class="hc" style="left:68.3px;width:14.3px">Prop</div><div class="hc" style="left:82.6px;width:25.2px">Calcestr.</div><div class="hc" style="left:107.8px;width:20.8px">Acciaio</div><div class="hc" style="left:128.6px;width:34.3px">Predim./Ver.</div><div class="hc" style="left:162.9px;width:19.7px">Zcr</div><div class="hc" style="left:182.6px;width:23.4px">Tipo pil.</div><div class="hc" style="left:206px;width:34.5px">Piano pilastri</div><div class="hc" style="left:240.5px;width:11.2px">Hcr</div><div class="hc" style="left:251.7px;width:27.0px">Tipo trave</div><div class="hc" style="left:278.7px;width:25.8px">Ambiente</div><div class="hc" style="left:304.5px;width:17.1px">Mrid</div><div class="hc" style="left:321.6px;width:17.1px">Beta1</div><div class="hc" style="left:338.7px;width:17.9px">Beta2</div><div class="hc" style="left:356.6px;width:94.9px">Stato</div><div class="rh" style="top:10.1px">R1</div><div class="c" style="left:18px;top:10.1px;width:16.7px">1</div><div class="c" style="left:34.7px;top:10.1px;width:33.6px">Pilastrata 1</div><div class="c" style="left:68.3px;top:10.1px;width:14.3px">1</div><div class="c" style="left:82.6px;top:10.1px;width:25.2px">C25/30</div><div class="c" style="left:107.8px;top:10.1px;width:20.8px">B450C</div><div class="c" style="left:128.6px;top:10.1px;width:34.3px">Pil.</div><div class="c" style="left:162.9px;top:10.1px;width:19.7px;text-align:right;padding-right:1.4px;box-sizing:border-box">525.00</div><div class="c" style="left:182.6px;top:10.1px;width:23.4px">Normale</div><div class="c" style="left:206px;top:10.1px;width:34.5px">---</div><div class="c" style="left:240.5px;top:10.1px;width:11.2px">---</div><div class="c" style="left:251.7px;top:10.1px;width:27.0px">---</div><div class="c" style="left:278.7px;top:10.1px;width:25.8px">b</div><div class="c" style="left:304.5px;top:10.1px;width:17.1px">Attivo</div><div class="c" style="left:321.6px;top:10.1px;width:17.1px">1.00</div><div class="c" style="left:338.7px;top:10.1px;width:17.9px">1.00</div><div class="c" style="left:356.6px;top:10.1px;width:94.9px;text-align:left;padding-left:1.6px;box-sizing:border-box">Da verificare</div><div class="rh" style="top:19.3px">R2</div><div class="c" style="left:18px;top:19.3px;width:16.7px">2</div><div class="c" style="left:34.7px;top:19.3px;width:33.6px">Pilastrata 2</div><div class="c" style="left:68.3px;top:19.3px;width:14.3px">1</div><div class="c" style="left:82.6px;top:19.3px;width:25.2px">C25/30</div><div class="c" style="left:107.8px;top:19.3px;width:20.8px">B450C</div><div class="c" style="left:128.6px;top:19.3px;width:34.3px">Pil.</div><div class="c" style="left:162.9px;top:19.3px;width:19.7px;text-align:right;padding-right:1.4px;box-sizing:border-box">525.00</div><div class="c" style="left:182.6px;top:19.3px;width:23.4px">Normale</div><div class="c" style="left:206px;top:19.3px;width:34.5px">---</div><div class="c" style="left:240.5px;top:19.3px;width:11.2px">---</div><div class="c" style="left:251.7px;top:19.3px;width:27.0px">---</div><div class="c" style="left:278.7px;top:19.3px;width:25.8px">b</div><div class="c" style="left:304.5px;top:19.3px;width:17.1px">Attivo</div><div class="c" style="left:321.6px;top:19.3px;width:17.1px">1.00</div><div class="c" style="left:338.7px;top:19.3px;width:17.9px">1.00</div><div class="c" style="left:356.6px;top:19.3px;width:94.9px;text-align:left;padding-left:1.6px;box-sizing:border-box">Da verificare</div><div class="rh" style="top:28.4px">R3</div><div class="c" style="left:18px;top:28.4px;width:16.7px">3</div><div class="c" style="left:34.7px;top:28.4px;width:33.6px">Pilastrata 3</div><div class="c" style="left:68.3px;top:28.4px;width:14.3px">1</div><div class="c" style="left:82.6px;top:28.4px;width:25.2px">C25/30</div><div class="c" style="left:107.8px;top:28.4px;width:20.8px">B450C</div><div class="c" style="left:128.6px;top:28.4px;width:34.3px">Pil.</div><div class="c" style="left:162.9px;top:28.4px;width:19.7px;text-align:right;padding-right:1.4px;box-sizing:border-box">525.00</div><div class="c" style="left:182.6px;top:28.4px;width:23.4px">Normale</div><div class="c" style="left:206px;top:28.4px;width:34.5px">---</div><div class="c" style="left:240.5px;top:28.4px;width:11.2px">---</div><div class="c" style="left:251.7px;top:28.4px;width:27.0px">---</div><div class="c" style="left:278.7px;top:28.4px;width:25.8px">b</div><div class="c" style="left:304.5px;top:28.4px;width:17.1px">Attivo</div><div class="c" style="left:321.6px;top:28.4px;width:17.1px">1.00</div><div class="c" style="left:338.7px;top:28.4px;width:17.9px">1.00</div><div class="c" style="left:356.6px;top:28.4px;width:94.9px;text-align:left;padding-left:1.6px;box-sizing:border-box">Da verificare</div><div class="rh" style="top:37.6px">R4</div><div class="c" style="left:18px;top:37.6px;width:16.7px">4</div><div class="c" style="left:34.7px;top:37.6px;width:33.6px">Travata 1</div><div class="c" style="left:68.3px;top:37.6px;width:14.3px">2</div><div class="c" style="left:82.6px;top:37.6px;width:25.2px">C25/30</div><div class="c" style="left:107.8px;top:37.6px;width:20.8px">B450C</div><div class="c" style="left:128.6px;top:37.6px;width:34.3px">Travi</div><div class="c" style="left:162.9px;top:37.6px;width:19.7px;text-align:right;padding-right:1.4px;box-sizing:border-box">400.00</div><div class="c" style="left:182.6px;top:37.6px;width:23.4px">---</div><div class="c" style="left:206px;top:37.6px;width:34.5px">---</div><div class="c" style="left:240.5px;top:37.6px;width:11.2px">---</div><div class="c" style="left:251.7px;top:37.6px;width:27.0px">Normale</div><div class="c" style="left:278.7px;top:37.6px;width:25.8px">b</div><div class="c" style="left:304.5px;top:37.6px;width:17.1px">Attivo</div><div class="c" style="left:321.6px;top:37.6px;width:17.1px">1.00</div><div class="c" style="left:338.7px;top:37.6px;width:17.9px">1.00</div><div class="c" style="left:356.6px;top:37.6px;width:94.9px;text-align:left;padding-left:1.6px;box-sizing:border-box">Da verificare</div><div class="rh" style="top:46.8px;line-height:8.6px">R5</div><div class="c" style="left:18px;top:46.8px;width:16.7px;line-height:8.6px">5</div><div class="c" style="left:34.7px;top:46.8px;width:33.6px;line-height:8.6px">Travata 2</div><div class="c" style="left:68.3px;top:46.8px;width:14.3px;line-height:8.6px">2</div><div class="c" style="left:82.6px;top:46.8px;width:25.2px;line-height:8.6px">C25/30</div><div class="c" style="left:107.8px;top:46.8px;width:20.8px;line-height:8.6px">B450C</div><div class="c" style="left:128.6px;top:46.8px;width:34.3px;line-height:8.6px">Travi</div><div class="c" style="left:162.9px;top:46.8px;width:19.7px;text-align:right;padding-right:1.4px;box-sizing:border-box;line-height:8.6px">400.00</div><div class="c" style="left:182.6px;top:46.8px;width:23.4px;line-height:8.6px">---</div><div class="c" style="left:206px;top:46.8px;width:34.5px;line-height:8.6px">---</div><div class="c" style="left:240.5px;top:46.8px;width:11.2px;line-height:8.6px">---</div><div class="c" style="left:251.7px;top:46.8px;width:27.0px;line-height:8.6px">Normale</div><div class="c" style="left:278.7px;top:46.8px;width:25.8px;line-height:8.6px">b</div><div class="c" style="left:304.5px;top:46.8px;width:17.1px;line-height:8.6px">Attivo</div><div class="c" style="left:321.6px;top:46.8px;width:17.1px;line-height:8.6px">1.00</div><div class="c" style="left:338.7px;top:46.8px;width:17.9px;line-height:8.6px">1.00</div><div class="c" style="left:356.6px;top:46.8px;width:94.9px;text-align:left;padding-left:1.6px;box-sizing:border-box;line-height:8.6px">Da verificare</div><div class="abs" style="left:18px;top:10.2px;width:16.4px;height:9px;box-shadow:inset 0 0 0 .7px #222"></div><div class="abs" style="left:33.6px;top:18.4px;width:1.4px;height:1.4px;background:#222"></div></div><div class="abs" style="left:776px;top:345.5px;width:10.5px;height:49.5px;background:#f1f1f1"></div><div class="abs" style="left:777.6px;top:355.2px;width:7.4px;height:8.8px;background:#c9c9c9"></div><svg class="abs" style="left:776px;top:345.5px" width="10.5" height="50"><path d="M3.4 5.6L5.2 3.8 7 5.6M3.4 44L5.2 45.8 7 44" stroke="#555" stroke-width=".7" fill="none"/></svg><div class="abs" style="left:0;top:395px;width:787px;height:.8px;background:#b4b4ba"></div><svg class="abs" style="left:0;top:395px" width="800" height="11"><path d="M30.6 0L35.6 9.3H84.6L89.6 0z" fill="#fff" stroke="#666" stroke-width=".6"/><path d="M31.2 .2H89" stroke="#fff" stroke-width="1"/><g fill="#777" stroke="#777" stroke-width=".4"><path d="M2.6 3v3.6" fill="none" stroke-width=".6"/><path d="M5.6 3v3.6L3.4 4.8zM13 3v3.6L10.8 4.8zM18.4 3v3.6l2.2-1.8zM25.2 3v3.6l2.2-1.8z"/><path d="M28.2 3v3.6" fill="none" stroke-width=".6"/></g><path d="M400.4 1.6v6.4" stroke="#999" stroke-width=".8" stroke-dasharray=".8 .8"/><path d="M408.6 3v3.6l-2.2-1.8zM772.6 3v3.6l2.2-1.8z" fill="#666"/><rect x="411.2" y="2.4" width="9.6" height="4.8" fill="#c4c8d8"/></svg><div class="t" style="left:36.6px;top:398px;font-size:5.7px;font-weight:bold;color:#222;letter-spacing:.18px">NTC18C-Modello</div>
<svg class="abs" style="left:1.2px;top:407.6px" width="2" height="9"><path d="M0.5 0V9M1.7 0.65V9" stroke="#acacb6" stroke-width="0.7" stroke-dasharray="0.65 0.65"/></svg><svg class="abs" style="left:4px;top:407px" width="45" height="10"><rect x="2" y="1.4" width="5.4" height="4.6" fill="#f8f8f8" stroke="#888" stroke-width=".6"/><path d="M2 2.6h5.4M3 4h3" stroke="#888" stroke-width=".5"/><circle cx="6.6" cy="6" r="1.7" fill="#eef3f7" stroke="#777" stroke-width=".6"/><path d="M7.8 7.2l1.8 1.8" stroke="#777" stroke-width=".8"/><g stroke="#b4b4ba" stroke-width=".55" fill="none"><path d="M19.6 2l3 3.4M22.6 2l-3 3.4M18.6 7.8h6.4M19.4 7.8v-1.4M21 7.8V6M22.6 7.8V6.6M24.2 7.8V7"/><path d="M31 2l3 3.4M34 2l-3 3.4M30 7.8h6.4M30.8 7.8V7M32.4 7.8V6.6M34 7.8V6M35.6 7.8v-1.4"/></g></svg><div class="sep" style="left:18.4px;top:407px;height:9.4px"></div><div class="sep" style="left:45.4px;top:407px;height:9.4px"></div><div class="sep" style="left:112px;top:407px;height:9.4px"></div><div class="sep" style="left:139.4px;top:407px;height:9.4px"></div><div class="t" style="left:50.5px;top:409.6px;font-size:5.8px;color:#8e8e92">4725.00</div><div class="t g" style="left:115.8px;top:410.8px;font-size:3.9px;font-weight:bold;letter-spacing:.05px">Max &nbsp;Min</div><div class="t g" style="left:143.6px;top:409.6px;font-size:5.4px">V1</div><div class="t g" style="left:155.3px;top:409.6px;font-size:5.4px">M1</div><div class="t g" style="left:167px;top:409.6px;font-size:5.4px">V2</div><div class="t g" style="left:178.9px;top:409.6px;font-size:5.4px">M2</div><div class="t g" style="left:190.7px;top:409.6px;font-size:5.4px">AF</div><div class="t g" style="left:202px;top:409.6px;font-size:5.4px">MT</div><svg class="abs" style="left:213.1px;top:414.6px" width="3" height="2"><path d="M0 0H3L1.5 1.6Z" fill="#555"/></svg>
</div>
</body></html>
